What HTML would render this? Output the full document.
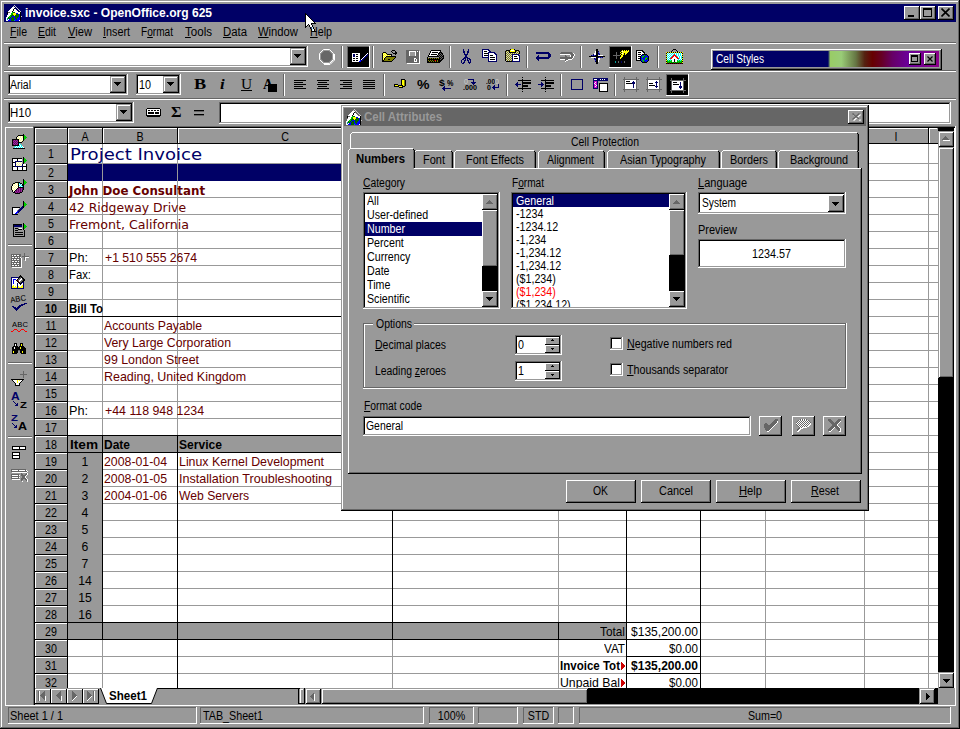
<!DOCTYPE html>
<html><head><meta charset="utf-8"><title>invoice.sxc - OpenOffice.org 625</title>
<style>
html,body{margin:0;padding:0;}
body{width:960px;height:729px;background:#999999;position:relative;overflow:hidden;font-family:"Liberation Sans",sans-serif;font-size:12px;}
div,svg{position:absolute;box-sizing:border-box;}
u{text-decoration:underline;text-underline-offset:1px;}
</style></head><body>
<div style="left:1px;top:1px;width:1px;height:727px;background:#ffffff;"></div>
<div style="left:1px;top:1px;width:957px;height:1px;background:#ffffff;"></div>
<div style="left:958px;top:1px;width:1px;height:727px;background:#666666;"></div>
<div style="left:1px;top:727px;width:958px;height:1px;background:#666666;"></div>
<div style="left:959px;top:0px;width:1px;height:729px;background:#000000;"></div>
<div style="left:0px;top:728px;width:960px;height:1px;background:#000000;"></div>
<div style="left:4px;top:4px;width:952px;height:18px;background:#000066;"></div>
<div style="left:25px;top:5px;line-height:15px;height:15px;font-size:13px;font-family:'Liberation Sans',sans-serif;color:#ffffff;white-space:pre;font-weight:bold;transform:scaleX(0.928);transform-origin:0 0;">invoice.sxc - OpenOffice.org 625</div>
<div style="left:904px;top:6px;width:16px;height:14px;background:#999999;"></div>
<div style="left:904px;top:6px;width:15px;height:1px;background:#ffffff;"></div>
<div style="left:904px;top:6px;width:1px;height:13px;background:#ffffff;"></div>
<div style="left:904px;top:19px;width:16px;height:1px;background:#000000;"></div>
<div style="left:919px;top:6px;width:1px;height:14px;background:#000000;"></div>
<div style="left:905px;top:18px;width:14px;height:1px;background:#666666;"></div>
<div style="left:918px;top:7px;width:1px;height:12px;background:#666666;"></div>
<div style="left:908px;top:15px;width:6px;height:2px;background:#000000;"></div>
<div style="left:920px;top:6px;width:16px;height:14px;background:#999999;"></div>
<div style="left:920px;top:6px;width:15px;height:1px;background:#ffffff;"></div>
<div style="left:920px;top:6px;width:1px;height:13px;background:#ffffff;"></div>
<div style="left:920px;top:19px;width:16px;height:1px;background:#000000;"></div>
<div style="left:935px;top:6px;width:1px;height:14px;background:#000000;"></div>
<div style="left:921px;top:18px;width:14px;height:1px;background:#666666;"></div>
<div style="left:934px;top:7px;width:1px;height:12px;background:#666666;"></div>
<div style="left:923px;top:8px;width:9px;height:9px;border:1px solid #000;border-top:2px solid #000;"></div>
<div style="left:938px;top:6px;width:16px;height:14px;background:#999999;"></div>
<div style="left:938px;top:6px;width:15px;height:1px;background:#ffffff;"></div>
<div style="left:938px;top:6px;width:1px;height:13px;background:#ffffff;"></div>
<div style="left:938px;top:19px;width:16px;height:1px;background:#000000;"></div>
<div style="left:953px;top:6px;width:1px;height:14px;background:#000000;"></div>
<div style="left:939px;top:18px;width:14px;height:1px;background:#666666;"></div>
<div style="left:952px;top:7px;width:1px;height:12px;background:#666666;"></div>
<svg style="left:941px;top:8px" width="9" height="9" viewBox="0 0 9 9" shape-rendering="crispEdges"><path d="M0.5,0.5 L8.5,8.5 M8.5,0.5 L0.5,8.5" stroke="#000" stroke-width="1.6" fill="none" shape-rendering="auto"/></svg>
<div style="left:10px;top:25px;line-height:14px;height:14px;font-size:12px;font-family:'Liberation Sans',sans-serif;color:#000000;white-space:pre;transform:scaleX(0.879);transform-origin:0 0;"><u>F</u>ile</div>
<div style="left:38px;top:25px;line-height:14px;height:14px;font-size:12px;font-family:'Liberation Sans',sans-serif;color:#000000;white-space:pre;transform:scaleX(0.871);transform-origin:0 0;"><u>E</u>dit</div>
<div style="left:68px;top:25px;line-height:14px;height:14px;font-size:12px;font-family:'Liberation Sans',sans-serif;color:#000000;white-space:pre;transform:scaleX(0.931);transform-origin:0 0;"><u>V</u>iew</div>
<div style="left:103px;top:25px;line-height:14px;height:14px;font-size:12px;font-family:'Liberation Sans',sans-serif;color:#000000;white-space:pre;transform:scaleX(0.900);transform-origin:0 0;"><u>I</u>nsert</div>
<div style="left:141px;top:25px;line-height:14px;height:14px;font-size:12px;font-family:'Liberation Sans',sans-serif;color:#000000;white-space:pre;transform:scaleX(0.842);transform-origin:0 0;">F<u>o</u>rmat</div>
<div style="left:185px;top:25px;line-height:14px;height:14px;font-size:12px;font-family:'Liberation Sans',sans-serif;color:#000000;white-space:pre;transform:scaleX(0.964);transform-origin:0 0;"><u>T</u>ools</div>
<div style="left:223px;top:25px;line-height:14px;height:14px;font-size:12px;font-family:'Liberation Sans',sans-serif;color:#000000;white-space:pre;transform:scaleX(0.947);transform-origin:0 0;"><u>D</u>ata</div>
<div style="left:258px;top:25px;line-height:14px;height:14px;font-size:12px;font-family:'Liberation Sans',sans-serif;color:#000000;white-space:pre;transform:scaleX(0.937);transform-origin:0 0;"><u>W</u>indow</div>
<div style="left:310px;top:25px;line-height:14px;height:14px;font-size:12px;font-family:'Liberation Sans',sans-serif;color:#000000;white-space:pre;transform:scaleX(0.891);transform-origin:0 0;z-index:5;"><u>H</u>elp</div>
<div style="left:4px;top:42px;width:952px;height:1px;background:#666666;"></div>
<div style="left:4px;top:43px;width:952px;height:1px;background:#ffffff;"></div>
<div style="left:4px;top:70px;width:952px;height:1px;background:#666666;"></div>
<div style="left:4px;top:71px;width:952px;height:1px;background:#ffffff;"></div>
<div style="left:4px;top:98px;width:952px;height:1px;background:#666666;"></div>
<div style="left:4px;top:99px;width:952px;height:1px;background:#ffffff;"></div>
<div style="left:8px;top:46px;width:300px;height:21px;background:#ffffff;"></div>
<div style="left:8px;top:46px;width:299px;height:1px;background:#666666;"></div>
<div style="left:8px;top:46px;width:1px;height:20px;background:#666666;"></div>
<div style="left:8px;top:66px;width:300px;height:1px;background:#ffffff;"></div>
<div style="left:307px;top:46px;width:1px;height:21px;background:#ffffff;"></div>
<div style="left:9px;top:47px;width:297px;height:1px;background:#000000;"></div>
<div style="left:9px;top:47px;width:1px;height:18px;background:#000000;"></div>
<div style="left:9px;top:65px;width:298px;height:1px;background:#999999;"></div>
<div style="left:306px;top:47px;width:1px;height:19px;background:#999999;"></div>
<div style="left:290px;top:48px;width:16px;height:17px;background:#999999;"></div>
<div style="left:291px;top:49px;width:14px;height:1px;background:#ffffff;"></div>
<div style="left:291px;top:49px;width:1px;height:15px;background:#ffffff;"></div>
<div style="left:290px;top:64px;width:16px;height:1px;background:#000000;"></div>
<div style="left:305px;top:48px;width:1px;height:17px;background:#000000;"></div>
<div style="left:291px;top:63px;width:14px;height:1px;background:#666666;"></div>
<div style="left:304px;top:49px;width:1px;height:15px;background:#666666;"></div>
<div style="left:294px;top:54px;width:7px;height:1px;background:#000000;"></div>
<div style="left:295px;top:55px;width:5px;height:1px;background:#000000;"></div>
<div style="left:296px;top:56px;width:3px;height:1px;background:#000000;"></div>
<div style="left:297px;top:57px;width:1px;height:1px;background:#000000;"></div>
<div style="left:8px;top:74px;width:120px;height:21px;background:#ffffff;"></div>
<div style="left:8px;top:74px;width:119px;height:1px;background:#666666;"></div>
<div style="left:8px;top:74px;width:1px;height:20px;background:#666666;"></div>
<div style="left:8px;top:94px;width:120px;height:1px;background:#ffffff;"></div>
<div style="left:127px;top:74px;width:1px;height:21px;background:#ffffff;"></div>
<div style="left:9px;top:75px;width:117px;height:1px;background:#000000;"></div>
<div style="left:9px;top:75px;width:1px;height:18px;background:#000000;"></div>
<div style="left:9px;top:93px;width:118px;height:1px;background:#999999;"></div>
<div style="left:126px;top:75px;width:1px;height:19px;background:#999999;"></div>
<div style="left:10px;top:78px;line-height:14px;height:14px;font-size:12px;font-family:'Liberation Sans',sans-serif;color:#000000;white-space:pre;transform:scaleX(0.875);transform-origin:0 0;">Arial</div>
<div style="left:110px;top:76px;width:16px;height:17px;background:#999999;"></div>
<div style="left:111px;top:77px;width:14px;height:1px;background:#ffffff;"></div>
<div style="left:111px;top:77px;width:1px;height:15px;background:#ffffff;"></div>
<div style="left:110px;top:92px;width:16px;height:1px;background:#000000;"></div>
<div style="left:125px;top:76px;width:1px;height:17px;background:#000000;"></div>
<div style="left:111px;top:91px;width:14px;height:1px;background:#666666;"></div>
<div style="left:124px;top:77px;width:1px;height:15px;background:#666666;"></div>
<div style="left:114px;top:82px;width:7px;height:1px;background:#000000;"></div>
<div style="left:115px;top:83px;width:5px;height:1px;background:#000000;"></div>
<div style="left:116px;top:84px;width:3px;height:1px;background:#000000;"></div>
<div style="left:117px;top:85px;width:1px;height:1px;background:#000000;"></div>
<div style="left:136px;top:74px;width:45px;height:21px;background:#ffffff;"></div>
<div style="left:136px;top:74px;width:44px;height:1px;background:#666666;"></div>
<div style="left:136px;top:74px;width:1px;height:20px;background:#666666;"></div>
<div style="left:136px;top:94px;width:45px;height:1px;background:#ffffff;"></div>
<div style="left:180px;top:74px;width:1px;height:21px;background:#ffffff;"></div>
<div style="left:137px;top:75px;width:42px;height:1px;background:#000000;"></div>
<div style="left:137px;top:75px;width:1px;height:18px;background:#000000;"></div>
<div style="left:137px;top:93px;width:43px;height:1px;background:#999999;"></div>
<div style="left:179px;top:75px;width:1px;height:19px;background:#999999;"></div>
<div style="left:139px;top:78px;line-height:14px;height:14px;font-size:12px;font-family:'Liberation Sans',sans-serif;color:#000000;white-space:pre;transform:scaleX(0.899);transform-origin:0 0;">10</div>
<div style="left:163px;top:76px;width:16px;height:17px;background:#999999;"></div>
<div style="left:164px;top:77px;width:14px;height:1px;background:#ffffff;"></div>
<div style="left:164px;top:77px;width:1px;height:15px;background:#ffffff;"></div>
<div style="left:163px;top:92px;width:16px;height:1px;background:#000000;"></div>
<div style="left:178px;top:76px;width:1px;height:17px;background:#000000;"></div>
<div style="left:164px;top:91px;width:14px;height:1px;background:#666666;"></div>
<div style="left:177px;top:77px;width:1px;height:15px;background:#666666;"></div>
<div style="left:167px;top:82px;width:7px;height:1px;background:#000000;"></div>
<div style="left:168px;top:83px;width:5px;height:1px;background:#000000;"></div>
<div style="left:169px;top:84px;width:3px;height:1px;background:#000000;"></div>
<div style="left:170px;top:85px;width:1px;height:1px;background:#000000;"></div>
<div style="left:8px;top:102px;width:126px;height:21px;background:#ffffff;"></div>
<div style="left:8px;top:102px;width:125px;height:1px;background:#666666;"></div>
<div style="left:8px;top:102px;width:1px;height:20px;background:#666666;"></div>
<div style="left:8px;top:122px;width:126px;height:1px;background:#ffffff;"></div>
<div style="left:133px;top:102px;width:1px;height:21px;background:#ffffff;"></div>
<div style="left:9px;top:103px;width:123px;height:1px;background:#000000;"></div>
<div style="left:9px;top:103px;width:1px;height:18px;background:#000000;"></div>
<div style="left:9px;top:121px;width:124px;height:1px;background:#999999;"></div>
<div style="left:132px;top:103px;width:1px;height:19px;background:#999999;"></div>
<div style="left:10px;top:106px;line-height:14px;height:14px;font-size:12px;font-family:'Liberation Sans',sans-serif;color:#000000;white-space:pre;transform:scaleX(0.954);transform-origin:0 0;">H10</div>
<div style="left:116px;top:104px;width:16px;height:17px;background:#999999;"></div>
<div style="left:117px;top:105px;width:14px;height:1px;background:#ffffff;"></div>
<div style="left:117px;top:105px;width:1px;height:15px;background:#ffffff;"></div>
<div style="left:116px;top:120px;width:16px;height:1px;background:#000000;"></div>
<div style="left:131px;top:104px;width:1px;height:17px;background:#000000;"></div>
<div style="left:117px;top:119px;width:14px;height:1px;background:#666666;"></div>
<div style="left:130px;top:105px;width:1px;height:15px;background:#666666;"></div>
<div style="left:120px;top:110px;width:7px;height:1px;background:#000000;"></div>
<div style="left:121px;top:111px;width:5px;height:1px;background:#000000;"></div>
<div style="left:122px;top:112px;width:3px;height:1px;background:#000000;"></div>
<div style="left:123px;top:113px;width:1px;height:1px;background:#000000;"></div>
<div style="left:219px;top:102px;width:732px;height:22px;background:#ffffff;"></div>
<div style="left:219px;top:102px;width:731px;height:1px;background:#666666;"></div>
<div style="left:219px;top:102px;width:1px;height:21px;background:#666666;"></div>
<div style="left:219px;top:123px;width:732px;height:1px;background:#ffffff;"></div>
<div style="left:950px;top:102px;width:1px;height:22px;background:#ffffff;"></div>
<div style="left:220px;top:103px;width:729px;height:1px;background:#000000;"></div>
<div style="left:220px;top:103px;width:1px;height:19px;background:#000000;"></div>
<div style="left:220px;top:122px;width:730px;height:1px;background:#999999;"></div>
<div style="left:949px;top:103px;width:1px;height:20px;background:#999999;"></div>
<div style="left:5px;top:127px;width:1px;height:578px;background:#ffffff;"></div>
<div style="left:5px;top:127px;width:28px;height:1px;background:#ffffff;"></div>
<div style="left:5px;top:705px;width:30px;height:1px;background:#ffffff;"></div>
<div style="left:33px;top:126px;width:923px;height:580px;background:#ffffff;"></div>
<div style="left:33px;top:126px;width:922px;height:1px;background:#666666;"></div>
<div style="left:33px;top:126px;width:1px;height:579px;background:#666666;"></div>
<div style="left:34px;top:127px;width:921px;height:1px;background:#000000;"></div>
<div style="left:34px;top:127px;width:1px;height:578px;background:#000000;"></div>
<div style="left:33px;top:705px;width:923px;height:1px;background:#ffffff;"></div>
<div style="left:955px;top:126px;width:1px;height:580px;background:#ffffff;"></div>
<div style="left:68px;top:163px;width:870px;height:1px;background:#999999;"></div>
<div style="left:68px;top:180px;width:870px;height:1px;background:#999999;"></div>
<div style="left:68px;top:197px;width:870px;height:1px;background:#999999;"></div>
<div style="left:68px;top:214px;width:870px;height:1px;background:#999999;"></div>
<div style="left:68px;top:231px;width:870px;height:1px;background:#999999;"></div>
<div style="left:68px;top:248px;width:870px;height:1px;background:#999999;"></div>
<div style="left:68px;top:265px;width:870px;height:1px;background:#999999;"></div>
<div style="left:68px;top:282px;width:870px;height:1px;background:#999999;"></div>
<div style="left:68px;top:299px;width:870px;height:1px;background:#999999;"></div>
<div style="left:68px;top:316px;width:870px;height:1px;background:#999999;"></div>
<div style="left:68px;top:333px;width:870px;height:1px;background:#999999;"></div>
<div style="left:68px;top:350px;width:870px;height:1px;background:#999999;"></div>
<div style="left:68px;top:367px;width:870px;height:1px;background:#999999;"></div>
<div style="left:68px;top:384px;width:870px;height:1px;background:#999999;"></div>
<div style="left:68px;top:401px;width:870px;height:1px;background:#999999;"></div>
<div style="left:68px;top:418px;width:870px;height:1px;background:#999999;"></div>
<div style="left:68px;top:435px;width:870px;height:1px;background:#999999;"></div>
<div style="left:68px;top:452px;width:870px;height:1px;background:#999999;"></div>
<div style="left:68px;top:469px;width:870px;height:1px;background:#999999;"></div>
<div style="left:68px;top:486px;width:870px;height:1px;background:#999999;"></div>
<div style="left:68px;top:503px;width:870px;height:1px;background:#999999;"></div>
<div style="left:68px;top:520px;width:870px;height:1px;background:#999999;"></div>
<div style="left:68px;top:537px;width:870px;height:1px;background:#999999;"></div>
<div style="left:68px;top:554px;width:870px;height:1px;background:#999999;"></div>
<div style="left:68px;top:571px;width:870px;height:1px;background:#999999;"></div>
<div style="left:68px;top:588px;width:870px;height:1px;background:#999999;"></div>
<div style="left:68px;top:605px;width:870px;height:1px;background:#999999;"></div>
<div style="left:68px;top:622px;width:870px;height:1px;background:#999999;"></div>
<div style="left:68px;top:639px;width:870px;height:1px;background:#999999;"></div>
<div style="left:68px;top:656px;width:870px;height:1px;background:#999999;"></div>
<div style="left:68px;top:673px;width:870px;height:1px;background:#999999;"></div>
<div style="left:102px;top:144px;width:1px;height:544px;background:#999999;"></div>
<div style="left:177px;top:144px;width:1px;height:544px;background:#999999;"></div>
<div style="left:392px;top:144px;width:1px;height:544px;background:#999999;"></div>
<div style="left:558px;top:144px;width:1px;height:544px;background:#999999;"></div>
<div style="left:626px;top:144px;width:1px;height:544px;background:#999999;"></div>
<div style="left:700px;top:144px;width:1px;height:544px;background:#999999;"></div>
<div style="left:765px;top:144px;width:1px;height:544px;background:#999999;"></div>
<div style="left:864px;top:144px;width:1px;height:544px;background:#999999;"></div>
<div style="left:928px;top:144px;width:1px;height:544px;background:#999999;"></div>
<div style="left:68px;top:164px;width:559px;height:17px;background:#000066;"></div>
<div style="left:68px;top:436px;width:559px;height:17px;background:#999999;"></div>
<div style="left:68px;top:453px;width:35px;height:170px;background:#999999;"></div>
<div style="left:68px;top:623px;width:558px;height:17px;background:#999999;"></div>
<div style="left:102px;top:164px;width:1px;height:17px;background:#999999;"></div>
<div style="left:177px;top:164px;width:1px;height:17px;background:#999999;"></div>
<div style="left:392px;top:164px;width:1px;height:17px;background:#999999;"></div>
<div style="left:558px;top:164px;width:1px;height:17px;background:#999999;"></div>
<div style="left:626px;top:164px;width:1px;height:17px;background:#999999;"></div>
<div style="left:700px;top:164px;width:1px;height:17px;background:#999999;"></div>
<div style="left:765px;top:164px;width:1px;height:17px;background:#999999;"></div>
<div style="left:864px;top:164px;width:1px;height:17px;background:#999999;"></div>
<div style="left:928px;top:164px;width:1px;height:17px;background:#999999;"></div>
<div style="left:68px;top:435px;width:559px;height:1px;background:#000000;"></div>
<div style="left:68px;top:452px;width:559px;height:1px;background:#000000;"></div>
<div style="left:68px;top:622px;width:559px;height:1px;background:#000000;"></div>
<div style="left:68px;top:639px;width:559px;height:1px;background:#000000;"></div>
<div style="left:102px;top:436px;width:1px;height:204px;background:#000000;"></div>
<div style="left:392px;top:436px;width:1px;height:204px;background:#000000;"></div>
<div style="left:177px;top:436px;width:1px;height:252px;background:#000000;"></div>
<div style="left:626px;top:436px;width:1px;height:252px;background:#000000;"></div>
<div style="left:700px;top:436px;width:1px;height:252px;background:#000000;"></div>
<div style="left:627px;top:622px;width:74px;height:1px;background:#000000;"></div>
<div style="left:627px;top:639px;width:74px;height:1px;background:#000000;"></div>
<div style="left:627px;top:656px;width:74px;height:1px;background:#000000;"></div>
<div style="left:627px;top:673px;width:74px;height:1px;background:#000000;"></div>
<div style="left:558px;top:623px;width:1px;height:17px;background:#000000;"></div>
<div style="left:68px;top:316px;width:559px;height:1px;background:#000000;"></div>
<div style="left:35px;top:128px;width:903px;height:15px;background:#999999;"></div>
<div style="left:35px;top:143px;width:903px;height:1px;background:#000000;"></div>
<div style="left:35px;top:128px;width:1px;height:15px;background:#ffffff;"></div>
<div style="left:35px;top:128px;width:32px;height:1px;background:#ffffff;"></div>
<div style="left:67px;top:128px;width:1px;height:16px;background:#000000;"></div>
<div style="left:68px;top:128px;width:34px;height:1px;background:#ffffff;"></div>
<div style="left:68px;top:128px;width:1px;height:15px;background:#ffffff;"></div>
<div style="left:102px;top:128px;width:1px;height:16px;background:#000000;"></div>
<div style="left:65px;top:130px;line-height:14px;height:14px;font-size:12px;font-family:'Liberation Sans',sans-serif;color:#000000;white-space:pre;width:40px;text-align:center;transform:scaleX(0.89);transform-origin:50% 0;">A</div>
<div style="left:103px;top:128px;width:74px;height:1px;background:#ffffff;"></div>
<div style="left:103px;top:128px;width:1px;height:15px;background:#ffffff;"></div>
<div style="left:177px;top:128px;width:1px;height:16px;background:#000000;"></div>
<div style="left:120px;top:130px;line-height:14px;height:14px;font-size:12px;font-family:'Liberation Sans',sans-serif;color:#000000;white-space:pre;width:40px;text-align:center;transform:scaleX(0.89);transform-origin:50% 0;">B</div>
<div style="left:178px;top:128px;width:214px;height:1px;background:#ffffff;"></div>
<div style="left:178px;top:128px;width:1px;height:15px;background:#ffffff;"></div>
<div style="left:392px;top:128px;width:1px;height:16px;background:#000000;"></div>
<div style="left:265px;top:130px;line-height:14px;height:14px;font-size:12px;font-family:'Liberation Sans',sans-serif;color:#000000;white-space:pre;width:40px;text-align:center;transform:scaleX(0.89);transform-origin:50% 0;">C</div>
<div style="left:393px;top:128px;width:165px;height:1px;background:#ffffff;"></div>
<div style="left:393px;top:128px;width:1px;height:15px;background:#ffffff;"></div>
<div style="left:558px;top:128px;width:1px;height:16px;background:#000000;"></div>
<div style="left:455px;top:130px;line-height:14px;height:14px;font-size:12px;font-family:'Liberation Sans',sans-serif;color:#000000;white-space:pre;width:40px;text-align:center;transform:scaleX(0.89);transform-origin:50% 0;">D</div>
<div style="left:559px;top:128px;width:67px;height:1px;background:#ffffff;"></div>
<div style="left:559px;top:128px;width:1px;height:15px;background:#ffffff;"></div>
<div style="left:626px;top:128px;width:1px;height:16px;background:#000000;"></div>
<div style="left:572px;top:130px;line-height:14px;height:14px;font-size:12px;font-family:'Liberation Sans',sans-serif;color:#000000;white-space:pre;width:40px;text-align:center;transform:scaleX(0.89);transform-origin:50% 0;">E</div>
<div style="left:627px;top:128px;width:73px;height:1px;background:#ffffff;"></div>
<div style="left:627px;top:128px;width:1px;height:15px;background:#ffffff;"></div>
<div style="left:700px;top:128px;width:1px;height:16px;background:#000000;"></div>
<div style="left:643px;top:130px;line-height:14px;height:14px;font-size:12px;font-family:'Liberation Sans',sans-serif;color:#000000;white-space:pre;width:40px;text-align:center;transform:scaleX(0.89);transform-origin:50% 0;">F</div>
<div style="left:701px;top:128px;width:64px;height:1px;background:#ffffff;"></div>
<div style="left:701px;top:128px;width:1px;height:15px;background:#ffffff;"></div>
<div style="left:765px;top:128px;width:1px;height:16px;background:#000000;"></div>
<div style="left:713px;top:130px;line-height:14px;height:14px;font-size:12px;font-family:'Liberation Sans',sans-serif;color:#000000;white-space:pre;width:40px;text-align:center;transform:scaleX(0.89);transform-origin:50% 0;">G</div>
<div style="left:766px;top:128px;width:98px;height:1px;background:#ffffff;"></div>
<div style="left:766px;top:128px;width:1px;height:15px;background:#ffffff;"></div>
<div style="left:864px;top:128px;width:1px;height:16px;background:#000000;"></div>
<div style="left:795px;top:130px;line-height:14px;height:14px;font-size:12px;font-family:'Liberation Sans',sans-serif;color:#000000;white-space:pre;width:40px;text-align:center;transform:scaleX(0.89);transform-origin:50% 0;">H</div>
<div style="left:865px;top:128px;width:63px;height:1px;background:#ffffff;"></div>
<div style="left:865px;top:128px;width:1px;height:15px;background:#ffffff;"></div>
<div style="left:928px;top:128px;width:1px;height:16px;background:#000000;"></div>
<div style="left:876px;top:130px;line-height:14px;height:14px;font-size:12px;font-family:'Liberation Sans',sans-serif;color:#000000;white-space:pre;width:40px;text-align:center;transform:scaleX(0.89);transform-origin:50% 0;">I</div>
<div style="left:929px;top:128px;width:8px;height:1px;background:#ffffff;"></div>
<div style="left:929px;top:128px;width:1px;height:15px;background:#ffffff;"></div>
<div style="left:35px;top:144px;width:32px;height:544px;background:#999999;"></div>
<div style="left:67px;top:144px;width:1px;height:544px;background:#000000;"></div>
<div style="left:35px;top:144px;width:32px;height:1px;background:#ffffff;"></div>
<div style="left:35px;top:144px;width:1px;height:19px;background:#ffffff;"></div>
<div style="left:35px;top:163px;width:33px;height:1px;background:#000000;"></div>
<div style="left:41px;top:147px;line-height:14px;height:14px;font-size:12px;font-family:'Liberation Sans',sans-serif;color:#000000;white-space:pre;width:20px;text-align:center;transform:scaleX(0.89);transform-origin:50% 0;">1</div>
<div style="left:35px;top:164px;width:32px;height:1px;background:#ffffff;"></div>
<div style="left:35px;top:164px;width:1px;height:16px;background:#ffffff;"></div>
<div style="left:35px;top:180px;width:33px;height:1px;background:#000000;"></div>
<div style="left:41px;top:166px;line-height:14px;height:14px;font-size:12px;font-family:'Liberation Sans',sans-serif;color:#000000;white-space:pre;width:20px;text-align:center;transform:scaleX(0.89);transform-origin:50% 0;">2</div>
<div style="left:35px;top:181px;width:32px;height:1px;background:#ffffff;"></div>
<div style="left:35px;top:181px;width:1px;height:16px;background:#ffffff;"></div>
<div style="left:35px;top:197px;width:33px;height:1px;background:#000000;"></div>
<div style="left:41px;top:183px;line-height:14px;height:14px;font-size:12px;font-family:'Liberation Sans',sans-serif;color:#000000;white-space:pre;width:20px;text-align:center;transform:scaleX(0.89);transform-origin:50% 0;">3</div>
<div style="left:35px;top:198px;width:32px;height:1px;background:#ffffff;"></div>
<div style="left:35px;top:198px;width:1px;height:16px;background:#ffffff;"></div>
<div style="left:35px;top:214px;width:33px;height:1px;background:#000000;"></div>
<div style="left:41px;top:200px;line-height:14px;height:14px;font-size:12px;font-family:'Liberation Sans',sans-serif;color:#000000;white-space:pre;width:20px;text-align:center;transform:scaleX(0.89);transform-origin:50% 0;">4</div>
<div style="left:35px;top:215px;width:32px;height:1px;background:#ffffff;"></div>
<div style="left:35px;top:215px;width:1px;height:16px;background:#ffffff;"></div>
<div style="left:35px;top:231px;width:33px;height:1px;background:#000000;"></div>
<div style="left:41px;top:217px;line-height:14px;height:14px;font-size:12px;font-family:'Liberation Sans',sans-serif;color:#000000;white-space:pre;width:20px;text-align:center;transform:scaleX(0.89);transform-origin:50% 0;">5</div>
<div style="left:35px;top:232px;width:32px;height:1px;background:#ffffff;"></div>
<div style="left:35px;top:232px;width:1px;height:16px;background:#ffffff;"></div>
<div style="left:35px;top:248px;width:33px;height:1px;background:#000000;"></div>
<div style="left:41px;top:234px;line-height:14px;height:14px;font-size:12px;font-family:'Liberation Sans',sans-serif;color:#000000;white-space:pre;width:20px;text-align:center;transform:scaleX(0.89);transform-origin:50% 0;">6</div>
<div style="left:35px;top:249px;width:32px;height:1px;background:#ffffff;"></div>
<div style="left:35px;top:249px;width:1px;height:16px;background:#ffffff;"></div>
<div style="left:35px;top:265px;width:33px;height:1px;background:#000000;"></div>
<div style="left:41px;top:251px;line-height:14px;height:14px;font-size:12px;font-family:'Liberation Sans',sans-serif;color:#000000;white-space:pre;width:20px;text-align:center;transform:scaleX(0.89);transform-origin:50% 0;">7</div>
<div style="left:35px;top:266px;width:32px;height:1px;background:#ffffff;"></div>
<div style="left:35px;top:266px;width:1px;height:16px;background:#ffffff;"></div>
<div style="left:35px;top:282px;width:33px;height:1px;background:#000000;"></div>
<div style="left:41px;top:268px;line-height:14px;height:14px;font-size:12px;font-family:'Liberation Sans',sans-serif;color:#000000;white-space:pre;width:20px;text-align:center;transform:scaleX(0.89);transform-origin:50% 0;">8</div>
<div style="left:35px;top:283px;width:32px;height:1px;background:#ffffff;"></div>
<div style="left:35px;top:283px;width:1px;height:16px;background:#ffffff;"></div>
<div style="left:35px;top:299px;width:33px;height:1px;background:#000000;"></div>
<div style="left:41px;top:285px;line-height:14px;height:14px;font-size:12px;font-family:'Liberation Sans',sans-serif;color:#000000;white-space:pre;width:20px;text-align:center;transform:scaleX(0.89);transform-origin:50% 0;">9</div>
<div style="left:35px;top:300px;width:32px;height:1px;background:#ffffff;"></div>
<div style="left:35px;top:300px;width:1px;height:16px;background:#ffffff;"></div>
<div style="left:35px;top:316px;width:33px;height:1px;background:#000000;"></div>
<div style="left:41px;top:302px;line-height:14px;height:14px;font-size:12px;font-family:'Liberation Sans',sans-serif;color:#000000;white-space:pre;font-weight:bold;width:20px;text-align:center;transform:scaleX(0.89);transform-origin:50% 0;">10</div>
<div style="left:35px;top:317px;width:32px;height:1px;background:#ffffff;"></div>
<div style="left:35px;top:317px;width:1px;height:16px;background:#ffffff;"></div>
<div style="left:35px;top:333px;width:33px;height:1px;background:#000000;"></div>
<div style="left:41px;top:319px;line-height:14px;height:14px;font-size:12px;font-family:'Liberation Sans',sans-serif;color:#000000;white-space:pre;width:20px;text-align:center;transform:scaleX(0.89);transform-origin:50% 0;">11</div>
<div style="left:35px;top:334px;width:32px;height:1px;background:#ffffff;"></div>
<div style="left:35px;top:334px;width:1px;height:16px;background:#ffffff;"></div>
<div style="left:35px;top:350px;width:33px;height:1px;background:#000000;"></div>
<div style="left:41px;top:336px;line-height:14px;height:14px;font-size:12px;font-family:'Liberation Sans',sans-serif;color:#000000;white-space:pre;width:20px;text-align:center;transform:scaleX(0.89);transform-origin:50% 0;">12</div>
<div style="left:35px;top:351px;width:32px;height:1px;background:#ffffff;"></div>
<div style="left:35px;top:351px;width:1px;height:16px;background:#ffffff;"></div>
<div style="left:35px;top:367px;width:33px;height:1px;background:#000000;"></div>
<div style="left:41px;top:353px;line-height:14px;height:14px;font-size:12px;font-family:'Liberation Sans',sans-serif;color:#000000;white-space:pre;width:20px;text-align:center;transform:scaleX(0.89);transform-origin:50% 0;">13</div>
<div style="left:35px;top:368px;width:32px;height:1px;background:#ffffff;"></div>
<div style="left:35px;top:368px;width:1px;height:16px;background:#ffffff;"></div>
<div style="left:35px;top:384px;width:33px;height:1px;background:#000000;"></div>
<div style="left:41px;top:370px;line-height:14px;height:14px;font-size:12px;font-family:'Liberation Sans',sans-serif;color:#000000;white-space:pre;width:20px;text-align:center;transform:scaleX(0.89);transform-origin:50% 0;">14</div>
<div style="left:35px;top:385px;width:32px;height:1px;background:#ffffff;"></div>
<div style="left:35px;top:385px;width:1px;height:16px;background:#ffffff;"></div>
<div style="left:35px;top:401px;width:33px;height:1px;background:#000000;"></div>
<div style="left:41px;top:387px;line-height:14px;height:14px;font-size:12px;font-family:'Liberation Sans',sans-serif;color:#000000;white-space:pre;width:20px;text-align:center;transform:scaleX(0.89);transform-origin:50% 0;">15</div>
<div style="left:35px;top:402px;width:32px;height:1px;background:#ffffff;"></div>
<div style="left:35px;top:402px;width:1px;height:16px;background:#ffffff;"></div>
<div style="left:35px;top:418px;width:33px;height:1px;background:#000000;"></div>
<div style="left:41px;top:404px;line-height:14px;height:14px;font-size:12px;font-family:'Liberation Sans',sans-serif;color:#000000;white-space:pre;width:20px;text-align:center;transform:scaleX(0.89);transform-origin:50% 0;">16</div>
<div style="left:35px;top:419px;width:32px;height:1px;background:#ffffff;"></div>
<div style="left:35px;top:419px;width:1px;height:16px;background:#ffffff;"></div>
<div style="left:35px;top:435px;width:33px;height:1px;background:#000000;"></div>
<div style="left:41px;top:421px;line-height:14px;height:14px;font-size:12px;font-family:'Liberation Sans',sans-serif;color:#000000;white-space:pre;width:20px;text-align:center;transform:scaleX(0.89);transform-origin:50% 0;">17</div>
<div style="left:35px;top:436px;width:32px;height:1px;background:#ffffff;"></div>
<div style="left:35px;top:436px;width:1px;height:16px;background:#ffffff;"></div>
<div style="left:35px;top:452px;width:33px;height:1px;background:#000000;"></div>
<div style="left:41px;top:438px;line-height:14px;height:14px;font-size:12px;font-family:'Liberation Sans',sans-serif;color:#000000;white-space:pre;width:20px;text-align:center;transform:scaleX(0.89);transform-origin:50% 0;">18</div>
<div style="left:35px;top:453px;width:32px;height:1px;background:#ffffff;"></div>
<div style="left:35px;top:453px;width:1px;height:16px;background:#ffffff;"></div>
<div style="left:35px;top:469px;width:33px;height:1px;background:#000000;"></div>
<div style="left:41px;top:455px;line-height:14px;height:14px;font-size:12px;font-family:'Liberation Sans',sans-serif;color:#000000;white-space:pre;width:20px;text-align:center;transform:scaleX(0.89);transform-origin:50% 0;">19</div>
<div style="left:35px;top:470px;width:32px;height:1px;background:#ffffff;"></div>
<div style="left:35px;top:470px;width:1px;height:16px;background:#ffffff;"></div>
<div style="left:35px;top:486px;width:33px;height:1px;background:#000000;"></div>
<div style="left:41px;top:472px;line-height:14px;height:14px;font-size:12px;font-family:'Liberation Sans',sans-serif;color:#000000;white-space:pre;width:20px;text-align:center;transform:scaleX(0.89);transform-origin:50% 0;">20</div>
<div style="left:35px;top:487px;width:32px;height:1px;background:#ffffff;"></div>
<div style="left:35px;top:487px;width:1px;height:16px;background:#ffffff;"></div>
<div style="left:35px;top:503px;width:33px;height:1px;background:#000000;"></div>
<div style="left:41px;top:489px;line-height:14px;height:14px;font-size:12px;font-family:'Liberation Sans',sans-serif;color:#000000;white-space:pre;width:20px;text-align:center;transform:scaleX(0.89);transform-origin:50% 0;">21</div>
<div style="left:35px;top:504px;width:32px;height:1px;background:#ffffff;"></div>
<div style="left:35px;top:504px;width:1px;height:16px;background:#ffffff;"></div>
<div style="left:35px;top:520px;width:33px;height:1px;background:#000000;"></div>
<div style="left:41px;top:506px;line-height:14px;height:14px;font-size:12px;font-family:'Liberation Sans',sans-serif;color:#000000;white-space:pre;width:20px;text-align:center;transform:scaleX(0.89);transform-origin:50% 0;">22</div>
<div style="left:35px;top:521px;width:32px;height:1px;background:#ffffff;"></div>
<div style="left:35px;top:521px;width:1px;height:16px;background:#ffffff;"></div>
<div style="left:35px;top:537px;width:33px;height:1px;background:#000000;"></div>
<div style="left:41px;top:523px;line-height:14px;height:14px;font-size:12px;font-family:'Liberation Sans',sans-serif;color:#000000;white-space:pre;width:20px;text-align:center;transform:scaleX(0.89);transform-origin:50% 0;">23</div>
<div style="left:35px;top:538px;width:32px;height:1px;background:#ffffff;"></div>
<div style="left:35px;top:538px;width:1px;height:16px;background:#ffffff;"></div>
<div style="left:35px;top:554px;width:33px;height:1px;background:#000000;"></div>
<div style="left:41px;top:540px;line-height:14px;height:14px;font-size:12px;font-family:'Liberation Sans',sans-serif;color:#000000;white-space:pre;width:20px;text-align:center;transform:scaleX(0.89);transform-origin:50% 0;">24</div>
<div style="left:35px;top:555px;width:32px;height:1px;background:#ffffff;"></div>
<div style="left:35px;top:555px;width:1px;height:16px;background:#ffffff;"></div>
<div style="left:35px;top:571px;width:33px;height:1px;background:#000000;"></div>
<div style="left:41px;top:557px;line-height:14px;height:14px;font-size:12px;font-family:'Liberation Sans',sans-serif;color:#000000;white-space:pre;width:20px;text-align:center;transform:scaleX(0.89);transform-origin:50% 0;">25</div>
<div style="left:35px;top:572px;width:32px;height:1px;background:#ffffff;"></div>
<div style="left:35px;top:572px;width:1px;height:16px;background:#ffffff;"></div>
<div style="left:35px;top:588px;width:33px;height:1px;background:#000000;"></div>
<div style="left:41px;top:574px;line-height:14px;height:14px;font-size:12px;font-family:'Liberation Sans',sans-serif;color:#000000;white-space:pre;width:20px;text-align:center;transform:scaleX(0.89);transform-origin:50% 0;">26</div>
<div style="left:35px;top:589px;width:32px;height:1px;background:#ffffff;"></div>
<div style="left:35px;top:589px;width:1px;height:16px;background:#ffffff;"></div>
<div style="left:35px;top:605px;width:33px;height:1px;background:#000000;"></div>
<div style="left:41px;top:591px;line-height:14px;height:14px;font-size:12px;font-family:'Liberation Sans',sans-serif;color:#000000;white-space:pre;width:20px;text-align:center;transform:scaleX(0.89);transform-origin:50% 0;">27</div>
<div style="left:35px;top:606px;width:32px;height:1px;background:#ffffff;"></div>
<div style="left:35px;top:606px;width:1px;height:16px;background:#ffffff;"></div>
<div style="left:35px;top:622px;width:33px;height:1px;background:#000000;"></div>
<div style="left:41px;top:608px;line-height:14px;height:14px;font-size:12px;font-family:'Liberation Sans',sans-serif;color:#000000;white-space:pre;width:20px;text-align:center;transform:scaleX(0.89);transform-origin:50% 0;">28</div>
<div style="left:35px;top:623px;width:32px;height:1px;background:#ffffff;"></div>
<div style="left:35px;top:623px;width:1px;height:16px;background:#ffffff;"></div>
<div style="left:35px;top:639px;width:33px;height:1px;background:#000000;"></div>
<div style="left:41px;top:625px;line-height:14px;height:14px;font-size:12px;font-family:'Liberation Sans',sans-serif;color:#000000;white-space:pre;width:20px;text-align:center;transform:scaleX(0.89);transform-origin:50% 0;">29</div>
<div style="left:35px;top:640px;width:32px;height:1px;background:#ffffff;"></div>
<div style="left:35px;top:640px;width:1px;height:16px;background:#ffffff;"></div>
<div style="left:35px;top:656px;width:33px;height:1px;background:#000000;"></div>
<div style="left:41px;top:642px;line-height:14px;height:14px;font-size:12px;font-family:'Liberation Sans',sans-serif;color:#000000;white-space:pre;width:20px;text-align:center;transform:scaleX(0.89);transform-origin:50% 0;">30</div>
<div style="left:35px;top:657px;width:32px;height:1px;background:#ffffff;"></div>
<div style="left:35px;top:657px;width:1px;height:16px;background:#ffffff;"></div>
<div style="left:35px;top:673px;width:33px;height:1px;background:#000000;"></div>
<div style="left:41px;top:659px;line-height:14px;height:14px;font-size:12px;font-family:'Liberation Sans',sans-serif;color:#000000;white-space:pre;width:20px;text-align:center;transform:scaleX(0.89);transform-origin:50% 0;">31</div>
<div style="left:35px;top:674px;width:32px;height:1px;background:#ffffff;"></div>
<div style="left:35px;top:674px;width:1px;height:16px;background:#ffffff;"></div>
<div style="left:41px;top:676px;line-height:14px;height:14px;font-size:12px;font-family:'Liberation Sans',sans-serif;color:#000000;white-space:pre;width:20px;text-align:center;transform:scaleX(0.89);transform-origin:50% 0;">32</div>
<div style="left:70px;top:145px;line-height:19px;height:19px;font-size:16px;font-family:'DejaVu Sans','Liberation Sans',sans-serif;color:#000066;white-space:pre;transform:scaleX(1.128);transform-origin:0 0;">Project Invoice</div>
<div style="left:69px;top:183px;line-height:15px;height:15px;font-size:13px;font-family:'DejaVu Sans','Liberation Sans',sans-serif;color:#660000;white-space:pre;font-weight:bold;transform:scaleX(0.910);transform-origin:0 0;">John Doe Consultant</div>
<div style="left:69px;top:200px;line-height:15px;height:15px;font-size:13px;font-family:'DejaVu Sans','Liberation Sans',sans-serif;color:#660000;white-space:pre;transform:scaleX(0.952);transform-origin:0 0;">42 Ridgeway Drive</div>
<div style="left:69px;top:217px;line-height:15px;height:15px;font-size:13px;font-family:'DejaVu Sans','Liberation Sans',sans-serif;color:#660000;white-space:pre;transform:scaleX(0.971);transform-origin:0 0;">Fremont, California</div>
<div style="left:69px;top:250px;line-height:15px;height:15px;font-size:13px;font-family:'Liberation Sans',sans-serif;color:#000000;white-space:pre;transform:scaleX(0.974);transform-origin:0 0;">Ph:</div>
<div style="left:105px;top:250px;line-height:15px;height:15px;font-size:13px;font-family:'Liberation Sans',sans-serif;color:#660000;white-space:pre;transform:scaleX(0.939);transform-origin:0 0;">+1 510 555 2674</div>
<div style="left:69px;top:267px;line-height:15px;height:15px;font-size:13px;font-family:'Liberation Sans',sans-serif;color:#000000;white-space:pre;transform:scaleX(0.870);transform-origin:0 0;">Fax:</div>
<div style="left:69px;top:301px;line-height:15px;height:15px;font-size:13px;font-family:'Liberation Sans',sans-serif;color:#000000;white-space:pre;font-weight:bold;transform:scaleX(0.877);transform-origin:0 0;">Bill To</div>
<div style="left:104px;top:318px;line-height:15px;height:15px;font-size:13px;font-family:'Liberation Sans',sans-serif;color:#660000;white-space:pre;transform:scaleX(0.942);transform-origin:0 0;">Accounts Payable</div>
<div style="left:104px;top:335px;line-height:15px;height:15px;font-size:13px;font-family:'Liberation Sans',sans-serif;color:#660000;white-space:pre;transform:scaleX(0.945);transform-origin:0 0;">Very Large Corporation</div>
<div style="left:104px;top:352px;line-height:15px;height:15px;font-size:13px;font-family:'Liberation Sans',sans-serif;color:#660000;white-space:pre;transform:scaleX(0.952);transform-origin:0 0;">99 London Street</div>
<div style="left:104px;top:369px;line-height:15px;height:15px;font-size:13px;font-family:'Liberation Sans',sans-serif;color:#660000;white-space:pre;transform:scaleX(0.959);transform-origin:0 0;">Reading, United Kingdom</div>
<div style="left:69px;top:403px;line-height:15px;height:15px;font-size:13px;font-family:'Liberation Sans',sans-serif;color:#000000;white-space:pre;transform:scaleX(0.974);transform-origin:0 0;">Ph:</div>
<div style="left:105px;top:403px;line-height:15px;height:15px;font-size:13px;font-family:'Liberation Sans',sans-serif;color:#660000;white-space:pre;transform:scaleX(0.950);transform-origin:0 0;">+44 118 948 1234</div>
<div style="left:70px;top:437px;line-height:15px;height:15px;font-size:13px;font-family:'Liberation Sans',sans-serif;color:#000000;white-space:pre;font-weight:bold;transform:scaleX(1.048);transform-origin:0 0;">Item</div>
<div style="left:104px;top:437px;line-height:15px;height:15px;font-size:13px;font-family:'Liberation Sans',sans-serif;color:#000000;white-space:pre;font-weight:bold;transform:scaleX(0.923);transform-origin:0 0;">Date</div>
<div style="left:179px;top:437px;line-height:15px;height:15px;font-size:13px;font-family:'Liberation Sans',sans-serif;color:#000000;white-space:pre;font-weight:bold;transform:scaleX(0.930);transform-origin:0 0;">Service</div>
<div style="left:68px;top:454px;line-height:15px;height:15px;font-size:13px;font-family:'Liberation Sans',sans-serif;color:#000000;white-space:pre;width:34px;text-align:center;transform:scaleX(0.94);transform-origin:50% 0;">1</div>
<div style="left:68px;top:471px;line-height:15px;height:15px;font-size:13px;font-family:'Liberation Sans',sans-serif;color:#000000;white-space:pre;width:34px;text-align:center;transform:scaleX(0.94);transform-origin:50% 0;">2</div>
<div style="left:68px;top:488px;line-height:15px;height:15px;font-size:13px;font-family:'Liberation Sans',sans-serif;color:#000000;white-space:pre;width:34px;text-align:center;transform:scaleX(0.94);transform-origin:50% 0;">3</div>
<div style="left:68px;top:505px;line-height:15px;height:15px;font-size:13px;font-family:'Liberation Sans',sans-serif;color:#000000;white-space:pre;width:34px;text-align:center;transform:scaleX(0.94);transform-origin:50% 0;">4</div>
<div style="left:68px;top:522px;line-height:15px;height:15px;font-size:13px;font-family:'Liberation Sans',sans-serif;color:#000000;white-space:pre;width:34px;text-align:center;transform:scaleX(0.94);transform-origin:50% 0;">5</div>
<div style="left:68px;top:539px;line-height:15px;height:15px;font-size:13px;font-family:'Liberation Sans',sans-serif;color:#000000;white-space:pre;width:34px;text-align:center;transform:scaleX(0.94);transform-origin:50% 0;">6</div>
<div style="left:68px;top:556px;line-height:15px;height:15px;font-size:13px;font-family:'Liberation Sans',sans-serif;color:#000000;white-space:pre;width:34px;text-align:center;transform:scaleX(0.94);transform-origin:50% 0;">7</div>
<div style="left:68px;top:573px;line-height:15px;height:15px;font-size:13px;font-family:'Liberation Sans',sans-serif;color:#000000;white-space:pre;width:34px;text-align:center;transform:scaleX(0.94);transform-origin:50% 0;">14</div>
<div style="left:68px;top:590px;line-height:15px;height:15px;font-size:13px;font-family:'Liberation Sans',sans-serif;color:#000000;white-space:pre;width:34px;text-align:center;transform:scaleX(0.94);transform-origin:50% 0;">15</div>
<div style="left:68px;top:607px;line-height:15px;height:15px;font-size:13px;font-family:'Liberation Sans',sans-serif;color:#000000;white-space:pre;width:34px;text-align:center;transform:scaleX(0.94);transform-origin:50% 0;">16</div>
<div style="left:104px;top:454px;line-height:15px;height:15px;font-size:13px;font-family:'Liberation Sans',sans-serif;color:#660000;white-space:pre;transform:scaleX(0.947);transform-origin:0 0;">2008-01-04</div>
<div style="left:179px;top:454px;line-height:15px;height:15px;font-size:13px;font-family:'Liberation Sans',sans-serif;color:#660000;white-space:pre;transform:scaleX(0.951);transform-origin:0 0;">Linux Kernel Development</div>
<div style="left:104px;top:471px;line-height:15px;height:15px;font-size:13px;font-family:'Liberation Sans',sans-serif;color:#660000;white-space:pre;transform:scaleX(0.947);transform-origin:0 0;">2008-01-05</div>
<div style="left:179px;top:471px;line-height:15px;height:15px;font-size:13px;font-family:'Liberation Sans',sans-serif;color:#660000;white-space:pre;transform:scaleX(0.967);transform-origin:0 0;">Installation Troubleshooting</div>
<div style="left:104px;top:488px;line-height:15px;height:15px;font-size:13px;font-family:'Liberation Sans',sans-serif;color:#660000;white-space:pre;transform:scaleX(0.947);transform-origin:0 0;">2004-01-06</div>
<div style="left:179px;top:488px;line-height:15px;height:15px;font-size:13px;font-family:'Liberation Sans',sans-serif;color:#660000;white-space:pre;transform:scaleX(0.935);transform-origin:0 0;">Web Servers</div>
<div style="left:600px;top:624px;line-height:15px;height:15px;font-size:13px;font-family:'Liberation Sans',sans-serif;color:#000000;white-space:pre;transform:scaleX(0.910);transform-origin:0 0;">Total</div>
<div style="left:604px;top:641px;line-height:15px;height:15px;font-size:13px;font-family:'Liberation Sans',sans-serif;color:#000000;white-space:pre;transform:scaleX(0.899);transform-origin:0 0;">VAT</div>
<div style="left:560px;top:658px;line-height:15px;height:15px;font-size:13px;font-family:'Liberation Sans',sans-serif;color:#000000;white-space:pre;font-weight:bold;transform:scaleX(0.887);transform-origin:0 0;">Invoice Tot</div>
<div style="left:560px;top:675px;line-height:15px;height:15px;font-size:13px;font-family:'Liberation Sans',sans-serif;color:#000000;white-space:pre;transform:scaleX(0.943);transform-origin:0 0;">Unpaid Bal</div>
<div style="left:631px;top:624px;line-height:15px;height:15px;font-size:13px;font-family:'Liberation Sans',sans-serif;color:#000000;white-space:pre;transform:scaleX(0.927);transform-origin:0 0;">$135,200.00</div>
<div style="left:669px;top:641px;line-height:15px;height:15px;font-size:13px;font-family:'Liberation Sans',sans-serif;color:#000000;white-space:pre;transform:scaleX(0.892);transform-origin:0 0;">$0.00</div>
<div style="left:631px;top:658px;line-height:15px;height:15px;font-size:13px;font-family:'Liberation Sans',sans-serif;color:#000000;white-space:pre;font-weight:bold;transform:scaleX(0.927);transform-origin:0 0;">$135,200.00</div>
<div style="left:669px;top:675px;line-height:15px;height:15px;font-size:13px;font-family:'Liberation Sans',sans-serif;color:#000000;white-space:pre;transform:scaleX(0.892);transform-origin:0 0;">$0.00</div>
<svg style="left:620px;top:662px" width="6" height="8" viewBox="0 0 6 8" shape-rendering="crispEdges"><path d="M1,0 L5,4 L1,8 Z" fill="#cc0000"/></svg>
<svg style="left:620px;top:679px" width="6" height="8" viewBox="0 0 6 8" shape-rendering="crispEdges"><path d="M1,0 L5,4 L1,8 Z" fill="#cc0000"/></svg>
<div style="left:938px;top:128px;width:16px;height:560px;background:#000000;"></div>
<div style="left:938px;top:131px;width:16px;height:16px;background:#999999;"></div>
<div style="left:939px;top:132px;width:15px;height:15px;background:#999999;"></div>
<div style="left:939px;top:132px;width:14px;height:1px;background:#ffffff;"></div>
<div style="left:939px;top:132px;width:1px;height:14px;background:#ffffff;"></div>
<div style="left:939px;top:146px;width:15px;height:1px;background:#000000;"></div>
<div style="left:953px;top:132px;width:1px;height:15px;background:#000000;"></div>
<div style="left:940px;top:145px;width:13px;height:1px;background:#666666;"></div>
<div style="left:952px;top:133px;width:1px;height:13px;background:#666666;"></div>
<div style="left:945px;top:136px;width:1px;height:1px;background:#666666;"></div>
<div style="left:944px;top:137px;width:3px;height:1px;background:#666666;"></div>
<div style="left:943px;top:138px;width:5px;height:1px;background:#666666;"></div>
<div style="left:942px;top:139px;width:7px;height:1px;background:#666666;"></div>
<div style="left:943px;top:140px;width:7px;height:1px;background:#ffffff;"></div>
<div style="left:938px;top:672px;width:16px;height:16px;background:#999999;"></div>
<div style="left:939px;top:673px;width:15px;height:15px;background:#999999;"></div>
<div style="left:939px;top:673px;width:14px;height:1px;background:#ffffff;"></div>
<div style="left:939px;top:673px;width:1px;height:14px;background:#ffffff;"></div>
<div style="left:939px;top:687px;width:15px;height:1px;background:#000000;"></div>
<div style="left:953px;top:673px;width:1px;height:15px;background:#000000;"></div>
<div style="left:940px;top:686px;width:13px;height:1px;background:#666666;"></div>
<div style="left:952px;top:674px;width:1px;height:13px;background:#666666;"></div>
<div style="left:943px;top:679px;width:7px;height:1px;background:#000000;"></div>
<div style="left:944px;top:680px;width:5px;height:1px;background:#000000;"></div>
<div style="left:945px;top:681px;width:3px;height:1px;background:#000000;"></div>
<div style="left:946px;top:682px;width:1px;height:1px;background:#000000;"></div>
<div style="left:938px;top:147px;width:16px;height:231px;background:#999999;"></div>
<div style="left:939px;top:148px;width:15px;height:230px;background:#999999;"></div>
<div style="left:939px;top:148px;width:14px;height:1px;background:#ffffff;"></div>
<div style="left:939px;top:148px;width:1px;height:229px;background:#ffffff;"></div>
<div style="left:939px;top:377px;width:15px;height:1px;background:#000000;"></div>
<div style="left:953px;top:148px;width:1px;height:230px;background:#000000;"></div>
<div style="left:940px;top:376px;width:13px;height:1px;background:#666666;"></div>
<div style="left:952px;top:149px;width:1px;height:228px;background:#666666;"></div>
<div style="left:35px;top:688px;width:903px;height:16px;background:#999999;"></div>
<div style="left:588px;top:688px;width:350px;height:16px;background:#000000;"></div>
<div style="left:298px;top:688px;width:1px;height:16px;background:#000000;"></div>
<div style="left:299px;top:688px;width:5px;height:16px;background:#999999;"></div>
<div style="left:300px;top:689px;width:1px;height:14px;background:#ffffff;"></div>
<div style="left:300px;top:689px;width:3px;height:1px;background:#ffffff;"></div>
<div style="left:304px;top:688px;width:1px;height:16px;background:#000000;"></div>
<div style="left:299px;top:703px;width:6px;height:1px;background:#000000;"></div>
<div style="left:305px;top:688px;width:16px;height:16px;background:#999999;"></div>
<div style="left:306px;top:689px;width:15px;height:15px;background:#999999;"></div>
<div style="left:306px;top:689px;width:14px;height:1px;background:#ffffff;"></div>
<div style="left:306px;top:689px;width:1px;height:14px;background:#ffffff;"></div>
<div style="left:306px;top:703px;width:15px;height:1px;background:#000000;"></div>
<div style="left:320px;top:689px;width:1px;height:15px;background:#000000;"></div>
<div style="left:307px;top:702px;width:13px;height:1px;background:#666666;"></div>
<div style="left:319px;top:690px;width:1px;height:13px;background:#666666;"></div>
<div style="left:313px;top:693px;width:1px;height:7px;background:#666666;"></div>
<div style="left:312px;top:694px;width:1px;height:5px;background:#666666;"></div>
<div style="left:311px;top:695px;width:1px;height:3px;background:#666666;"></div>
<div style="left:310px;top:696px;width:1px;height:1px;background:#666666;"></div>
<div style="left:314px;top:694px;width:1px;height:7px;background:#ffffff;"></div>
<div style="left:919px;top:688px;width:16px;height:16px;background:#999999;"></div>
<div style="left:920px;top:689px;width:15px;height:15px;background:#999999;"></div>
<div style="left:920px;top:689px;width:14px;height:1px;background:#ffffff;"></div>
<div style="left:920px;top:689px;width:1px;height:14px;background:#ffffff;"></div>
<div style="left:920px;top:703px;width:15px;height:1px;background:#000000;"></div>
<div style="left:934px;top:689px;width:1px;height:15px;background:#000000;"></div>
<div style="left:921px;top:702px;width:13px;height:1px;background:#666666;"></div>
<div style="left:933px;top:690px;width:1px;height:13px;background:#666666;"></div>
<div style="left:926px;top:693px;width:1px;height:7px;background:#000000;"></div>
<div style="left:927px;top:694px;width:1px;height:5px;background:#000000;"></div>
<div style="left:928px;top:695px;width:1px;height:3px;background:#000000;"></div>
<div style="left:929px;top:696px;width:1px;height:1px;background:#000000;"></div>
<div style="left:321px;top:688px;width:267px;height:16px;background:#999999;"></div>
<div style="left:322px;top:689px;width:266px;height:15px;background:#999999;"></div>
<div style="left:322px;top:689px;width:265px;height:1px;background:#ffffff;"></div>
<div style="left:322px;top:689px;width:1px;height:14px;background:#ffffff;"></div>
<div style="left:322px;top:703px;width:266px;height:1px;background:#000000;"></div>
<div style="left:587px;top:689px;width:1px;height:15px;background:#000000;"></div>
<div style="left:323px;top:702px;width:264px;height:1px;background:#666666;"></div>
<div style="left:586px;top:690px;width:1px;height:13px;background:#666666;"></div>
<div style="left:938px;top:688px;width:17px;height:17px;background:#999999;"></div>
<div style="left:35px;top:689px;width:16px;height:15px;background:#999999;"></div>
<div style="left:35px;top:689px;width:15px;height:1px;background:#ffffff;"></div>
<div style="left:35px;top:689px;width:1px;height:14px;background:#ffffff;"></div>
<div style="left:35px;top:703px;width:16px;height:1px;background:#000000;"></div>
<div style="left:50px;top:689px;width:1px;height:15px;background:#000000;"></div>
<div style="left:51px;top:689px;width:16px;height:15px;background:#999999;"></div>
<div style="left:51px;top:689px;width:15px;height:1px;background:#ffffff;"></div>
<div style="left:51px;top:689px;width:1px;height:14px;background:#ffffff;"></div>
<div style="left:51px;top:703px;width:16px;height:1px;background:#000000;"></div>
<div style="left:66px;top:689px;width:1px;height:15px;background:#000000;"></div>
<div style="left:67px;top:689px;width:16px;height:15px;background:#999999;"></div>
<div style="left:67px;top:689px;width:15px;height:1px;background:#ffffff;"></div>
<div style="left:67px;top:689px;width:1px;height:14px;background:#ffffff;"></div>
<div style="left:67px;top:703px;width:16px;height:1px;background:#000000;"></div>
<div style="left:82px;top:689px;width:1px;height:15px;background:#000000;"></div>
<div style="left:83px;top:689px;width:16px;height:15px;background:#999999;"></div>
<div style="left:83px;top:689px;width:15px;height:1px;background:#ffffff;"></div>
<div style="left:83px;top:689px;width:1px;height:14px;background:#ffffff;"></div>
<div style="left:83px;top:703px;width:16px;height:1px;background:#000000;"></div>
<div style="left:98px;top:689px;width:1px;height:15px;background:#000000;"></div>
<div style="left:157px;top:688px;width:143px;height:1px;background:#000000;"></div>
<svg style="left:100px;top:688px" width="60" height="16" viewBox="0 0 60 16" shape-rendering="crispEdges"><path d="M0.5,0 L6.5,15.5 L51.5,15.5 L57.5,0" fill="#fff" stroke="#000" stroke-width="1" shape-rendering="auto"/></svg>
<div style="left:109px;top:689px;line-height:14px;height:14px;font-size:12px;font-family:'Liberation Sans',sans-serif;color:#000000;white-space:pre;font-weight:bold;transform:scaleX(0.966);transform-origin:0 0;">Sheet1</div>
<div style="left:35px;top:704px;width:903px;height:1px;background:#999999;"></div>
<div style="left:8px;top:707px;width:188px;height:1px;background:#666666;"></div>
<div style="left:8px;top:707px;width:1px;height:16px;background:#666666;"></div>
<div style="left:8px;top:723px;width:189px;height:1px;background:#ffffff;"></div>
<div style="left:196px;top:707px;width:1px;height:17px;background:#ffffff;"></div>
<div style="left:200px;top:707px;width:223px;height:1px;background:#666666;"></div>
<div style="left:200px;top:707px;width:1px;height:16px;background:#666666;"></div>
<div style="left:200px;top:723px;width:224px;height:1px;background:#ffffff;"></div>
<div style="left:423px;top:707px;width:1px;height:17px;background:#ffffff;"></div>
<div style="left:429px;top:707px;width:44px;height:1px;background:#666666;"></div>
<div style="left:429px;top:707px;width:1px;height:16px;background:#666666;"></div>
<div style="left:429px;top:723px;width:45px;height:1px;background:#ffffff;"></div>
<div style="left:473px;top:707px;width:1px;height:17px;background:#ffffff;"></div>
<div style="left:478px;top:707px;width:39px;height:1px;background:#666666;"></div>
<div style="left:478px;top:707px;width:1px;height:16px;background:#666666;"></div>
<div style="left:478px;top:723px;width:40px;height:1px;background:#ffffff;"></div>
<div style="left:517px;top:707px;width:1px;height:17px;background:#ffffff;"></div>
<div style="left:523px;top:707px;width:30px;height:1px;background:#666666;"></div>
<div style="left:523px;top:707px;width:1px;height:16px;background:#666666;"></div>
<div style="left:523px;top:723px;width:31px;height:1px;background:#ffffff;"></div>
<div style="left:553px;top:707px;width:1px;height:17px;background:#ffffff;"></div>
<div style="left:558px;top:707px;width:15px;height:1px;background:#666666;"></div>
<div style="left:558px;top:707px;width:1px;height:16px;background:#666666;"></div>
<div style="left:558px;top:723px;width:16px;height:1px;background:#ffffff;"></div>
<div style="left:573px;top:707px;width:1px;height:17px;background:#ffffff;"></div>
<div style="left:579px;top:707px;width:371px;height:1px;background:#666666;"></div>
<div style="left:579px;top:707px;width:1px;height:16px;background:#666666;"></div>
<div style="left:579px;top:723px;width:372px;height:1px;background:#ffffff;"></div>
<div style="left:950px;top:707px;width:1px;height:17px;background:#ffffff;"></div>
<div style="left:10px;top:709px;line-height:14px;height:14px;font-size:12px;font-family:'Liberation Sans',sans-serif;color:#000000;white-space:pre;transform:scaleX(0.913);transform-origin:0 0;">Sheet 1 / 1</div>
<div style="left:203px;top:709px;line-height:14px;height:14px;font-size:12px;font-family:'Liberation Sans',sans-serif;color:#000000;white-space:pre;transform:scaleX(0.894);transform-origin:0 0;">TAB_Sheet1</div>
<div style="left:429px;top:709px;line-height:14px;height:14px;font-size:12px;font-family:'Liberation Sans',sans-serif;color:#000000;white-space:pre;width:45px;text-align:center;transform:scaleX(0.89);transform-origin:50% 0;">100%</div>
<div style="left:523px;top:709px;line-height:14px;height:14px;font-size:12px;font-family:'Liberation Sans',sans-serif;color:#000000;white-space:pre;width:31px;text-align:center;transform:scaleX(0.89);transform-origin:50% 0;">STD</div>
<div style="left:579px;top:709px;line-height:14px;height:14px;font-size:12px;font-family:'Liberation Sans',sans-serif;color:#000000;white-space:pre;width:372px;text-align:center;transform:scaleX(0.89);transform-origin:50% 0;">Sum=0</div>
<div style="left:341px;top:105px;width:528px;height:406px;background:#999999;"></div>
<div style="left:342px;top:106px;width:525px;height:1px;background:#ffffff;"></div>
<div style="left:342px;top:106px;width:1px;height:403px;background:#ffffff;"></div>
<div style="left:342px;top:509px;width:526px;height:1px;background:#666666;"></div>
<div style="left:867px;top:106px;width:1px;height:404px;background:#666666;"></div>
<div style="left:341px;top:510px;width:528px;height:1px;background:#000000;"></div>
<div style="left:868px;top:105px;width:1px;height:406px;background:#000000;"></div>
<div style="left:344px;top:108px;width:522px;height:18px;background:#666666;"></div>
<div style="left:364px;top:109px;line-height:15px;height:15px;font-size:13px;font-family:'Liberation Sans',sans-serif;color:#999999;white-space:pre;font-weight:bold;transform:scaleX(0.883);transform-origin:0 0;">Cell Attributes</div>
<div style="left:848px;top:110px;width:16px;height:14px;background:#999999;"></div>
<div style="left:848px;top:110px;width:15px;height:1px;background:#ffffff;"></div>
<div style="left:848px;top:110px;width:1px;height:13px;background:#ffffff;"></div>
<div style="left:848px;top:123px;width:16px;height:1px;background:#000000;"></div>
<div style="left:863px;top:110px;width:1px;height:14px;background:#000000;"></div>
<div style="left:849px;top:122px;width:14px;height:1px;background:#666666;"></div>
<div style="left:862px;top:111px;width:1px;height:12px;background:#666666;"></div>
<svg style="left:852px;top:113px" width="9" height="8" viewBox="0 0 9 8" shape-rendering="crispEdges"><path d="M1.5,1.5 L8.5,7.5 M8.5,1.5 L1.5,7.5" stroke="#fff" stroke-width="1.5" fill="none" shape-rendering="auto"/><path d="M0.5,0.5 L7.5,6.5 M7.5,0.5 L0.5,6.5" stroke="#666" stroke-width="1.5" fill="none" shape-rendering="auto"/></svg>
<div style="left:350px;top:134px;width:1px;height:17px;background:#ffffff;"></div>
<div style="left:351px;top:133px;width:1px;height:1px;background:#ffffff;"></div>
<div style="left:352px;top:132px;width:505px;height:1px;background:#ffffff;"></div>
<div style="left:857px;top:133px;width:1px;height:1px;background:#000000;"></div>
<div style="left:858px;top:134px;width:1px;height:17px;background:#000000;"></div>
<div style="left:857px;top:134px;width:1px;height:17px;background:#666666;"></div>
<div style="left:571px;top:135px;line-height:14px;height:14px;font-size:12px;font-family:'Liberation Sans',sans-serif;color:#000000;white-space:pre;transform:scaleX(0.871);transform-origin:0 0;">Cell Protection</div>
<div style="left:348px;top:168px;width:513px;height:1px;background:#ffffff;"></div>
<div style="left:348px;top:168px;width:1px;height:305px;background:#ffffff;"></div>
<div style="left:349px;top:472px;width:512px;height:1px;background:#666666;"></div>
<div style="left:860px;top:169px;width:1px;height:304px;background:#666666;"></div>
<div style="left:348px;top:473px;width:514px;height:1px;background:#000000;"></div>
<div style="left:861px;top:168px;width:1px;height:306px;background:#000000;"></div>
<div style="left:415px;top:151px;width:1px;height:1px;background:#ffffff;"></div>
<div style="left:416px;top:150px;width:35px;height:1px;background:#ffffff;"></div>
<div style="left:451px;top:151px;width:1px;height:1px;background:#000000;"></div>
<div style="left:452px;top:152px;width:1px;height:16px;background:#000000;"></div>
<div style="left:451px;top:152px;width:1px;height:16px;background:#666666;"></div>
<div style="left:423px;top:153px;line-height:14px;height:14px;font-size:12px;font-family:'Liberation Sans',sans-serif;color:#000000;white-space:pre;transform:scaleX(0.916);transform-origin:0 0;">Font</div>
<div style="left:454px;top:152px;width:1px;height:16px;background:#ffffff;"></div>
<div style="left:455px;top:151px;width:1px;height:1px;background:#ffffff;"></div>
<div style="left:456px;top:150px;width:78px;height:1px;background:#ffffff;"></div>
<div style="left:534px;top:151px;width:1px;height:1px;background:#000000;"></div>
<div style="left:535px;top:152px;width:1px;height:16px;background:#000000;"></div>
<div style="left:534px;top:152px;width:1px;height:16px;background:#666666;"></div>
<div style="left:466px;top:153px;line-height:14px;height:14px;font-size:12px;font-family:'Liberation Sans',sans-serif;color:#000000;white-space:pre;transform:scaleX(0.909);transform-origin:0 0;">Font Effects</div>
<div style="left:538px;top:152px;width:1px;height:16px;background:#ffffff;"></div>
<div style="left:539px;top:151px;width:1px;height:1px;background:#ffffff;"></div>
<div style="left:540px;top:150px;width:63px;height:1px;background:#ffffff;"></div>
<div style="left:603px;top:151px;width:1px;height:1px;background:#000000;"></div>
<div style="left:604px;top:152px;width:1px;height:16px;background:#000000;"></div>
<div style="left:603px;top:152px;width:1px;height:16px;background:#666666;"></div>
<div style="left:547px;top:153px;line-height:14px;height:14px;font-size:12px;font-family:'Liberation Sans',sans-serif;color:#000000;white-space:pre;transform:scaleX(0.881);transform-origin:0 0;">Alignment</div>
<div style="left:607px;top:152px;width:1px;height:16px;background:#ffffff;"></div>
<div style="left:608px;top:151px;width:1px;height:1px;background:#ffffff;"></div>
<div style="left:609px;top:150px;width:109px;height:1px;background:#ffffff;"></div>
<div style="left:718px;top:151px;width:1px;height:1px;background:#000000;"></div>
<div style="left:719px;top:152px;width:1px;height:16px;background:#000000;"></div>
<div style="left:718px;top:152px;width:1px;height:16px;background:#666666;"></div>
<div style="left:620px;top:153px;line-height:14px;height:14px;font-size:12px;font-family:'Liberation Sans',sans-serif;color:#000000;white-space:pre;transform:scaleX(0.897);transform-origin:0 0;">Asian Typography</div>
<div style="left:721px;top:152px;width:1px;height:16px;background:#ffffff;"></div>
<div style="left:722px;top:151px;width:1px;height:1px;background:#ffffff;"></div>
<div style="left:723px;top:150px;width:52px;height:1px;background:#ffffff;"></div>
<div style="left:775px;top:151px;width:1px;height:1px;background:#000000;"></div>
<div style="left:776px;top:152px;width:1px;height:16px;background:#000000;"></div>
<div style="left:775px;top:152px;width:1px;height:16px;background:#666666;"></div>
<div style="left:730px;top:153px;line-height:14px;height:14px;font-size:12px;font-family:'Liberation Sans',sans-serif;color:#000000;white-space:pre;transform:scaleX(0.904);transform-origin:0 0;">Borders</div>
<div style="left:778px;top:152px;width:1px;height:16px;background:#ffffff;"></div>
<div style="left:779px;top:151px;width:1px;height:1px;background:#ffffff;"></div>
<div style="left:780px;top:150px;width:77px;height:1px;background:#ffffff;"></div>
<div style="left:857px;top:151px;width:1px;height:1px;background:#000000;"></div>
<div style="left:858px;top:152px;width:1px;height:16px;background:#000000;"></div>
<div style="left:857px;top:152px;width:1px;height:16px;background:#666666;"></div>
<div style="left:790px;top:153px;line-height:14px;height:14px;font-size:12px;font-family:'Liberation Sans',sans-serif;color:#000000;white-space:pre;transform:scaleX(0.906);transform-origin:0 0;">Background</div>
<div style="left:349px;top:149px;width:65px;height:20px;background:#999999;"></div>
<div style="left:348px;top:150px;width:1px;height:18px;background:#ffffff;"></div>
<div style="left:349px;top:149px;width:1px;height:1px;background:#ffffff;"></div>
<div style="left:350px;top:148px;width:63px;height:1px;background:#ffffff;"></div>
<div style="left:413px;top:149px;width:1px;height:1px;background:#000000;"></div>
<div style="left:414px;top:150px;width:1px;height:18px;background:#000000;"></div>
<div style="left:413px;top:150px;width:1px;height:18px;background:#666666;"></div>
<div style="left:356px;top:152px;line-height:14px;height:14px;font-size:12px;font-family:'Liberation Sans',sans-serif;color:#000000;white-space:pre;font-weight:bold;transform:scaleX(0.942);transform-origin:0 0;">Numbers</div>
<div style="left:363px;top:176px;line-height:14px;height:14px;font-size:12px;font-family:'Liberation Sans',sans-serif;color:#000000;white-space:pre;transform:scaleX(0.863);transform-origin:0 0;"><u>C</u>ategory</div>
<div style="left:512px;top:176px;line-height:14px;height:14px;font-size:12px;font-family:'Liberation Sans',sans-serif;color:#000000;white-space:pre;transform:scaleX(0.842);transform-origin:0 0;">F<u>o</u>rmat</div>
<div style="left:698px;top:176px;line-height:14px;height:14px;font-size:12px;font-family:'Liberation Sans',sans-serif;color:#000000;white-space:pre;transform:scaleX(0.918);transform-origin:0 0;"><u>L</u>anguage</div>
<div style="left:698px;top:223px;line-height:14px;height:14px;font-size:12px;font-family:'Liberation Sans',sans-serif;color:#000000;white-space:pre;transform:scaleX(0.914);transform-origin:0 0;">Preview</div>
<div style="left:363px;top:192px;width:137px;height:117px;background:#ffffff;"></div>
<div style="left:363px;top:192px;width:136px;height:1px;background:#666666;"></div>
<div style="left:363px;top:192px;width:1px;height:116px;background:#666666;"></div>
<div style="left:363px;top:308px;width:137px;height:1px;background:#ffffff;"></div>
<div style="left:499px;top:192px;width:1px;height:117px;background:#ffffff;"></div>
<div style="left:364px;top:193px;width:134px;height:1px;background:#000000;"></div>
<div style="left:364px;top:193px;width:1px;height:114px;background:#000000;"></div>
<div style="left:364px;top:307px;width:135px;height:1px;background:#999999;"></div>
<div style="left:498px;top:193px;width:1px;height:115px;background:#999999;"></div>
<div style="left:365px;top:194px;width:117px;height:113px;overflow:hidden">
<div style="left:2px;top:0px;line-height:14px;height:14px;font-size:12px;font-family:'Liberation Sans',sans-serif;color:#000000;white-space:pre;transform:scaleX(0.89);transform-origin:0 0;">All</div>
<div style="left:2px;top:14px;line-height:14px;height:14px;font-size:12px;font-family:'Liberation Sans',sans-serif;color:#000000;white-space:pre;transform:scaleX(0.89);transform-origin:0 0;">User-defined</div>
<div style="left:0px;top:28px;width:117px;height:14px;background:#000066;"></div>
<div style="left:2px;top:28px;line-height:14px;height:14px;font-size:12px;font-family:'Liberation Sans',sans-serif;color:#ffffff;white-space:pre;transform:scaleX(0.89);transform-origin:0 0;">Number</div>
<div style="left:2px;top:42px;line-height:14px;height:14px;font-size:12px;font-family:'Liberation Sans',sans-serif;color:#000000;white-space:pre;transform:scaleX(0.89);transform-origin:0 0;">Percent</div>
<div style="left:2px;top:56px;line-height:14px;height:14px;font-size:12px;font-family:'Liberation Sans',sans-serif;color:#000000;white-space:pre;transform:scaleX(0.89);transform-origin:0 0;">Currency</div>
<div style="left:2px;top:70px;line-height:14px;height:14px;font-size:12px;font-family:'Liberation Sans',sans-serif;color:#000000;white-space:pre;transform:scaleX(0.89);transform-origin:0 0;">Date</div>
<div style="left:2px;top:84px;line-height:14px;height:14px;font-size:12px;font-family:'Liberation Sans',sans-serif;color:#000000;white-space:pre;transform:scaleX(0.89);transform-origin:0 0;">Time</div>
<div style="left:2px;top:98px;line-height:14px;height:14px;font-size:12px;font-family:'Liberation Sans',sans-serif;color:#000000;white-space:pre;transform:scaleX(0.89);transform-origin:0 0;">Scientific</div>
</div>
<div style="left:482px;top:194px;width:16px;height:113px;background:#000000;"></div>
<div style="left:482px;top:194px;width:16px;height:16px;background:#999999;"></div>
<div style="left:482px;top:194px;width:15px;height:1px;background:#ffffff;"></div>
<div style="left:482px;top:194px;width:1px;height:15px;background:#ffffff;"></div>
<div style="left:482px;top:209px;width:16px;height:1px;background:#000000;"></div>
<div style="left:497px;top:194px;width:1px;height:16px;background:#000000;"></div>
<div style="left:483px;top:208px;width:14px;height:1px;background:#666666;"></div>
<div style="left:496px;top:195px;width:1px;height:14px;background:#666666;"></div>
<div style="left:489px;top:200px;width:1px;height:1px;background:#666666;"></div>
<div style="left:488px;top:201px;width:3px;height:1px;background:#666666;"></div>
<div style="left:487px;top:202px;width:5px;height:1px;background:#666666;"></div>
<div style="left:486px;top:203px;width:7px;height:1px;background:#666666;"></div>
<div style="left:482px;top:291px;width:16px;height:16px;background:#999999;"></div>
<div style="left:482px;top:291px;width:15px;height:1px;background:#ffffff;"></div>
<div style="left:482px;top:291px;width:1px;height:15px;background:#ffffff;"></div>
<div style="left:482px;top:306px;width:16px;height:1px;background:#000000;"></div>
<div style="left:497px;top:291px;width:1px;height:16px;background:#000000;"></div>
<div style="left:483px;top:305px;width:14px;height:1px;background:#666666;"></div>
<div style="left:496px;top:292px;width:1px;height:14px;background:#666666;"></div>
<div style="left:486px;top:297px;width:7px;height:1px;background:#000000;"></div>
<div style="left:487px;top:298px;width:5px;height:1px;background:#000000;"></div>
<div style="left:488px;top:299px;width:3px;height:1px;background:#000000;"></div>
<div style="left:489px;top:300px;width:1px;height:1px;background:#000000;"></div>
<div style="left:482px;top:210px;width:16px;height:57px;background:#999999;"></div>
<div style="left:482px;top:210px;width:15px;height:1px;background:#ffffff;"></div>
<div style="left:482px;top:210px;width:1px;height:56px;background:#ffffff;"></div>
<div style="left:482px;top:266px;width:16px;height:1px;background:#000000;"></div>
<div style="left:497px;top:210px;width:1px;height:57px;background:#000000;"></div>
<div style="left:483px;top:265px;width:14px;height:1px;background:#666666;"></div>
<div style="left:496px;top:211px;width:1px;height:55px;background:#666666;"></div>
<div style="left:511px;top:192px;width:176px;height:117px;background:#ffffff;"></div>
<div style="left:511px;top:192px;width:175px;height:1px;background:#666666;"></div>
<div style="left:511px;top:192px;width:1px;height:116px;background:#666666;"></div>
<div style="left:511px;top:308px;width:176px;height:1px;background:#ffffff;"></div>
<div style="left:686px;top:192px;width:1px;height:117px;background:#ffffff;"></div>
<div style="left:512px;top:193px;width:173px;height:1px;background:#000000;"></div>
<div style="left:512px;top:193px;width:1px;height:114px;background:#000000;"></div>
<div style="left:512px;top:307px;width:174px;height:1px;background:#999999;"></div>
<div style="left:685px;top:193px;width:1px;height:115px;background:#999999;"></div>
<div style="left:513px;top:194px;width:156px;height:113px;overflow:hidden">
<div style="left:0px;top:0px;width:156px;height:13px;background:#000066;"></div>
<div style="left:3px;top:0px;line-height:14px;height:14px;font-size:12px;font-family:'Liberation Sans',sans-serif;color:#ffffff;white-space:pre;transform:scaleX(0.89);transform-origin:0 0;">General</div>
<div style="left:3px;top:13px;line-height:14px;height:14px;font-size:12px;font-family:'Liberation Sans',sans-serif;color:#000000;white-space:pre;transform:scaleX(0.89);transform-origin:0 0;">-1234</div>
<div style="left:3px;top:26px;line-height:14px;height:14px;font-size:12px;font-family:'Liberation Sans',sans-serif;color:#000000;white-space:pre;transform:scaleX(0.89);transform-origin:0 0;">-1234.12</div>
<div style="left:3px;top:39px;line-height:14px;height:14px;font-size:12px;font-family:'Liberation Sans',sans-serif;color:#000000;white-space:pre;transform:scaleX(0.89);transform-origin:0 0;">-1,234</div>
<div style="left:3px;top:52px;line-height:14px;height:14px;font-size:12px;font-family:'Liberation Sans',sans-serif;color:#000000;white-space:pre;transform:scaleX(0.89);transform-origin:0 0;">-1,234.12</div>
<div style="left:3px;top:65px;line-height:14px;height:14px;font-size:12px;font-family:'Liberation Sans',sans-serif;color:#000000;white-space:pre;transform:scaleX(0.89);transform-origin:0 0;">-1,234.12</div>
<div style="left:3px;top:78px;line-height:14px;height:14px;font-size:12px;font-family:'Liberation Sans',sans-serif;color:#000000;white-space:pre;transform:scaleX(0.89);transform-origin:0 0;">($1,234)</div>
<div style="left:3px;top:91px;line-height:14px;height:14px;font-size:12px;font-family:'Liberation Sans',sans-serif;color:#ff0000;white-space:pre;transform:scaleX(0.89);transform-origin:0 0;">($1,234)</div>
<div style="left:3px;top:104px;line-height:14px;height:14px;font-size:12px;font-family:'Liberation Sans',sans-serif;color:#000000;white-space:pre;transform:scaleX(0.89);transform-origin:0 0;">($1,234.12)</div>
</div>
<div style="left:669px;top:194px;width:16px;height:113px;background:#000000;"></div>
<div style="left:669px;top:194px;width:16px;height:16px;background:#999999;"></div>
<div style="left:669px;top:194px;width:15px;height:1px;background:#ffffff;"></div>
<div style="left:669px;top:194px;width:1px;height:15px;background:#ffffff;"></div>
<div style="left:669px;top:209px;width:16px;height:1px;background:#000000;"></div>
<div style="left:684px;top:194px;width:1px;height:16px;background:#000000;"></div>
<div style="left:670px;top:208px;width:14px;height:1px;background:#666666;"></div>
<div style="left:683px;top:195px;width:1px;height:14px;background:#666666;"></div>
<div style="left:676px;top:200px;width:1px;height:1px;background:#666666;"></div>
<div style="left:675px;top:201px;width:3px;height:1px;background:#666666;"></div>
<div style="left:674px;top:202px;width:5px;height:1px;background:#666666;"></div>
<div style="left:673px;top:203px;width:7px;height:1px;background:#666666;"></div>
<div style="left:669px;top:291px;width:16px;height:16px;background:#999999;"></div>
<div style="left:669px;top:291px;width:15px;height:1px;background:#ffffff;"></div>
<div style="left:669px;top:291px;width:1px;height:15px;background:#ffffff;"></div>
<div style="left:669px;top:306px;width:16px;height:1px;background:#000000;"></div>
<div style="left:684px;top:291px;width:1px;height:16px;background:#000000;"></div>
<div style="left:670px;top:305px;width:14px;height:1px;background:#666666;"></div>
<div style="left:683px;top:292px;width:1px;height:14px;background:#666666;"></div>
<div style="left:673px;top:297px;width:7px;height:1px;background:#000000;"></div>
<div style="left:674px;top:298px;width:5px;height:1px;background:#000000;"></div>
<div style="left:675px;top:299px;width:3px;height:1px;background:#000000;"></div>
<div style="left:676px;top:300px;width:1px;height:1px;background:#000000;"></div>
<div style="left:669px;top:210px;width:16px;height:46px;background:#999999;"></div>
<div style="left:669px;top:210px;width:15px;height:1px;background:#ffffff;"></div>
<div style="left:669px;top:210px;width:1px;height:45px;background:#ffffff;"></div>
<div style="left:669px;top:255px;width:16px;height:1px;background:#000000;"></div>
<div style="left:684px;top:210px;width:1px;height:46px;background:#000000;"></div>
<div style="left:670px;top:254px;width:14px;height:1px;background:#666666;"></div>
<div style="left:683px;top:211px;width:1px;height:44px;background:#666666;"></div>
<div style="left:698px;top:192px;width:148px;height:22px;background:#ffffff;"></div>
<div style="left:698px;top:192px;width:147px;height:1px;background:#666666;"></div>
<div style="left:698px;top:192px;width:1px;height:21px;background:#666666;"></div>
<div style="left:698px;top:213px;width:148px;height:1px;background:#ffffff;"></div>
<div style="left:845px;top:192px;width:1px;height:22px;background:#ffffff;"></div>
<div style="left:699px;top:193px;width:145px;height:1px;background:#000000;"></div>
<div style="left:699px;top:193px;width:1px;height:19px;background:#000000;"></div>
<div style="left:699px;top:212px;width:146px;height:1px;background:#999999;"></div>
<div style="left:844px;top:193px;width:1px;height:20px;background:#999999;"></div>
<div style="left:702px;top:196px;line-height:14px;height:14px;font-size:12px;font-family:'Liberation Sans',sans-serif;color:#000000;white-space:pre;transform:scaleX(0.850);transform-origin:0 0;">System</div>
<div style="left:828px;top:195px;width:16px;height:17px;background:#999999;"></div>
<div style="left:828px;top:195px;width:15px;height:1px;background:#ffffff;"></div>
<div style="left:828px;top:195px;width:1px;height:16px;background:#ffffff;"></div>
<div style="left:828px;top:211px;width:16px;height:1px;background:#000000;"></div>
<div style="left:843px;top:195px;width:1px;height:17px;background:#000000;"></div>
<div style="left:829px;top:210px;width:14px;height:1px;background:#666666;"></div>
<div style="left:842px;top:196px;width:1px;height:15px;background:#666666;"></div>
<div style="left:832px;top:202px;width:7px;height:1px;background:#000000;"></div>
<div style="left:833px;top:203px;width:5px;height:1px;background:#000000;"></div>
<div style="left:834px;top:204px;width:3px;height:1px;background:#000000;"></div>
<div style="left:835px;top:205px;width:1px;height:1px;background:#000000;"></div>
<div style="left:698px;top:239px;width:148px;height:29px;background:#ffffff;"></div>
<div style="left:698px;top:239px;width:147px;height:1px;background:#666666;"></div>
<div style="left:698px;top:239px;width:1px;height:28px;background:#666666;"></div>
<div style="left:698px;top:267px;width:148px;height:1px;background:#ffffff;"></div>
<div style="left:845px;top:239px;width:1px;height:29px;background:#ffffff;"></div>
<div style="left:699px;top:240px;width:145px;height:1px;background:#000000;"></div>
<div style="left:699px;top:240px;width:1px;height:26px;background:#000000;"></div>
<div style="left:699px;top:266px;width:146px;height:1px;background:#999999;"></div>
<div style="left:844px;top:240px;width:1px;height:27px;background:#999999;"></div>
<div style="left:752px;top:247px;line-height:14px;height:14px;font-size:12px;font-family:'Liberation Sans',sans-serif;color:#000000;white-space:pre;transform:scaleX(0.899);transform-origin:0 0;">1234.57</div>
<div style="left:363px;top:323px;width:483px;height:1px;background:#666666;"></div>
<div style="left:363px;top:323px;width:1px;height:65px;background:#666666;"></div>
<div style="left:363px;top:387px;width:483px;height:1px;background:#666666;"></div>
<div style="left:845px;top:323px;width:1px;height:65px;background:#666666;"></div>
<div style="left:364px;top:324px;width:481px;height:1px;background:#ffffff;"></div>
<div style="left:364px;top:324px;width:1px;height:63px;background:#ffffff;"></div>
<div style="left:363px;top:388px;width:484px;height:1px;background:#ffffff;"></div>
<div style="left:846px;top:323px;width:1px;height:66px;background:#ffffff;"></div>
<div style="left:373px;top:320px;width:41px;height:8px;background:#999999;"></div>
<div style="left:376px;top:317px;line-height:14px;height:14px;font-size:12px;font-family:'Liberation Sans',sans-serif;color:#000000;white-space:pre;transform:scaleX(0.871);transform-origin:0 0;">Options</div>
<div style="left:375px;top:338px;line-height:14px;height:14px;font-size:12px;font-family:'Liberation Sans',sans-serif;color:#000000;white-space:pre;transform:scaleX(0.873);transform-origin:0 0;"><u>D</u>ecimal places</div>
<div style="left:375px;top:364px;line-height:14px;height:14px;font-size:12px;font-family:'Liberation Sans',sans-serif;color:#000000;white-space:pre;transform:scaleX(0.865);transform-origin:0 0;">Leading <u>z</u>eroes</div>
<div style="left:515px;top:335px;width:47px;height:20px;background:#ffffff;"></div>
<div style="left:515px;top:335px;width:46px;height:1px;background:#666666;"></div>
<div style="left:515px;top:335px;width:1px;height:19px;background:#666666;"></div>
<div style="left:515px;top:354px;width:47px;height:1px;background:#ffffff;"></div>
<div style="left:561px;top:335px;width:1px;height:20px;background:#ffffff;"></div>
<div style="left:516px;top:336px;width:44px;height:1px;background:#000000;"></div>
<div style="left:516px;top:336px;width:1px;height:17px;background:#000000;"></div>
<div style="left:516px;top:353px;width:45px;height:1px;background:#999999;"></div>
<div style="left:560px;top:336px;width:1px;height:18px;background:#999999;"></div>
<div style="left:518px;top:338px;line-height:14px;height:14px;font-size:12px;font-family:'Liberation Sans',sans-serif;color:#000000;white-space:pre;transform:scaleX(0.89);transform-origin:0 0;">0</div>
<div style="left:545px;top:337px;width:15px;height:8px;background:#999999;"></div>
<div style="left:545px;top:337px;width:14px;height:1px;background:#ffffff;"></div>
<div style="left:545px;top:337px;width:1px;height:7px;background:#ffffff;"></div>
<div style="left:545px;top:344px;width:15px;height:1px;background:#000000;"></div>
<div style="left:559px;top:337px;width:1px;height:8px;background:#000000;"></div>
<div style="left:545px;top:345px;width:15px;height:8px;background:#999999;"></div>
<div style="left:545px;top:345px;width:14px;height:1px;background:#ffffff;"></div>
<div style="left:545px;top:345px;width:1px;height:7px;background:#ffffff;"></div>
<div style="left:545px;top:352px;width:15px;height:1px;background:#000000;"></div>
<div style="left:559px;top:345px;width:1px;height:8px;background:#000000;"></div>
<div style="left:551px;top:340px;width:3px;height:1px;background:#000000;"></div>
<div style="left:552px;top:339px;width:1px;height:1px;background:#000000;"></div>
<div style="left:551px;top:348px;width:3px;height:1px;background:#000000;"></div>
<div style="left:552px;top:349px;width:1px;height:1px;background:#000000;"></div>
<div style="left:515px;top:361px;width:47px;height:20px;background:#ffffff;"></div>
<div style="left:515px;top:361px;width:46px;height:1px;background:#666666;"></div>
<div style="left:515px;top:361px;width:1px;height:19px;background:#666666;"></div>
<div style="left:515px;top:380px;width:47px;height:1px;background:#ffffff;"></div>
<div style="left:561px;top:361px;width:1px;height:20px;background:#ffffff;"></div>
<div style="left:516px;top:362px;width:44px;height:1px;background:#000000;"></div>
<div style="left:516px;top:362px;width:1px;height:17px;background:#000000;"></div>
<div style="left:516px;top:379px;width:45px;height:1px;background:#999999;"></div>
<div style="left:560px;top:362px;width:1px;height:18px;background:#999999;"></div>
<div style="left:518px;top:364px;line-height:14px;height:14px;font-size:12px;font-family:'Liberation Sans',sans-serif;color:#000000;white-space:pre;transform:scaleX(0.89);transform-origin:0 0;">1</div>
<div style="left:545px;top:363px;width:15px;height:8px;background:#999999;"></div>
<div style="left:545px;top:363px;width:14px;height:1px;background:#ffffff;"></div>
<div style="left:545px;top:363px;width:1px;height:7px;background:#ffffff;"></div>
<div style="left:545px;top:370px;width:15px;height:1px;background:#000000;"></div>
<div style="left:559px;top:363px;width:1px;height:8px;background:#000000;"></div>
<div style="left:545px;top:371px;width:15px;height:8px;background:#999999;"></div>
<div style="left:545px;top:371px;width:14px;height:1px;background:#ffffff;"></div>
<div style="left:545px;top:371px;width:1px;height:7px;background:#ffffff;"></div>
<div style="left:545px;top:378px;width:15px;height:1px;background:#000000;"></div>
<div style="left:559px;top:371px;width:1px;height:8px;background:#000000;"></div>
<div style="left:551px;top:366px;width:3px;height:1px;background:#000000;"></div>
<div style="left:552px;top:365px;width:1px;height:1px;background:#000000;"></div>
<div style="left:551px;top:374px;width:3px;height:1px;background:#000000;"></div>
<div style="left:552px;top:375px;width:1px;height:1px;background:#000000;"></div>
<div style="left:610px;top:337px;width:13px;height:13px;background:#ffffff;"></div>
<div style="left:610px;top:337px;width:12px;height:1px;background:#666666;"></div>
<div style="left:610px;top:337px;width:1px;height:12px;background:#666666;"></div>
<div style="left:610px;top:349px;width:13px;height:1px;background:#ffffff;"></div>
<div style="left:622px;top:337px;width:1px;height:13px;background:#ffffff;"></div>
<div style="left:611px;top:338px;width:10px;height:1px;background:#000000;"></div>
<div style="left:611px;top:338px;width:1px;height:10px;background:#000000;"></div>
<div style="left:611px;top:348px;width:11px;height:1px;background:#999999;"></div>
<div style="left:621px;top:338px;width:1px;height:11px;background:#999999;"></div>
<div style="left:610px;top:363px;width:13px;height:13px;background:#ffffff;"></div>
<div style="left:610px;top:363px;width:12px;height:1px;background:#666666;"></div>
<div style="left:610px;top:363px;width:1px;height:12px;background:#666666;"></div>
<div style="left:610px;top:375px;width:13px;height:1px;background:#ffffff;"></div>
<div style="left:622px;top:363px;width:1px;height:13px;background:#ffffff;"></div>
<div style="left:611px;top:364px;width:10px;height:1px;background:#000000;"></div>
<div style="left:611px;top:364px;width:1px;height:10px;background:#000000;"></div>
<div style="left:611px;top:374px;width:11px;height:1px;background:#999999;"></div>
<div style="left:621px;top:364px;width:1px;height:11px;background:#999999;"></div>
<div style="left:627px;top:337px;line-height:14px;height:14px;font-size:12px;font-family:'Liberation Sans',sans-serif;color:#000000;white-space:pre;transform:scaleX(0.889);transform-origin:0 0;"><u>N</u>egative numbers red</div>
<div style="left:627px;top:363px;line-height:14px;height:14px;font-size:12px;font-family:'Liberation Sans',sans-serif;color:#000000;white-space:pre;transform:scaleX(0.891);transform-origin:0 0;"><u>T</u>housands separator</div>
<div style="left:364px;top:399px;line-height:14px;height:14px;font-size:12px;font-family:'Liberation Sans',sans-serif;color:#000000;white-space:pre;transform:scaleX(0.861);transform-origin:0 0;"><u>F</u>ormat code</div>
<div style="left:363px;top:416px;width:388px;height:20px;background:#ffffff;"></div>
<div style="left:363px;top:416px;width:387px;height:1px;background:#666666;"></div>
<div style="left:363px;top:416px;width:1px;height:19px;background:#666666;"></div>
<div style="left:363px;top:435px;width:388px;height:1px;background:#ffffff;"></div>
<div style="left:750px;top:416px;width:1px;height:20px;background:#ffffff;"></div>
<div style="left:364px;top:417px;width:385px;height:1px;background:#000000;"></div>
<div style="left:364px;top:417px;width:1px;height:17px;background:#000000;"></div>
<div style="left:364px;top:434px;width:386px;height:1px;background:#999999;"></div>
<div style="left:749px;top:417px;width:1px;height:18px;background:#999999;"></div>
<div style="left:366px;top:419px;line-height:14px;height:14px;font-size:12px;font-family:'Liberation Sans',sans-serif;color:#000000;white-space:pre;transform:scaleX(0.867);transform-origin:0 0;">General</div>
<div style="left:759px;top:416px;width:23px;height:20px;background:#999999;"></div>
<div style="left:759px;top:416px;width:22px;height:1px;background:#ffffff;"></div>
<div style="left:759px;top:416px;width:1px;height:19px;background:#ffffff;"></div>
<div style="left:759px;top:435px;width:23px;height:1px;background:#000000;"></div>
<div style="left:781px;top:416px;width:1px;height:20px;background:#000000;"></div>
<div style="left:760px;top:434px;width:21px;height:1px;background:#666666;"></div>
<div style="left:780px;top:417px;width:1px;height:18px;background:#666666;"></div>
<div style="left:792px;top:416px;width:23px;height:20px;background:#999999;"></div>
<div style="left:792px;top:416px;width:22px;height:1px;background:#ffffff;"></div>
<div style="left:792px;top:416px;width:1px;height:19px;background:#ffffff;"></div>
<div style="left:792px;top:435px;width:23px;height:1px;background:#000000;"></div>
<div style="left:814px;top:416px;width:1px;height:20px;background:#000000;"></div>
<div style="left:793px;top:434px;width:21px;height:1px;background:#666666;"></div>
<div style="left:813px;top:417px;width:1px;height:18px;background:#666666;"></div>
<div style="left:823px;top:416px;width:23px;height:20px;background:#999999;"></div>
<div style="left:823px;top:416px;width:22px;height:1px;background:#ffffff;"></div>
<div style="left:823px;top:416px;width:1px;height:19px;background:#ffffff;"></div>
<div style="left:823px;top:435px;width:23px;height:1px;background:#000000;"></div>
<div style="left:845px;top:416px;width:1px;height:20px;background:#000000;"></div>
<div style="left:824px;top:434px;width:21px;height:1px;background:#666666;"></div>
<div style="left:844px;top:417px;width:1px;height:18px;background:#666666;"></div>
<div style="left:566px;top:480px;width:70px;height:23px;background:#999999;"></div>
<div style="left:566px;top:480px;width:69px;height:1px;background:#ffffff;"></div>
<div style="left:566px;top:480px;width:1px;height:22px;background:#ffffff;"></div>
<div style="left:566px;top:502px;width:70px;height:1px;background:#000000;"></div>
<div style="left:635px;top:480px;width:1px;height:23px;background:#000000;"></div>
<div style="left:567px;top:501px;width:68px;height:1px;background:#666666;"></div>
<div style="left:634px;top:481px;width:1px;height:21px;background:#666666;"></div>
<div style="left:641px;top:480px;width:70px;height:23px;background:#999999;"></div>
<div style="left:641px;top:480px;width:69px;height:1px;background:#ffffff;"></div>
<div style="left:641px;top:480px;width:1px;height:22px;background:#ffffff;"></div>
<div style="left:641px;top:502px;width:70px;height:1px;background:#000000;"></div>
<div style="left:710px;top:480px;width:1px;height:23px;background:#000000;"></div>
<div style="left:642px;top:501px;width:68px;height:1px;background:#666666;"></div>
<div style="left:709px;top:481px;width:1px;height:21px;background:#666666;"></div>
<div style="left:716px;top:480px;width:70px;height:23px;background:#999999;"></div>
<div style="left:716px;top:480px;width:69px;height:1px;background:#ffffff;"></div>
<div style="left:716px;top:480px;width:1px;height:22px;background:#ffffff;"></div>
<div style="left:716px;top:502px;width:70px;height:1px;background:#000000;"></div>
<div style="left:785px;top:480px;width:1px;height:23px;background:#000000;"></div>
<div style="left:717px;top:501px;width:68px;height:1px;background:#666666;"></div>
<div style="left:784px;top:481px;width:1px;height:21px;background:#666666;"></div>
<div style="left:791px;top:480px;width:70px;height:23px;background:#999999;"></div>
<div style="left:791px;top:480px;width:69px;height:1px;background:#ffffff;"></div>
<div style="left:791px;top:480px;width:1px;height:22px;background:#ffffff;"></div>
<div style="left:791px;top:502px;width:70px;height:1px;background:#000000;"></div>
<div style="left:860px;top:480px;width:1px;height:23px;background:#000000;"></div>
<div style="left:792px;top:501px;width:68px;height:1px;background:#666666;"></div>
<div style="left:859px;top:481px;width:1px;height:21px;background:#666666;"></div>
<div style="left:593px;top:484px;line-height:14px;height:14px;font-size:12px;font-family:'Liberation Sans',sans-serif;color:#000000;white-space:pre;transform:scaleX(0.865);transform-origin:0 0;">OK</div>
<div style="left:659px;top:484px;line-height:14px;height:14px;font-size:12px;font-family:'Liberation Sans',sans-serif;color:#000000;white-space:pre;transform:scaleX(0.910);transform-origin:0 0;">Cancel</div>
<div style="left:739px;top:484px;line-height:14px;height:14px;font-size:12px;font-family:'Liberation Sans',sans-serif;color:#000000;white-space:pre;transform:scaleX(0.932);transform-origin:0 0;"><u>H</u>elp</div>
<div style="left:811px;top:484px;line-height:14px;height:14px;font-size:12px;font-family:'Liberation Sans',sans-serif;color:#000000;white-space:pre;transform:scaleX(0.893);transform-origin:0 0;"><u>R</u>eset</div>
<div style="left:341px;top:46px;width:1px;height:22px;background:#666666;"></div>
<div style="left:342px;top:46px;width:1px;height:22px;background:#ffffff;"></div>
<div style="left:372px;top:46px;width:1px;height:22px;background:#666666;"></div>
<div style="left:373px;top:46px;width:1px;height:22px;background:#ffffff;"></div>
<div style="left:449px;top:46px;width:1px;height:22px;background:#666666;"></div>
<div style="left:450px;top:46px;width:1px;height:22px;background:#ffffff;"></div>
<div style="left:526px;top:46px;width:1px;height:22px;background:#666666;"></div>
<div style="left:527px;top:46px;width:1px;height:22px;background:#ffffff;"></div>
<div style="left:580px;top:46px;width:1px;height:22px;background:#666666;"></div>
<div style="left:581px;top:46px;width:1px;height:22px;background:#ffffff;"></div>
<div style="left:657px;top:46px;width:1px;height:22px;background:#666666;"></div>
<div style="left:658px;top:46px;width:1px;height:22px;background:#ffffff;"></div>
<div style="left:283px;top:74px;width:1px;height:22px;background:#666666;"></div>
<div style="left:284px;top:74px;width:1px;height:22px;background:#ffffff;"></div>
<div style="left:383px;top:74px;width:1px;height:22px;background:#666666;"></div>
<div style="left:384px;top:74px;width:1px;height:22px;background:#ffffff;"></div>
<div style="left:506px;top:74px;width:1px;height:22px;background:#666666;"></div>
<div style="left:507px;top:74px;width:1px;height:22px;background:#ffffff;"></div>
<div style="left:560px;top:74px;width:1px;height:22px;background:#666666;"></div>
<div style="left:561px;top:74px;width:1px;height:22px;background:#ffffff;"></div>
<div style="left:614px;top:74px;width:1px;height:22px;background:#666666;"></div>
<div style="left:615px;top:74px;width:1px;height:22px;background:#ffffff;"></div>
<div style="left:347px;top:46px;width:23px;height:22px;background:#000000;"></div>
<div style="left:347px;top:46px;width:23px;height:1px;background:#666666;"></div>
<div style="left:347px;top:46px;width:1px;height:22px;background:#666666;"></div>
<div style="left:347px;top:67px;width:23px;height:1px;background:#ffffff;"></div>
<div style="left:369px;top:46px;width:1px;height:22px;background:#ffffff;"></div>
<div style="left:609px;top:46px;width:23px;height:22px;background:#000000;"></div>
<div style="left:609px;top:46px;width:23px;height:1px;background:#666666;"></div>
<div style="left:609px;top:46px;width:1px;height:22px;background:#666666;"></div>
<div style="left:609px;top:67px;width:23px;height:1px;background:#ffffff;"></div>
<div style="left:631px;top:46px;width:1px;height:22px;background:#ffffff;"></div>
<div style="left:666px;top:74px;width:23px;height:22px;background:#000000;"></div>
<div style="left:666px;top:74px;width:23px;height:1px;background:#666666;"></div>
<div style="left:666px;top:74px;width:1px;height:22px;background:#666666;"></div>
<div style="left:666px;top:95px;width:23px;height:1px;background:#ffffff;"></div>
<div style="left:688px;top:74px;width:1px;height:22px;background:#ffffff;"></div>
<div style="left:711px;top:49px;width:231px;height:21px;background:#999999;"></div>
<div style="left:711px;top:49px;width:230px;height:1px;background:#ffffff;"></div>
<div style="left:711px;top:49px;width:1px;height:20px;background:#ffffff;"></div>
<div style="left:711px;top:69px;width:231px;height:1px;background:#000000;"></div>
<div style="left:941px;top:49px;width:1px;height:21px;background:#000000;"></div>
<div style="left:712px;top:68px;width:229px;height:1px;background:#666666;"></div>
<div style="left:940px;top:50px;width:1px;height:19px;background:#666666;"></div>
<div style="left:713px;top:51px;width:226px;height:16px;background:#000066;"></div>
<div style="left:828px;top:51px;width:111px;height:16px;background:linear-gradient(90deg,#000066 0%,#99cc66 2%,#99cc77 12%,#667744 25%,#552211 33%,#660000 40%,#660022 48%,#660066 58%,#6a0099 72%,#8a0088 100%);"></div>
<div style="left:716px;top:52px;line-height:14px;height:14px;font-size:12px;font-family:'Liberation Sans',sans-serif;color:#ffffff;white-space:pre;transform:scaleX(0.847);transform-origin:0 0;">Cell Styles</div>
<div style="left:909px;top:53px;width:12px;height:12px;background:#999999;"></div>
<div style="left:909px;top:53px;width:11px;height:1px;background:#ffffff;"></div>
<div style="left:909px;top:53px;width:1px;height:11px;background:#ffffff;"></div>
<div style="left:909px;top:64px;width:12px;height:1px;background:#000000;"></div>
<div style="left:920px;top:53px;width:1px;height:12px;background:#000000;"></div>
<div style="left:910px;top:63px;width:10px;height:1px;background:#666666;"></div>
<div style="left:919px;top:54px;width:1px;height:10px;background:#666666;"></div>
<div style="left:911px;top:55px;width:7px;height:7px;border:1px solid #000;border-top:2px solid #000;"></div>
<div style="left:924px;top:53px;width:12px;height:12px;background:#999999;"></div>
<div style="left:924px;top:53px;width:11px;height:1px;background:#ffffff;"></div>
<div style="left:924px;top:53px;width:1px;height:11px;background:#ffffff;"></div>
<div style="left:924px;top:64px;width:12px;height:1px;background:#000000;"></div>
<div style="left:935px;top:53px;width:1px;height:12px;background:#000000;"></div>
<div style="left:925px;top:63px;width:10px;height:1px;background:#666666;"></div>
<div style="left:934px;top:54px;width:1px;height:10px;background:#666666;"></div>
<svg style="left:927px;top:56px" width="6" height="6" viewBox="0 0 6 6" shape-rendering="crispEdges"><path d="M0.5,0.5 L5.5,5.5 M5.5,0.5 L0.5,5.5" stroke="#000" stroke-width="1.2" fill="none" shape-rendering="auto"/></svg>
<div style="left:8px;top:244px;width:24px;height:1px;background:#666666;"></div>
<div style="left:8px;top:245px;width:24px;height:1px;background:#ffffff;"></div>
<div style="left:8px;top:362px;width:24px;height:1px;background:#666666;"></div>
<div style="left:8px;top:363px;width:24px;height:1px;background:#ffffff;"></div>
<div style="left:8px;top:436px;width:24px;height:1px;background:#666666;"></div>
<div style="left:8px;top:437px;width:24px;height:1px;background:#ffffff;"></div>
<svg style="left:318px;top:48px" width="17" height="17" viewBox="0 0 17 17" shape-rendering="crispEdges"><polygon points="5.5,1.5 11.5,1.5 15.5,5.5 15.5,11.5 11.5,15.5 5.5,15.5 1.5,11.5 1.5,5.5" fill="#999" stroke="#fff" stroke-width="1" shape-rendering="auto"/><polygon points="6,3 11,3 14,6 14,11 11,14 6,14 3,11 3,6" fill="#666" shape-rendering="auto"/><path d="M6,16.5 L12,16.5 L16.5,12 L16.5,6" stroke="#fff" fill="none" shape-rendering="auto"/></svg>
<svg style="left:352px;top:53px" width="16" height="9" viewBox="0 0 16 9" shape-rendering="crispEdges"><rect x="0" y="0" width="8" height="1" fill="#ffffff"/><rect x="15" y="0" width="1" height="1" fill="#ffffff"/><rect x="0" y="1" width="1" height="1" fill="#ffffff"/><rect x="1" y="1" width="2" height="1" fill="#000066"/><rect x="3" y="1" width="1" height="1" fill="#ffffff"/><rect x="4" y="1" width="2" height="1" fill="#000000"/><rect x="6" y="1" width="2" height="1" fill="#ffffff"/><rect x="14" y="1" width="1" height="1" fill="#ffffff"/><rect x="15" y="1" width="1" height="1" fill="#000066"/><rect x="0" y="2" width="1" height="1" fill="#ffffff"/><rect x="1" y="2" width="2" height="1" fill="#000066"/><rect x="3" y="2" width="5" height="1" fill="#ffffff"/><rect x="13" y="2" width="1" height="1" fill="#ffffff"/><rect x="14" y="2" width="2" height="1" fill="#000066"/><rect x="0" y="3" width="1" height="1" fill="#ffffff"/><rect x="1" y="3" width="2" height="1" fill="#000066"/><rect x="3" y="3" width="1" height="1" fill="#ffffff"/><rect x="4" y="3" width="2" height="1" fill="#000000"/><rect x="6" y="3" width="2" height="1" fill="#ffffff"/><rect x="12" y="3" width="1" height="1" fill="#ffffff"/><rect x="13" y="3" width="2" height="1" fill="#000066"/><rect x="0" y="4" width="8" height="1" fill="#ffffff"/><rect x="11" y="4" width="1" height="1" fill="#ffffff"/><rect x="12" y="4" width="2" height="1" fill="#000066"/><rect x="0" y="5" width="1" height="1" fill="#ffffff"/><rect x="1" y="5" width="2" height="1" fill="#000000"/><rect x="3" y="5" width="1" height="1" fill="#ffffff"/><rect x="4" y="5" width="2" height="1" fill="#000000"/><rect x="6" y="5" width="2" height="1" fill="#ffffff"/><rect x="10" y="5" width="1" height="1" fill="#ffffff"/><rect x="11" y="5" width="2" height="1" fill="#000066"/><rect x="0" y="6" width="8" height="1" fill="#ffffff"/><rect x="9" y="6" width="1" height="1" fill="#ffffff"/><rect x="10" y="6" width="2" height="1" fill="#000066"/><rect x="0" y="7" width="1" height="1" fill="#ffffff"/><rect x="1" y="7" width="2" height="1" fill="#000000"/><rect x="3" y="7" width="1" height="1" fill="#ffffff"/><rect x="4" y="7" width="2" height="1" fill="#000000"/><rect x="6" y="7" width="2" height="1" fill="#ffffff"/><rect x="8" y="7" width="1" height="1" fill="#0000ff"/><rect x="9" y="7" width="2" height="1" fill="#000066"/><rect x="0" y="8" width="7" height="1" fill="#ffffff"/><rect x="7" y="8" width="2" height="1" fill="#0000ff"/></svg>
<svg style="left:382px;top:50px" width="15" height="12" viewBox="0 0 15 12" shape-rendering="crispEdges"><rect x="10" y="0" width="3" height="1" fill="#000000"/><rect x="9" y="1" width="1" height="1" fill="#000000"/><rect x="13" y="1" width="1" height="1" fill="#000000"/><rect x="1" y="2" width="3" height="1" fill="#000000"/><rect x="10" y="2" width="1" height="1" fill="#000000"/><rect x="13" y="2" width="2" height="1" fill="#000000"/><rect x="0" y="3" width="1" height="1" fill="#000000"/><rect x="1" y="3" width="1" height="1" fill="#ffff00"/><rect x="2" y="3" width="1" height="1" fill="#ffff99"/><rect x="3" y="3" width="1" height="1" fill="#ffff00"/><rect x="4" y="3" width="1" height="1" fill="#000000"/><rect x="11" y="3" width="4" height="1" fill="#000000"/><rect x="0" y="4" width="1" height="1" fill="#000000"/><rect x="1" y="4" width="1" height="1" fill="#ffff99"/><rect x="2" y="4" width="1" height="1" fill="#ffff00"/><rect x="3" y="4" width="1" height="1" fill="#ffff99"/><rect x="4" y="4" width="1" height="1" fill="#ffff00"/><rect x="5" y="4" width="5" height="1" fill="#000000"/><rect x="13" y="4" width="1" height="1" fill="#000000"/><rect x="0" y="5" width="1" height="1" fill="#000000"/><rect x="1" y="5" width="1" height="1" fill="#ffff00"/><rect x="2" y="5" width="1" height="1" fill="#ffff99"/><rect x="3" y="5" width="1" height="1" fill="#ffff00"/><rect x="4" y="5" width="1" height="1" fill="#ffff99"/><rect x="5" y="5" width="1" height="1" fill="#ffff00"/><rect x="6" y="5" width="1" height="1" fill="#ffff99"/><rect x="7" y="5" width="1" height="1" fill="#ffff00"/><rect x="8" y="5" width="1" height="1" fill="#ffff99"/><rect x="9" y="5" width="1" height="1" fill="#000000"/><rect x="0" y="6" width="1" height="1" fill="#000000"/><rect x="1" y="6" width="1" height="1" fill="#ffff99"/><rect x="2" y="6" width="1" height="1" fill="#ffff00"/><rect x="3" y="6" width="1" height="1" fill="#ffff99"/><rect x="4" y="6" width="10" height="1" fill="#000000"/><rect x="0" y="7" width="1" height="1" fill="#000000"/><rect x="1" y="7" width="1" height="1" fill="#ffff00"/><rect x="2" y="7" width="1" height="1" fill="#ffff99"/><rect x="3" y="7" width="1" height="1" fill="#000000"/><rect x="4" y="7" width="9" height="1" fill="#808000"/><rect x="13" y="7" width="1" height="1" fill="#000000"/><rect x="0" y="8" width="1" height="1" fill="#000000"/><rect x="1" y="8" width="1" height="1" fill="#ffff99"/><rect x="2" y="8" width="1" height="1" fill="#000000"/><rect x="3" y="8" width="9" height="1" fill="#808000"/><rect x="12" y="8" width="1" height="1" fill="#000000"/><rect x="0" y="9" width="1" height="1" fill="#000000"/><rect x="1" y="9" width="1" height="1" fill="#ffff00"/><rect x="2" y="9" width="1" height="1" fill="#000000"/><rect x="3" y="9" width="3" height="1" fill="#808000"/><rect x="6" y="9" width="2" height="1" fill="#000000"/><rect x="8" y="9" width="3" height="1" fill="#808000"/><rect x="11" y="9" width="1" height="1" fill="#000000"/><rect x="0" y="10" width="2" height="1" fill="#000000"/><rect x="2" y="10" width="8" height="1" fill="#808000"/><rect x="10" y="10" width="1" height="1" fill="#000000"/><rect x="0" y="11" width="10" height="1" fill="#000000"/></svg>
<svg style="left:406px;top:50px" width="15" height="14" viewBox="0 0 15 14" shape-rendering="crispEdges"><rect x="0" y="0" width="13" height="1" fill="#666666"/><rect x="0" y="1" width="3" height="1" fill="#666666"/><rect x="3" y="1" width="7" height="1" fill="#ffffff"/><rect x="10" y="1" width="1" height="1" fill="#666666"/><rect x="11" y="1" width="1" height="1" fill="#ffffff"/><rect x="12" y="1" width="1" height="1" fill="#666666"/><rect x="13" y="1" width="1" height="1" fill="#ffffff"/><rect x="0" y="2" width="3" height="1" fill="#666666"/><rect x="3" y="2" width="1" height="1" fill="#ffffff"/><rect x="4" y="2" width="5" height="1" fill="#999999"/><rect x="9" y="2" width="1" height="1" fill="#ffffff"/><rect x="10" y="2" width="3" height="1" fill="#666666"/><rect x="13" y="2" width="1" height="1" fill="#ffffff"/><rect x="0" y="3" width="3" height="1" fill="#666666"/><rect x="3" y="3" width="1" height="1" fill="#ffffff"/><rect x="4" y="3" width="5" height="1" fill="#999999"/><rect x="9" y="3" width="1" height="1" fill="#ffffff"/><rect x="10" y="3" width="3" height="1" fill="#666666"/><rect x="13" y="3" width="1" height="1" fill="#ffffff"/><rect x="0" y="4" width="3" height="1" fill="#666666"/><rect x="3" y="4" width="1" height="1" fill="#ffffff"/><rect x="4" y="4" width="5" height="1" fill="#999999"/><rect x="9" y="4" width="1" height="1" fill="#ffffff"/><rect x="10" y="4" width="3" height="1" fill="#666666"/><rect x="13" y="4" width="1" height="1" fill="#ffffff"/><rect x="0" y="5" width="3" height="1" fill="#666666"/><rect x="3" y="5" width="1" height="1" fill="#ffffff"/><rect x="4" y="5" width="5" height="1" fill="#999999"/><rect x="9" y="5" width="1" height="1" fill="#ffffff"/><rect x="10" y="5" width="3" height="1" fill="#666666"/><rect x="13" y="5" width="1" height="1" fill="#ffffff"/><rect x="0" y="6" width="13" height="1" fill="#666666"/><rect x="13" y="6" width="1" height="1" fill="#ffffff"/><rect x="0" y="7" width="13" height="1" fill="#666666"/><rect x="13" y="7" width="1" height="1" fill="#ffffff"/><rect x="0" y="8" width="8" height="1" fill="#666666"/><rect x="8" y="8" width="2" height="1" fill="#ffffff"/><rect x="10" y="8" width="3" height="1" fill="#666666"/><rect x="13" y="8" width="1" height="1" fill="#ffffff"/><rect x="0" y="9" width="8" height="1" fill="#666666"/><rect x="8" y="9" width="1" height="1" fill="#ffffff"/><rect x="9" y="9" width="1" height="1" fill="#666666"/><rect x="10" y="9" width="1" height="1" fill="#ffffff"/><rect x="11" y="9" width="2" height="1" fill="#666666"/><rect x="13" y="9" width="1" height="1" fill="#ffffff"/><rect x="0" y="10" width="8" height="1" fill="#666666"/><rect x="8" y="10" width="1" height="1" fill="#ffffff"/><rect x="9" y="10" width="1" height="1" fill="#666666"/><rect x="10" y="10" width="1" height="1" fill="#ffffff"/><rect x="11" y="10" width="2" height="1" fill="#666666"/><rect x="13" y="10" width="1" height="1" fill="#ffffff"/><rect x="0" y="11" width="8" height="1" fill="#666666"/><rect x="8" y="11" width="3" height="1" fill="#ffffff"/><rect x="11" y="11" width="2" height="1" fill="#666666"/><rect x="13" y="11" width="1" height="1" fill="#ffffff"/><rect x="0" y="12" width="13" height="1" fill="#666666"/><rect x="13" y="12" width="1" height="1" fill="#ffffff"/><rect x="1" y="13" width="13" height="1" fill="#ffffff"/></svg>
<svg style="left:427px;top:50px" width="17" height="13" viewBox="0 0 17 13" shape-rendering="crispEdges"><rect x="4" y="0" width="10" height="1" fill="#000000"/><rect x="3" y="1" width="1" height="1" fill="#000000"/><rect x="4" y="1" width="9" height="1" fill="#ffffff"/><rect x="13" y="1" width="1" height="1" fill="#000000"/><rect x="3" y="2" width="1" height="1" fill="#000000"/><rect x="4" y="2" width="1" height="1" fill="#ffffff"/><rect x="5" y="2" width="6" height="1" fill="#000000"/><rect x="11" y="2" width="1" height="1" fill="#ffffff"/><rect x="12" y="2" width="3" height="1" fill="#000000"/><rect x="2" y="3" width="1" height="1" fill="#000000"/><rect x="3" y="3" width="8" height="1" fill="#ffffff"/><rect x="11" y="3" width="2" height="1" fill="#000000"/><rect x="13" y="3" width="1" height="1" fill="#666666"/><rect x="14" y="3" width="2" height="1" fill="#000000"/><rect x="2" y="4" width="1" height="1" fill="#000000"/><rect x="3" y="4" width="1" height="1" fill="#ffffff"/><rect x="4" y="4" width="6" height="1" fill="#000000"/><rect x="10" y="4" width="1" height="1" fill="#ffffff"/><rect x="11" y="4" width="1" height="1" fill="#000000"/><rect x="12" y="4" width="1" height="1" fill="#666666"/><rect x="13" y="4" width="1" height="1" fill="#000000"/><rect x="14" y="4" width="1" height="1" fill="#666666"/><rect x="15" y="4" width="1" height="1" fill="#000000"/><rect x="1" y="5" width="1" height="1" fill="#000000"/><rect x="2" y="5" width="8" height="1" fill="#ffffff"/><rect x="10" y="5" width="1" height="1" fill="#000000"/><rect x="11" y="5" width="1" height="1" fill="#666666"/><rect x="12" y="5" width="1" height="1" fill="#000000"/><rect x="13" y="5" width="1" height="1" fill="#666666"/><rect x="14" y="5" width="1" height="1" fill="#000000"/><rect x="15" y="5" width="1" height="1" fill="#666666"/><rect x="16" y="5" width="1" height="1" fill="#000000"/><rect x="1" y="6" width="11" height="1" fill="#000000"/><rect x="12" y="6" width="1" height="1" fill="#666666"/><rect x="13" y="6" width="1" height="1" fill="#000000"/><rect x="14" y="6" width="1" height="1" fill="#666666"/><rect x="15" y="6" width="2" height="1" fill="#000000"/><rect x="0" y="7" width="1" height="1" fill="#000000"/><rect x="1" y="7" width="11" height="1" fill="#999999"/><rect x="12" y="7" width="1" height="1" fill="#000000"/><rect x="13" y="7" width="1" height="1" fill="#666666"/><rect x="14" y="7" width="1" height="1" fill="#000000"/><rect x="15" y="7" width="1" height="1" fill="#666666"/><rect x="16" y="7" width="1" height="1" fill="#000000"/><rect x="0" y="8" width="1" height="1" fill="#000000"/><rect x="1" y="8" width="1" height="1" fill="#808000"/><rect x="2" y="8" width="1" height="1" fill="#000000"/><rect x="3" y="8" width="1" height="1" fill="#808000"/><rect x="4" y="8" width="1" height="1" fill="#000000"/><rect x="5" y="8" width="1" height="1" fill="#808000"/><rect x="6" y="8" width="1" height="1" fill="#000000"/><rect x="7" y="8" width="1" height="1" fill="#808000"/><rect x="8" y="8" width="1" height="1" fill="#000000"/><rect x="9" y="8" width="1" height="1" fill="#808000"/><rect x="10" y="8" width="1" height="1" fill="#000000"/><rect x="11" y="8" width="1" height="1" fill="#808000"/><rect x="12" y="8" width="2" height="1" fill="#000000"/><rect x="14" y="8" width="1" height="1" fill="#666666"/><rect x="15" y="8" width="2" height="1" fill="#000000"/><rect x="0" y="9" width="13" height="1" fill="#000000"/><rect x="13" y="9" width="1" height="1" fill="#666666"/><rect x="14" y="9" width="2" height="1" fill="#000000"/><rect x="0" y="10" width="1" height="1" fill="#000000"/><rect x="1" y="10" width="1" height="1" fill="#808000"/><rect x="2" y="10" width="1" height="1" fill="#000000"/><rect x="3" y="10" width="1" height="1" fill="#808000"/><rect x="4" y="10" width="1" height="1" fill="#000000"/><rect x="5" y="10" width="1" height="1" fill="#808000"/><rect x="6" y="10" width="1" height="1" fill="#000000"/><rect x="7" y="10" width="1" height="1" fill="#660000"/><rect x="8" y="10" width="1" height="1" fill="#ff0000"/><rect x="9" y="10" width="1" height="1" fill="#000000"/><rect x="10" y="10" width="1" height="1" fill="#808000"/><rect x="11" y="10" width="4" height="1" fill="#000000"/><rect x="0" y="11" width="2" height="1" fill="#000000"/><rect x="2" y="11" width="1" height="1" fill="#808000"/><rect x="3" y="11" width="1" height="1" fill="#000000"/><rect x="4" y="11" width="1" height="1" fill="#808000"/><rect x="5" y="11" width="1" height="1" fill="#000000"/><rect x="6" y="11" width="1" height="1" fill="#808000"/><rect x="7" y="11" width="1" height="1" fill="#000000"/><rect x="8" y="11" width="1" height="1" fill="#808000"/><rect x="9" y="11" width="1" height="1" fill="#000000"/><rect x="10" y="11" width="1" height="1" fill="#808000"/><rect x="11" y="11" width="3" height="1" fill="#000000"/><rect x="0" y="12" width="13" height="1" fill="#000000"/></svg>
<svg style="left:461px;top:49px" width="10" height="15" viewBox="0 0 10 15" shape-rendering="crispEdges"><rect x="2" y="0" width="1" height="1" fill="#000066"/><rect x="7" y="0" width="1" height="1" fill="#000066"/><rect x="2" y="1" width="1" height="1" fill="#000066"/><rect x="7" y="1" width="1" height="1" fill="#000066"/><rect x="2" y="2" width="2" height="1" fill="#000066"/><rect x="6" y="2" width="2" height="1" fill="#000066"/><rect x="2" y="3" width="2" height="1" fill="#000066"/><rect x="6" y="3" width="2" height="1" fill="#000066"/><rect x="3" y="4" width="1" height="1" fill="#000066"/><rect x="6" y="4" width="1" height="1" fill="#000066"/><rect x="3" y="5" width="4" height="1" fill="#000066"/><rect x="4" y="6" width="2" height="1" fill="#000066"/><rect x="4" y="7" width="2" height="1" fill="#000066"/><rect x="3" y="8" width="4" height="1" fill="#000066"/><rect x="2" y="9" width="3" height="1" fill="#000066"/><rect x="6" y="9" width="3" height="1" fill="#000066"/><rect x="1" y="10" width="2" height="1" fill="#000066"/><rect x="4" y="10" width="1" height="1" fill="#000066"/><rect x="6" y="10" width="1" height="1" fill="#000066"/><rect x="8" y="10" width="2" height="1" fill="#000066"/><rect x="0" y="11" width="1" height="1" fill="#000066"/><rect x="3" y="11" width="2" height="1" fill="#000066"/><rect x="6" y="11" width="2" height="1" fill="#000066"/><rect x="9" y="11" width="1" height="1" fill="#000066"/><rect x="0" y="12" width="1" height="1" fill="#000066"/><rect x="3" y="12" width="1" height="1" fill="#000066"/><rect x="7" y="12" width="1" height="1" fill="#000066"/><rect x="9" y="12" width="1" height="1" fill="#000066"/><rect x="0" y="13" width="1" height="1" fill="#000066"/><rect x="2" y="13" width="2" height="1" fill="#000066"/><rect x="7" y="13" width="3" height="1" fill="#000066"/><rect x="1" y="14" width="2" height="1" fill="#000066"/><rect x="8" y="14" width="1" height="1" fill="#000066"/></svg>
<svg style="left:482px;top:49px" width="16" height="13" viewBox="0 0 16 13" shape-rendering="crispEdges"><rect x="0" y="0" width="7" height="1" fill="#000066"/><rect x="0" y="1" width="1" height="1" fill="#000066"/><rect x="1" y="1" width="5" height="1" fill="#ffffff"/><rect x="6" y="1" width="2" height="1" fill="#000066"/><rect x="0" y="2" width="1" height="1" fill="#000066"/><rect x="1" y="2" width="1" height="1" fill="#ffffff"/><rect x="2" y="2" width="3" height="1" fill="#000000"/><rect x="5" y="2" width="2" height="1" fill="#ffffff"/><rect x="7" y="2" width="2" height="1" fill="#000066"/><rect x="0" y="3" width="1" height="1" fill="#000066"/><rect x="1" y="3" width="5" height="1" fill="#ffffff"/><rect x="6" y="3" width="7" height="1" fill="#000066"/><rect x="0" y="4" width="1" height="1" fill="#000066"/><rect x="1" y="4" width="1" height="1" fill="#ffffff"/><rect x="2" y="4" width="4" height="1" fill="#000000"/><rect x="6" y="4" width="1" height="1" fill="#000066"/><rect x="7" y="4" width="5" height="1" fill="#ffffff"/><rect x="12" y="4" width="2" height="1" fill="#000066"/><rect x="0" y="5" width="1" height="1" fill="#000066"/><rect x="1" y="5" width="5" height="1" fill="#ffffff"/><rect x="6" y="5" width="1" height="1" fill="#000066"/><rect x="7" y="5" width="6" height="1" fill="#ffffff"/><rect x="13" y="5" width="2" height="1" fill="#000066"/><rect x="0" y="6" width="1" height="1" fill="#000066"/><rect x="1" y="6" width="1" height="1" fill="#ffffff"/><rect x="2" y="6" width="4" height="1" fill="#000000"/><rect x="6" y="6" width="1" height="1" fill="#000066"/><rect x="7" y="6" width="1" height="1" fill="#ffffff"/><rect x="8" y="6" width="3" height="1" fill="#000000"/><rect x="11" y="6" width="3" height="1" fill="#ffffff"/><rect x="14" y="6" width="1" height="1" fill="#000066"/><rect x="0" y="7" width="1" height="1" fill="#000066"/><rect x="1" y="7" width="5" height="1" fill="#ffffff"/><rect x="6" y="7" width="1" height="1" fill="#000066"/><rect x="7" y="7" width="7" height="1" fill="#ffffff"/><rect x="14" y="7" width="1" height="1" fill="#000066"/><rect x="0" y="8" width="7" height="1" fill="#000066"/><rect x="7" y="8" width="1" height="1" fill="#ffffff"/><rect x="8" y="8" width="5" height="1" fill="#000000"/><rect x="13" y="8" width="1" height="1" fill="#ffffff"/><rect x="14" y="8" width="1" height="1" fill="#000066"/><rect x="6" y="9" width="1" height="1" fill="#000066"/><rect x="7" y="9" width="7" height="1" fill="#ffffff"/><rect x="14" y="9" width="1" height="1" fill="#000066"/><rect x="6" y="10" width="1" height="1" fill="#000066"/><rect x="7" y="10" width="1" height="1" fill="#ffffff"/><rect x="8" y="10" width="5" height="1" fill="#000000"/><rect x="13" y="10" width="1" height="1" fill="#ffffff"/><rect x="14" y="10" width="1" height="1" fill="#000066"/><rect x="6" y="11" width="1" height="1" fill="#000066"/><rect x="7" y="11" width="7" height="1" fill="#ffffff"/><rect x="14" y="11" width="1" height="1" fill="#000066"/><rect x="6" y="12" width="9" height="1" fill="#000066"/></svg>
<svg style="left:505px;top:49px" width="16" height="13" viewBox="0 0 16 13" shape-rendering="crispEdges"><rect x="5" y="0" width="1" height="1" fill="#000000"/><rect x="6" y="0" width="3" height="1" fill="#ffff00"/><rect x="9" y="0" width="1" height="1" fill="#000000"/><rect x="1" y="1" width="4" height="1" fill="#000000"/><rect x="5" y="1" width="1" height="1" fill="#ffff00"/><rect x="6" y="1" width="3" height="1" fill="#ffffff"/><rect x="9" y="1" width="1" height="1" fill="#ffff00"/><rect x="10" y="1" width="4" height="1" fill="#000000"/><rect x="0" y="2" width="1" height="1" fill="#000000"/><rect x="1" y="2" width="1" height="1" fill="#808000"/><rect x="2" y="2" width="1" height="1" fill="#cccccc"/><rect x="3" y="2" width="1" height="1" fill="#808000"/><rect x="4" y="2" width="1" height="1" fill="#000000"/><rect x="5" y="2" width="5" height="1" fill="#ffff00"/><rect x="10" y="2" width="1" height="1" fill="#000000"/><rect x="11" y="2" width="1" height="1" fill="#808000"/><rect x="12" y="2" width="1" height="1" fill="#cccccc"/><rect x="13" y="2" width="1" height="1" fill="#808000"/><rect x="14" y="2" width="1" height="1" fill="#000000"/><rect x="0" y="3" width="1" height="1" fill="#000000"/><rect x="1" y="3" width="1" height="1" fill="#cccccc"/><rect x="2" y="3" width="1" height="1" fill="#808000"/><rect x="3" y="3" width="1" height="1" fill="#cccccc"/><rect x="4" y="3" width="7" height="1" fill="#000000"/><rect x="11" y="3" width="1" height="1" fill="#cccccc"/><rect x="12" y="3" width="1" height="1" fill="#808000"/><rect x="13" y="3" width="1" height="1" fill="#cccccc"/><rect x="14" y="3" width="1" height="1" fill="#000000"/><rect x="0" y="4" width="1" height="1" fill="#000000"/><rect x="1" y="4" width="1" height="1" fill="#808000"/><rect x="2" y="4" width="1" height="1" fill="#cccccc"/><rect x="3" y="4" width="1" height="1" fill="#808000"/><rect x="4" y="4" width="1" height="1" fill="#cccccc"/><rect x="5" y="4" width="1" height="1" fill="#808000"/><rect x="6" y="4" width="1" height="1" fill="#cccccc"/><rect x="7" y="4" width="1" height="1" fill="#808000"/><rect x="8" y="4" width="1" height="1" fill="#cccccc"/><rect x="9" y="4" width="1" height="1" fill="#808000"/><rect x="10" y="4" width="1" height="1" fill="#cccccc"/><rect x="11" y="4" width="1" height="1" fill="#808000"/><rect x="12" y="4" width="1" height="1" fill="#cccccc"/><rect x="13" y="4" width="1" height="1" fill="#808000"/><rect x="14" y="4" width="1" height="1" fill="#000000"/><rect x="0" y="5" width="1" height="1" fill="#000000"/><rect x="1" y="5" width="1" height="1" fill="#cccccc"/><rect x="2" y="5" width="1" height="1" fill="#808000"/><rect x="3" y="5" width="1" height="1" fill="#cccccc"/><rect x="4" y="5" width="1" height="1" fill="#808000"/><rect x="5" y="5" width="1" height="1" fill="#cccccc"/><rect x="6" y="5" width="1" height="1" fill="#808000"/><rect x="7" y="5" width="7" height="1" fill="#000066"/><rect x="0" y="6" width="1" height="1" fill="#000000"/><rect x="1" y="6" width="1" height="1" fill="#808000"/><rect x="2" y="6" width="1" height="1" fill="#cccccc"/><rect x="3" y="6" width="1" height="1" fill="#808000"/><rect x="4" y="6" width="1" height="1" fill="#cccccc"/><rect x="5" y="6" width="1" height="1" fill="#808000"/><rect x="6" y="6" width="1" height="1" fill="#cccccc"/><rect x="7" y="6" width="1" height="1" fill="#000066"/><rect x="8" y="6" width="5" height="1" fill="#ffffff"/><rect x="13" y="6" width="2" height="1" fill="#000066"/><rect x="0" y="7" width="1" height="1" fill="#000000"/><rect x="1" y="7" width="1" height="1" fill="#cccccc"/><rect x="2" y="7" width="1" height="1" fill="#808000"/><rect x="3" y="7" width="1" height="1" fill="#cccccc"/><rect x="4" y="7" width="1" height="1" fill="#808000"/><rect x="5" y="7" width="1" height="1" fill="#cccccc"/><rect x="6" y="7" width="1" height="1" fill="#808000"/><rect x="7" y="7" width="1" height="1" fill="#000066"/><rect x="8" y="7" width="1" height="1" fill="#ffffff"/><rect x="9" y="7" width="3" height="1" fill="#000000"/><rect x="12" y="7" width="2" height="1" fill="#ffffff"/><rect x="14" y="7" width="1" height="1" fill="#000066"/><rect x="0" y="8" width="1" height="1" fill="#000000"/><rect x="1" y="8" width="1" height="1" fill="#808000"/><rect x="2" y="8" width="1" height="1" fill="#cccccc"/><rect x="3" y="8" width="1" height="1" fill="#808000"/><rect x="4" y="8" width="1" height="1" fill="#cccccc"/><rect x="5" y="8" width="1" height="1" fill="#808000"/><rect x="6" y="8" width="1" height="1" fill="#cccccc"/><rect x="7" y="8" width="1" height="1" fill="#000066"/><rect x="8" y="8" width="6" height="1" fill="#ffffff"/><rect x="14" y="8" width="1" height="1" fill="#000066"/><rect x="0" y="9" width="1" height="1" fill="#000000"/><rect x="1" y="9" width="1" height="1" fill="#cccccc"/><rect x="2" y="9" width="1" height="1" fill="#808000"/><rect x="3" y="9" width="1" height="1" fill="#cccccc"/><rect x="4" y="9" width="1" height="1" fill="#808000"/><rect x="5" y="9" width="1" height="1" fill="#cccccc"/><rect x="6" y="9" width="1" height="1" fill="#808000"/><rect x="7" y="9" width="1" height="1" fill="#000066"/><rect x="8" y="9" width="1" height="1" fill="#ffffff"/><rect x="9" y="9" width="4" height="1" fill="#000000"/><rect x="13" y="9" width="1" height="1" fill="#ffffff"/><rect x="14" y="9" width="1" height="1" fill="#000066"/><rect x="0" y="10" width="1" height="1" fill="#000000"/><rect x="1" y="10" width="1" height="1" fill="#808000"/><rect x="2" y="10" width="1" height="1" fill="#cccccc"/><rect x="3" y="10" width="1" height="1" fill="#808000"/><rect x="4" y="10" width="1" height="1" fill="#cccccc"/><rect x="5" y="10" width="1" height="1" fill="#808000"/><rect x="6" y="10" width="1" height="1" fill="#cccccc"/><rect x="7" y="10" width="1" height="1" fill="#000066"/><rect x="8" y="10" width="6" height="1" fill="#ffffff"/><rect x="14" y="10" width="1" height="1" fill="#000066"/><rect x="0" y="11" width="1" height="1" fill="#000000"/><rect x="1" y="11" width="1" height="1" fill="#cccccc"/><rect x="2" y="11" width="1" height="1" fill="#808000"/><rect x="3" y="11" width="1" height="1" fill="#cccccc"/><rect x="4" y="11" width="1" height="1" fill="#808000"/><rect x="5" y="11" width="1" height="1" fill="#cccccc"/><rect x="6" y="11" width="1" height="1" fill="#808000"/><rect x="7" y="11" width="1" height="1" fill="#000066"/><rect x="8" y="11" width="6" height="1" fill="#ffffff"/><rect x="14" y="11" width="1" height="1" fill="#000066"/><rect x="1" y="12" width="6" height="1" fill="#000000"/><rect x="7" y="12" width="8" height="1" fill="#000066"/></svg>
<svg style="left:536px;top:52px" width="15" height="9" viewBox="0 0 15 9" shape-rendering="crispEdges"><rect x="0" y="0" width="13" height="1" fill="#000066"/><rect x="0" y="1" width="14" height="1" fill="#000066"/><rect x="12" y="2" width="3" height="1" fill="#000066"/><rect x="2" y="3" width="1" height="1" fill="#000066"/><rect x="12" y="3" width="3" height="1" fill="#000066"/><rect x="1" y="4" width="2" height="1" fill="#000066"/><rect x="12" y="4" width="3" height="1" fill="#000066"/><rect x="0" y="5" width="14" height="1" fill="#000066"/><rect x="0" y="6" width="13" height="1" fill="#000066"/><rect x="1" y="7" width="2" height="1" fill="#000066"/><rect x="2" y="8" width="1" height="1" fill="#000066"/></svg>
<svg style="left:559px;top:52px" width="16" height="10" viewBox="0 0 16 10" shape-rendering="crispEdges"><rect x="2" y="0" width="11" height="1" fill="#666666"/><rect x="1" y="1" width="13" height="1" fill="#666666"/><rect x="14" y="1" width="1" height="1" fill="#ffffff"/><rect x="1" y="2" width="10" height="1" fill="#ffffff"/><rect x="12" y="2" width="3" height="1" fill="#666666"/><rect x="15" y="2" width="1" height="1" fill="#ffffff"/><rect x="6" y="3" width="1" height="1" fill="#666666"/><rect x="11" y="3" width="1" height="1" fill="#ffffff"/><rect x="12" y="3" width="3" height="1" fill="#666666"/><rect x="15" y="3" width="1" height="1" fill="#ffffff"/><rect x="6" y="4" width="2" height="1" fill="#666666"/><rect x="11" y="4" width="1" height="1" fill="#ffffff"/><rect x="12" y="4" width="2" height="1" fill="#666666"/><rect x="14" y="4" width="1" height="1" fill="#ffffff"/><rect x="1" y="5" width="13" height="1" fill="#666666"/><rect x="14" y="5" width="1" height="1" fill="#ffffff"/><rect x="1" y="6" width="12" height="1" fill="#666666"/><rect x="13" y="6" width="1" height="1" fill="#ffffff"/><rect x="1" y="7" width="5" height="1" fill="#ffffff"/><rect x="6" y="7" width="3" height="1" fill="#666666"/><rect x="9" y="7" width="4" height="1" fill="#ffffff"/><rect x="6" y="8" width="1" height="1" fill="#666666"/><rect x="7" y="8" width="2" height="1" fill="#ffffff"/><rect x="6" y="9" width="1" height="1" fill="#ffffff"/></svg>
<svg style="left:589px;top:49px" width="16" height="15" viewBox="0 0 16 15" shape-rendering="crispEdges"><rect x="7" y="0" width="2" height="1" fill="#000000"/><rect x="7" y="1" width="2" height="1" fill="#000000"/><rect x="6" y="2" width="1" height="1" fill="#ffffff"/><rect x="7" y="2" width="2" height="1" fill="#000000"/><rect x="9" y="2" width="1" height="1" fill="#000066"/><rect x="6" y="3" width="1" height="1" fill="#ffffff"/><rect x="7" y="3" width="2" height="1" fill="#000000"/><rect x="9" y="3" width="1" height="1" fill="#3333cc"/><rect x="5" y="4" width="2" height="1" fill="#ffffff"/><rect x="7" y="4" width="2" height="1" fill="#000000"/><rect x="9" y="4" width="1" height="1" fill="#000066"/><rect x="10" y="4" width="1" height="1" fill="#3333cc"/><rect x="4" y="5" width="1" height="1" fill="#000066"/><rect x="5" y="5" width="2" height="1" fill="#ffffff"/><rect x="7" y="5" width="2" height="1" fill="#000000"/><rect x="9" y="5" width="1" height="1" fill="#3333cc"/><rect x="10" y="5" width="1" height="1" fill="#000066"/><rect x="2" y="6" width="1" height="1" fill="#000066"/><rect x="3" y="6" width="1" height="1" fill="#3333cc"/><rect x="4" y="6" width="1" height="1" fill="#000066"/><rect x="5" y="6" width="1" height="1" fill="#3333cc"/><rect x="6" y="6" width="1" height="1" fill="#000066"/><rect x="7" y="6" width="2" height="1" fill="#000000"/><rect x="9" y="6" width="5" height="1" fill="#ffffff"/><rect x="0" y="7" width="16" height="1" fill="#000000"/><rect x="2" y="8" width="5" height="1" fill="#ffffff"/><rect x="7" y="8" width="2" height="1" fill="#000000"/><rect x="9" y="8" width="1" height="1" fill="#000066"/><rect x="10" y="8" width="1" height="1" fill="#3333cc"/><rect x="11" y="8" width="1" height="1" fill="#000066"/><rect x="12" y="8" width="1" height="1" fill="#3333cc"/><rect x="13" y="8" width="1" height="1" fill="#000066"/><rect x="5" y="9" width="1" height="1" fill="#000066"/><rect x="6" y="9" width="1" height="1" fill="#3333cc"/><rect x="7" y="9" width="2" height="1" fill="#000000"/><rect x="9" y="9" width="2" height="1" fill="#ffffff"/><rect x="5" y="10" width="1" height="1" fill="#3333cc"/><rect x="6" y="10" width="1" height="1" fill="#000066"/><rect x="7" y="10" width="2" height="1" fill="#000000"/><rect x="9" y="10" width="2" height="1" fill="#ffffff"/><rect x="6" y="11" width="1" height="1" fill="#3333cc"/><rect x="7" y="11" width="2" height="1" fill="#000000"/><rect x="9" y="11" width="1" height="1" fill="#ffffff"/><rect x="6" y="12" width="1" height="1" fill="#000066"/><rect x="7" y="12" width="2" height="1" fill="#000000"/><rect x="9" y="12" width="1" height="1" fill="#ffffff"/><rect x="7" y="13" width="2" height="1" fill="#000000"/><rect x="7" y="14" width="2" height="1" fill="#000000"/></svg>
<svg style="left:612px;top:50px" width="18" height="13" viewBox="0 0 18 13" shape-rendering="crispEdges"><rect x="10" y="0" width="1" height="1" fill="#ffff00"/><rect x="12" y="0" width="1" height="1" fill="#ffff00"/><rect x="14" y="0" width="1" height="1" fill="#ffff00"/><rect x="16" y="0" width="1" height="1" fill="#ffff00"/><rect x="9" y="1" width="1" height="1" fill="#ffff00"/><rect x="10" y="1" width="1" height="1" fill="#ffffff"/><rect x="11" y="1" width="6" height="1" fill="#ffff00"/><rect x="4" y="2" width="1" height="1" fill="#666666"/><rect x="8" y="2" width="1" height="1" fill="#ffff00"/><rect x="10" y="2" width="6" height="1" fill="#ffff00"/><rect x="4" y="3" width="1" height="1" fill="#666666"/><rect x="9" y="3" width="1" height="1" fill="#ffff00"/><rect x="10" y="3" width="1" height="1" fill="#ffffff"/><rect x="11" y="3" width="1" height="1" fill="#ffff00"/><rect x="13" y="3" width="2" height="1" fill="#ffff00"/><rect x="4" y="4" width="1" height="1" fill="#666666"/><rect x="8" y="4" width="1" height="1" fill="#ffff00"/><rect x="10" y="4" width="2" height="1" fill="#ffff00"/><rect x="13" y="4" width="1" height="1" fill="#ffff00"/><rect x="1" y="5" width="7" height="1" fill="#666666"/><rect x="9" y="5" width="2" height="1" fill="#ffff00"/><rect x="4" y="6" width="1" height="1" fill="#666666"/><rect x="9" y="6" width="2" height="1" fill="#ffff00"/><rect x="4" y="7" width="1" height="1" fill="#666666"/><rect x="8" y="7" width="2" height="1" fill="#ffff00"/><rect x="4" y="8" width="1" height="1" fill="#666666"/><rect x="8" y="8" width="1" height="1" fill="#ffff00"/><rect x="3" y="11" width="1" height="1" fill="#009999"/><rect x="6" y="11" width="1" height="1" fill="#666666"/><rect x="9" y="11" width="1" height="1" fill="#000066"/><rect x="12" y="11" width="1" height="1" fill="#666666"/><rect x="3" y="12" width="1" height="1" fill="#009999"/><rect x="6" y="12" width="1" height="1" fill="#666666"/><rect x="9" y="12" width="1" height="1" fill="#000066"/><rect x="12" y="12" width="1" height="1" fill="#666666"/></svg>
<svg style="left:636px;top:50px" width="15" height="13" viewBox="0 0 15 13" shape-rendering="crispEdges"><rect x="0" y="0" width="7" height="1" fill="#000000"/><rect x="0" y="1" width="1" height="1" fill="#000000"/><rect x="1" y="1" width="5" height="1" fill="#ffffff"/><rect x="6" y="1" width="2" height="1" fill="#000000"/><rect x="0" y="2" width="1" height="1" fill="#000000"/><rect x="1" y="2" width="1" height="1" fill="#ffffff"/><rect x="2" y="2" width="3" height="1" fill="#000000"/><rect x="5" y="2" width="2" height="1" fill="#ffffff"/><rect x="7" y="2" width="2" height="1" fill="#000000"/><rect x="0" y="3" width="1" height="1" fill="#000000"/><rect x="1" y="3" width="7" height="1" fill="#ffffff"/><rect x="8" y="3" width="1" height="1" fill="#000000"/><rect x="0" y="4" width="1" height="1" fill="#000000"/><rect x="1" y="4" width="1" height="1" fill="#ffffff"/><rect x="2" y="4" width="3" height="1" fill="#000000"/><rect x="5" y="4" width="1" height="1" fill="#ffffff"/><rect x="6" y="4" width="5" height="1" fill="#000000"/><rect x="0" y="5" width="1" height="1" fill="#000000"/><rect x="1" y="5" width="4" height="1" fill="#ffffff"/><rect x="5" y="5" width="1" height="1" fill="#000000"/><rect x="6" y="5" width="2" height="1" fill="#0000ff"/><rect x="8" y="5" width="1" height="1" fill="#00cc00"/><rect x="9" y="5" width="1" height="1" fill="#006600"/><rect x="10" y="5" width="1" height="1" fill="#0000ff"/><rect x="11" y="5" width="1" height="1" fill="#000000"/><rect x="0" y="6" width="1" height="1" fill="#000000"/><rect x="1" y="6" width="1" height="1" fill="#ffffff"/><rect x="2" y="6" width="3" height="1" fill="#000000"/><rect x="5" y="6" width="1" height="1" fill="#0000ff"/><rect x="6" y="6" width="2" height="1" fill="#00cc00"/><rect x="8" y="6" width="1" height="1" fill="#006600"/><rect x="9" y="6" width="3" height="1" fill="#0000ff"/><rect x="12" y="6" width="1" height="1" fill="#000000"/><rect x="0" y="7" width="1" height="1" fill="#000000"/><rect x="1" y="7" width="3" height="1" fill="#ffffff"/><rect x="4" y="7" width="1" height="1" fill="#000000"/><rect x="5" y="7" width="1" height="1" fill="#0000ff"/><rect x="6" y="7" width="1" height="1" fill="#00cc00"/><rect x="7" y="7" width="1" height="1" fill="#006600"/><rect x="8" y="7" width="2" height="1" fill="#0000ff"/><rect x="10" y="7" width="1" height="1" fill="#00cc00"/><rect x="11" y="7" width="1" height="1" fill="#0000ff"/><rect x="12" y="7" width="1" height="1" fill="#000000"/><rect x="0" y="8" width="1" height="1" fill="#000000"/><rect x="1" y="8" width="1" height="1" fill="#ffffff"/><rect x="2" y="8" width="3" height="1" fill="#000000"/><rect x="5" y="8" width="4" height="1" fill="#0000ff"/><rect x="9" y="8" width="2" height="1" fill="#00cc00"/><rect x="11" y="8" width="1" height="1" fill="#006600"/><rect x="12" y="8" width="1" height="1" fill="#000000"/><rect x="0" y="9" width="1" height="1" fill="#000000"/><rect x="1" y="9" width="3" height="1" fill="#ffffff"/><rect x="4" y="9" width="1" height="1" fill="#000000"/><rect x="5" y="9" width="1" height="1" fill="#0000ff"/><rect x="6" y="9" width="1" height="1" fill="#00cc00"/><rect x="7" y="9" width="2" height="1" fill="#0000ff"/><rect x="9" y="9" width="1" height="1" fill="#00cc00"/><rect x="10" y="9" width="1" height="1" fill="#006600"/><rect x="11" y="9" width="1" height="1" fill="#0000ff"/><rect x="12" y="9" width="1" height="1" fill="#000000"/><rect x="0" y="10" width="5" height="1" fill="#000000"/><rect x="5" y="10" width="1" height="1" fill="#0000ff"/><rect x="6" y="10" width="2" height="1" fill="#00cc00"/><rect x="8" y="10" width="4" height="1" fill="#0000ff"/><rect x="12" y="10" width="1" height="1" fill="#000000"/><rect x="5" y="11" width="1" height="1" fill="#000000"/><rect x="6" y="11" width="1" height="1" fill="#0000ff"/><rect x="7" y="11" width="1" height="1" fill="#00cc00"/><rect x="8" y="11" width="1" height="1" fill="#006600"/><rect x="9" y="11" width="2" height="1" fill="#0000ff"/><rect x="11" y="11" width="1" height="1" fill="#000000"/><rect x="6" y="12" width="5" height="1" fill="#000000"/></svg>
<svg style="left:666px;top:49px" width="17" height="15" viewBox="0 0 17 15" shape-rendering="crispEdges"><rect x="7" y="0" width="3" height="1" fill="#000000"/><rect x="6" y="1" width="1" height="1" fill="#000000"/><rect x="10" y="1" width="1" height="1" fill="#000000"/><rect x="5" y="2" width="1" height="1" fill="#000000"/><rect x="11" y="2" width="1" height="1" fill="#000000"/><rect x="0" y="3" width="1" height="1" fill="#ffff00"/><rect x="1" y="3" width="1" height="1" fill="#000000"/><rect x="2" y="3" width="1" height="1" fill="#ffff00"/><rect x="3" y="3" width="1" height="1" fill="#000000"/><rect x="4" y="3" width="1" height="1" fill="#ffff00"/><rect x="5" y="3" width="1" height="1" fill="#000000"/><rect x="6" y="3" width="1" height="1" fill="#ffff00"/><rect x="7" y="3" width="1" height="1" fill="#000000"/><rect x="8" y="3" width="1" height="1" fill="#ffff00"/><rect x="9" y="3" width="1" height="1" fill="#000000"/><rect x="10" y="3" width="1" height="1" fill="#ffff00"/><rect x="11" y="3" width="1" height="1" fill="#000000"/><rect x="12" y="3" width="1" height="1" fill="#ffff00"/><rect x="13" y="3" width="1" height="1" fill="#000000"/><rect x="14" y="3" width="1" height="1" fill="#ffff00"/><rect x="15" y="3" width="1" height="1" fill="#000000"/><rect x="16" y="3" width="1" height="1" fill="#ffff00"/><rect x="0" y="4" width="1" height="1" fill="#000000"/><rect x="1" y="4" width="1" height="1" fill="#ffffff"/><rect x="2" y="4" width="1" height="1" fill="#00ffff"/><rect x="3" y="4" width="1" height="1" fill="#ffffff"/><rect x="4" y="4" width="1" height="1" fill="#00ffff"/><rect x="5" y="4" width="1" height="1" fill="#ffffff"/><rect x="6" y="4" width="1" height="1" fill="#00ffff"/><rect x="7" y="4" width="1" height="1" fill="#ffffff"/><rect x="8" y="4" width="1" height="1" fill="#00ffff"/><rect x="9" y="4" width="1" height="1" fill="#ffffff"/><rect x="10" y="4" width="1" height="1" fill="#00ffff"/><rect x="11" y="4" width="1" height="1" fill="#ffffff"/><rect x="12" y="4" width="1" height="1" fill="#00ffff"/><rect x="13" y="4" width="1" height="1" fill="#ffffff"/><rect x="14" y="4" width="1" height="1" fill="#00ffff"/><rect x="15" y="4" width="1" height="1" fill="#ffffff"/><rect x="16" y="4" width="1" height="1" fill="#000000"/><rect x="0" y="5" width="1" height="1" fill="#ffff00"/><rect x="1" y="5" width="1" height="1" fill="#00ffff"/><rect x="2" y="5" width="1" height="1" fill="#ffffff"/><rect x="3" y="5" width="1" height="1" fill="#00ffff"/><rect x="4" y="5" width="1" height="1" fill="#ffffff"/><rect x="5" y="5" width="1" height="1" fill="#00ffff"/><rect x="6" y="5" width="1" height="1" fill="#ffffff"/><rect x="7" y="5" width="1" height="1" fill="#00ffff"/><rect x="8" y="5" width="1" height="1" fill="#ff0000"/><rect x="9" y="5" width="1" height="1" fill="#ffffff"/><rect x="10" y="5" width="1" height="1" fill="#00ffff"/><rect x="11" y="5" width="1" height="1" fill="#ffffff"/><rect x="12" y="5" width="1" height="1" fill="#00ffff"/><rect x="13" y="5" width="1" height="1" fill="#ffffff"/><rect x="14" y="5" width="1" height="1" fill="#00ffff"/><rect x="15" y="5" width="1" height="1" fill="#ffffff"/><rect x="16" y="5" width="1" height="1" fill="#ffff00"/><rect x="0" y="6" width="1" height="1" fill="#000000"/><rect x="1" y="6" width="1" height="1" fill="#ffffff"/><rect x="2" y="6" width="1" height="1" fill="#00ffff"/><rect x="3" y="6" width="1" height="1" fill="#ffffff"/><rect x="4" y="6" width="1" height="1" fill="#00ffff"/><rect x="5" y="6" width="1" height="1" fill="#ffffff"/><rect x="6" y="6" width="1" height="1" fill="#00ffff"/><rect x="7" y="6" width="3" height="1" fill="#ff0000"/><rect x="10" y="6" width="1" height="1" fill="#00ffff"/><rect x="11" y="6" width="1" height="1" fill="#ffffff"/><rect x="12" y="6" width="1" height="1" fill="#00ffff"/><rect x="13" y="6" width="1" height="1" fill="#ffffff"/><rect x="14" y="6" width="1" height="1" fill="#00ffff"/><rect x="15" y="6" width="1" height="1" fill="#ffffff"/><rect x="16" y="6" width="1" height="1" fill="#000000"/><rect x="0" y="7" width="1" height="1" fill="#ffff00"/><rect x="1" y="7" width="1" height="1" fill="#00ffff"/><rect x="2" y="7" width="1" height="1" fill="#ffffff"/><rect x="3" y="7" width="1" height="1" fill="#00ffff"/><rect x="4" y="7" width="1" height="1" fill="#ffffff"/><rect x="5" y="7" width="1" height="1" fill="#00ffff"/><rect x="6" y="7" width="2" height="1" fill="#ff0000"/><rect x="8" y="7" width="1" height="1" fill="#ffffff"/><rect x="9" y="7" width="2" height="1" fill="#ff0000"/><rect x="11" y="7" width="1" height="1" fill="#00ffff"/><rect x="12" y="7" width="1" height="1" fill="#ffffff"/><rect x="13" y="7" width="1" height="1" fill="#00ffff"/><rect x="14" y="7" width="1" height="1" fill="#ffffff"/><rect x="15" y="7" width="1" height="1" fill="#00ffff"/><rect x="16" y="7" width="1" height="1" fill="#ffff00"/><rect x="0" y="8" width="1" height="1" fill="#000000"/><rect x="1" y="8" width="1" height="1" fill="#ffffff"/><rect x="2" y="8" width="1" height="1" fill="#00ffff"/><rect x="3" y="8" width="1" height="1" fill="#ffffff"/><rect x="4" y="8" width="1" height="1" fill="#00ffff"/><rect x="5" y="8" width="2" height="1" fill="#ff0000"/><rect x="7" y="8" width="3" height="1" fill="#ffffff"/><rect x="10" y="8" width="2" height="1" fill="#ff0000"/><rect x="12" y="8" width="1" height="1" fill="#ffffff"/><rect x="13" y="8" width="1" height="1" fill="#00ffff"/><rect x="14" y="8" width="1" height="1" fill="#ffffff"/><rect x="15" y="8" width="1" height="1" fill="#00ffff"/><rect x="16" y="8" width="1" height="1" fill="#000000"/><rect x="0" y="9" width="1" height="1" fill="#ffff00"/><rect x="1" y="9" width="1" height="1" fill="#00ffff"/><rect x="2" y="9" width="1" height="1" fill="#ffffff"/><rect x="3" y="9" width="1" height="1" fill="#00ffff"/><rect x="4" y="9" width="2" height="1" fill="#ff0000"/><rect x="6" y="9" width="5" height="1" fill="#ffffff"/><rect x="11" y="9" width="2" height="1" fill="#ff0000"/><rect x="13" y="9" width="1" height="1" fill="#00ffff"/><rect x="14" y="9" width="1" height="1" fill="#ffffff"/><rect x="15" y="9" width="1" height="1" fill="#00ffff"/><rect x="16" y="9" width="1" height="1" fill="#ffff00"/><rect x="0" y="10" width="1" height="1" fill="#000000"/><rect x="1" y="10" width="1" height="1" fill="#ffffff"/><rect x="2" y="10" width="1" height="1" fill="#00ffff"/><rect x="3" y="10" width="1" height="1" fill="#ffffff"/><rect x="4" y="10" width="1" height="1" fill="#00ffff"/><rect x="5" y="10" width="3" height="1" fill="#ffffff"/><rect x="8" y="10" width="1" height="1" fill="#000000"/><rect x="9" y="10" width="3" height="1" fill="#ffffff"/><rect x="12" y="10" width="1" height="1" fill="#00ffff"/><rect x="13" y="10" width="1" height="1" fill="#ffffff"/><rect x="14" y="10" width="1" height="1" fill="#00ffff"/><rect x="15" y="10" width="1" height="1" fill="#ffffff"/><rect x="16" y="10" width="1" height="1" fill="#000000"/><rect x="0" y="11" width="1" height="1" fill="#ffff00"/><rect x="1" y="11" width="1" height="1" fill="#00cc00"/><rect x="2" y="11" width="1" height="1" fill="#00ffff"/><rect x="3" y="11" width="1" height="1" fill="#00cc00"/><rect x="4" y="11" width="1" height="1" fill="#00ffff"/><rect x="5" y="11" width="1" height="1" fill="#00cc00"/><rect x="6" y="11" width="2" height="1" fill="#ffffff"/><rect x="8" y="11" width="1" height="1" fill="#000000"/><rect x="9" y="11" width="2" height="1" fill="#ffffff"/><rect x="11" y="11" width="1" height="1" fill="#00cc00"/><rect x="12" y="11" width="1" height="1" fill="#00ffff"/><rect x="13" y="11" width="1" height="1" fill="#00cc00"/><rect x="14" y="11" width="1" height="1" fill="#00ffff"/><rect x="15" y="11" width="1" height="1" fill="#00cc00"/><rect x="16" y="11" width="1" height="1" fill="#ffff00"/><rect x="0" y="12" width="1" height="1" fill="#000000"/><rect x="1" y="12" width="5" height="1" fill="#00cc00"/><rect x="6" y="12" width="2" height="1" fill="#ffffff"/><rect x="8" y="12" width="1" height="1" fill="#000000"/><rect x="9" y="12" width="2" height="1" fill="#ffffff"/><rect x="11" y="12" width="5" height="1" fill="#00cc00"/><rect x="16" y="12" width="1" height="1" fill="#000000"/><rect x="0" y="13" width="1" height="1" fill="#ffff00"/><rect x="1" y="13" width="1" height="1" fill="#006600"/><rect x="2" y="13" width="1" height="1" fill="#00cc00"/><rect x="3" y="13" width="1" height="1" fill="#006600"/><rect x="4" y="13" width="1" height="1" fill="#00cc00"/><rect x="5" y="13" width="1" height="1" fill="#006600"/><rect x="6" y="13" width="1" height="1" fill="#00cc00"/><rect x="7" y="13" width="1" height="1" fill="#006600"/><rect x="8" y="13" width="1" height="1" fill="#00cc00"/><rect x="9" y="13" width="1" height="1" fill="#006600"/><rect x="10" y="13" width="1" height="1" fill="#00cc00"/><rect x="11" y="13" width="1" height="1" fill="#006600"/><rect x="12" y="13" width="1" height="1" fill="#00cc00"/><rect x="13" y="13" width="1" height="1" fill="#006600"/><rect x="14" y="13" width="1" height="1" fill="#00cc00"/><rect x="15" y="13" width="1" height="1" fill="#006600"/><rect x="16" y="13" width="1" height="1" fill="#ffff00"/><rect x="0" y="14" width="1" height="1" fill="#000000"/><rect x="1" y="14" width="1" height="1" fill="#660000"/><rect x="2" y="14" width="1" height="1" fill="#000000"/><rect x="3" y="14" width="1" height="1" fill="#660000"/><rect x="4" y="14" width="1" height="1" fill="#000000"/><rect x="5" y="14" width="1" height="1" fill="#660000"/><rect x="6" y="14" width="1" height="1" fill="#000000"/><rect x="7" y="14" width="1" height="1" fill="#660000"/><rect x="8" y="14" width="1" height="1" fill="#000000"/><rect x="9" y="14" width="1" height="1" fill="#660000"/><rect x="10" y="14" width="1" height="1" fill="#000000"/><rect x="11" y="14" width="1" height="1" fill="#660000"/><rect x="12" y="14" width="1" height="1" fill="#000000"/><rect x="13" y="14" width="1" height="1" fill="#660000"/><rect x="14" y="14" width="1" height="1" fill="#000000"/><rect x="15" y="14" width="1" height="1" fill="#660000"/><rect x="16" y="14" width="1" height="1" fill="#000000"/></svg>
<div style="left:194px;top:77px;font:bold 14px/16px 'Liberation Serif',serif;color:#000;transform:scaleX(1.3);transform-origin:0 0">B</div>
<div style="left:220px;top:77px;font:italic bold 14px/16px 'Liberation Serif',serif;color:#000;transform:scaleX(1.2);transform-origin:0 0">i</div>
<div style="left:241px;top:77px;font:14px/16px 'Liberation Serif',serif;color:#000;transform:scaleX(1.1);transform-origin:0 0">U</div>
<div style="left:241px;top:90px;width:11px;height:1px;background:#000000;"></div>
<div style="left:263px;top:77px;font:bold 14px/16px 'Liberation Serif',serif;color:#000">A</div>
<div style="left:268px;top:84px;width:9px;height:8px;background:#000000;"></div>
<div style="left:294px;top:80px;width:12px;height:1px;background:#000000;"></div>
<div style="left:294px;top:82px;width:9px;height:1px;background:#000000;"></div>
<div style="left:294px;top:84px;width:12px;height:1px;background:#000000;"></div>
<div style="left:294px;top:86px;width:9px;height:1px;background:#000000;"></div>
<div style="left:294px;top:88px;width:12px;height:1px;background:#000000;"></div>
<div style="left:317px;top:80px;width:12px;height:1px;background:#000000;"></div>
<div style="left:318px;top:82px;width:9px;height:1px;background:#000000;"></div>
<div style="left:317px;top:84px;width:12px;height:1px;background:#000000;"></div>
<div style="left:318px;top:86px;width:9px;height:1px;background:#000000;"></div>
<div style="left:317px;top:88px;width:12px;height:1px;background:#000000;"></div>
<div style="left:340px;top:80px;width:12px;height:1px;background:#000000;"></div>
<div style="left:343px;top:82px;width:9px;height:1px;background:#000000;"></div>
<div style="left:340px;top:84px;width:12px;height:1px;background:#000000;"></div>
<div style="left:343px;top:86px;width:9px;height:1px;background:#000000;"></div>
<div style="left:340px;top:88px;width:12px;height:1px;background:#000000;"></div>
<div style="left:363px;top:80px;width:12px;height:1px;background:#000000;"></div>
<div style="left:363px;top:82px;width:12px;height:1px;background:#000000;"></div>
<div style="left:363px;top:84px;width:12px;height:1px;background:#000000;"></div>
<div style="left:363px;top:86px;width:12px;height:1px;background:#000000;"></div>
<div style="left:363px;top:88px;width:12px;height:1px;background:#000000;"></div>
<svg style="left:394px;top:79px" width="13" height="9" viewBox="0 0 13 9" shape-rendering="crispEdges"><rect x="7" y="0" width="4" height="1" fill="#000000"/><rect x="7" y="1" width="1" height="1" fill="#000000"/><rect x="8" y="1" width="2" height="1" fill="#ffff00"/><rect x="10" y="1" width="1" height="1" fill="#808000"/><rect x="11" y="1" width="1" height="1" fill="#000000"/><rect x="7" y="2" width="1" height="1" fill="#000000"/><rect x="8" y="2" width="2" height="1" fill="#ffff00"/><rect x="10" y="2" width="1" height="1" fill="#808000"/><rect x="11" y="2" width="1" height="1" fill="#000000"/><rect x="7" y="3" width="1" height="1" fill="#000000"/><rect x="8" y="3" width="2" height="1" fill="#ffff00"/><rect x="10" y="3" width="1" height="1" fill="#808000"/><rect x="11" y="3" width="1" height="1" fill="#000000"/><rect x="7" y="4" width="1" height="1" fill="#000000"/><rect x="8" y="4" width="2" height="1" fill="#ffff00"/><rect x="10" y="4" width="1" height="1" fill="#808000"/><rect x="11" y="4" width="1" height="1" fill="#000000"/><rect x="0" y="5" width="4" height="1" fill="#000000"/><rect x="7" y="5" width="1" height="1" fill="#000000"/><rect x="8" y="5" width="2" height="1" fill="#ffff00"/><rect x="10" y="5" width="1" height="1" fill="#808000"/><rect x="11" y="5" width="1" height="1" fill="#000000"/><rect x="0" y="6" width="1" height="1" fill="#000000"/><rect x="1" y="6" width="3" height="1" fill="#ffff00"/><rect x="4" y="6" width="5" height="1" fill="#000000"/><rect x="9" y="6" width="1" height="1" fill="#ffff00"/><rect x="10" y="6" width="1" height="1" fill="#808000"/><rect x="11" y="6" width="1" height="1" fill="#000000"/><rect x="0" y="7" width="5" height="1" fill="#000000"/><rect x="5" y="7" width="3" height="1" fill="#ffff00"/><rect x="8" y="7" width="3" height="1" fill="#000000"/><rect x="5" y="8" width="4" height="1" fill="#000000"/></svg>
<div style="left:417px;top:77px;line-height:15px;height:15px;font-size:13px;font-family:'Liberation Sans',sans-serif;color:#000000;white-space:pre;font-weight:bold;transform:scaleX(1.08);transform-origin:0 0;">%</div>
<div style="left:439px;top:78px;line-height:10px;height:10px;font-size:9px;font-family:'Liberation Sans',sans-serif;color:#000000;white-space:pre;font-weight:bold;transform:scaleX(1.15);transform-origin:0 0;">$</div>
<div style="left:447px;top:78px;line-height:10px;height:10px;font-size:9px;font-family:'Liberation Sans',sans-serif;color:#000000;white-space:pre;font-weight:bold;transform:scaleX(0.8);transform-origin:0 0;">%</div>
<svg style="left:442px;top:86px" width="10" height="5" viewBox="0 0 10 5" shape-rendering="crispEdges"><rect x="2" y="0" width="1" height="1" fill="#000066"/><rect x="1" y="1" width="2" height="1" fill="#000066"/><rect x="0" y="2" width="9" height="1" fill="#000066"/><rect x="1" y="3" width="2" height="1" fill="#000066"/><rect x="2" y="4" width="1" height="1" fill="#000066"/></svg>
<div style="left:464px;top:78px;line-height:7px;height:7px;font-size:7px;font-family:'Liberation Sans',sans-serif;color:#cccccc;white-space:pre;">0</div>
<svg style="left:468px;top:79px" width="8" height="6" viewBox="0 0 8 6" shape-rendering="crispEdges"><rect x="0" y="0" width="6" height="1" fill="#000066"/><rect x="5" y="1" width="1" height="1" fill="#000066"/><rect x="5" y="2" width="1" height="1" fill="#000066"/><rect x="3" y="3" width="5" height="1" fill="#000066"/><rect x="4" y="4" width="3" height="1" fill="#000066"/><rect x="5" y="5" width="1" height="1" fill="#000066"/></svg>
<div style="left:463px;top:84px;line-height:7px;height:7px;font-size:7px;font-family:'Liberation Sans',sans-serif;color:#000000;white-space:pre;font-weight:bold;transform:scaleX(1.028);transform-origin:0 0;">.000</div>
<div style="left:486px;top:78px;line-height:7px;height:7px;font-size:7px;font-family:'Liberation Sans',sans-serif;color:#000000;white-space:pre;font-weight:bold;transform:scaleX(0.925);transform-origin:0 0;">.00</div>
<div style="left:495px;top:78px;line-height:7px;height:7px;font-size:7px;font-family:'Liberation Sans',sans-serif;color:#cccccc;white-space:pre;">0</div>
<div style="left:487px;top:84px;line-height:7px;height:7px;font-size:7px;font-family:'Liberation Sans',sans-serif;color:#000000;white-space:pre;font-weight:bold;">0</div>
<svg style="left:492px;top:84px" width="7" height="6" viewBox="0 0 7 6" shape-rendering="crispEdges"><rect x="6" y="0" width="1" height="1" fill="#000066"/><rect x="2" y="1" width="1" height="1" fill="#000066"/><rect x="6" y="1" width="1" height="1" fill="#000066"/><rect x="1" y="2" width="2" height="1" fill="#000066"/><rect x="6" y="2" width="1" height="1" fill="#000066"/><rect x="0" y="3" width="7" height="1" fill="#000066"/><rect x="1" y="4" width="2" height="1" fill="#000066"/><rect x="2" y="5" width="1" height="1" fill="#000066"/></svg>
<svg style="left:515px;top:77px" width="16" height="15" viewBox="0 0 16 15" shape-rendering="crispEdges"><rect x="7" y="0" width="1" height="1" fill="#000000"/><rect x="7" y="2" width="1" height="1" fill="#000000"/><rect x="3" y="3" width="13" height="1" fill="#000000"/><rect x="7" y="4" width="1" height="1" fill="#000000"/><rect x="7" y="5" width="9" height="1" fill="#000000"/><rect x="7" y="6" width="9" height="1" fill="#000000"/><rect x="7" y="7" width="1" height="1" fill="#000000"/><rect x="7" y="8" width="6" height="1" fill="#000000"/><rect x="7" y="9" width="6" height="1" fill="#000000"/><rect x="7" y="10" width="1" height="1" fill="#000000"/><rect x="3" y="11" width="13" height="1" fill="#000000"/><rect x="7" y="12" width="1" height="1" fill="#000000"/><rect x="7" y="14" width="1" height="1" fill="#000000"/></svg>
<svg style="left:515px;top:82px" width="7" height="5" viewBox="0 0 7 5" shape-rendering="crispEdges"><rect x="2" y="0" width="1" height="1" fill="#000066"/><rect x="1" y="1" width="2" height="1" fill="#000066"/><rect x="0" y="2" width="6" height="1" fill="#000066"/><rect x="1" y="3" width="2" height="1" fill="#000066"/><rect x="2" y="4" width="1" height="1" fill="#000066"/></svg>
<svg style="left:538px;top:77px" width="16" height="15" viewBox="0 0 16 15" shape-rendering="crispEdges"><rect x="7" y="0" width="1" height="1" fill="#000000"/><rect x="7" y="2" width="1" height="1" fill="#000000"/><rect x="3" y="3" width="13" height="1" fill="#000000"/><rect x="7" y="4" width="1" height="1" fill="#000000"/><rect x="7" y="5" width="9" height="1" fill="#000000"/><rect x="7" y="6" width="9" height="1" fill="#000000"/><rect x="7" y="7" width="1" height="1" fill="#000000"/><rect x="7" y="8" width="6" height="1" fill="#000000"/><rect x="7" y="9" width="6" height="1" fill="#000000"/><rect x="7" y="10" width="1" height="1" fill="#000000"/><rect x="3" y="11" width="13" height="1" fill="#000000"/><rect x="7" y="12" width="1" height="1" fill="#000000"/><rect x="7" y="14" width="1" height="1" fill="#000000"/></svg>
<svg style="left:538px;top:82px" width="7" height="5" viewBox="0 0 7 5" shape-rendering="crispEdges"><rect x="3" y="0" width="1" height="1" fill="#000066"/><rect x="3" y="1" width="2" height="1" fill="#000066"/><rect x="0" y="2" width="6" height="1" fill="#000066"/><rect x="3" y="3" width="2" height="1" fill="#000066"/><rect x="3" y="4" width="1" height="1" fill="#000066"/></svg>
<div style="left:571px;top:79px;width:12px;height:11px;border:1px solid #000066;"></div>
<svg style="left:593px;top:78px" width="15" height="14" viewBox="0 0 15 14" shape-rendering="crispEdges"><rect x="0" y="0" width="15" height="1" fill="#000066"/><rect x="0" y="1" width="1" height="1" fill="#000066"/><rect x="1" y="1" width="3" height="1" fill="#ffffff"/><rect x="4" y="1" width="3" height="1" fill="#000066"/><rect x="7" y="1" width="1" height="1" fill="#ffffff"/><rect x="8" y="1" width="1" height="1" fill="#000066"/><rect x="9" y="1" width="1" height="1" fill="#ffffff"/><rect x="10" y="1" width="1" height="1" fill="#000066"/><rect x="11" y="1" width="1" height="1" fill="#ffffff"/><rect x="12" y="1" width="3" height="1" fill="#000066"/><rect x="0" y="2" width="15" height="1" fill="#000066"/><rect x="0" y="3" width="1" height="1" fill="#000066"/><rect x="1" y="3" width="3" height="1" fill="#cc00cc"/><rect x="4" y="3" width="1" height="1" fill="#000066"/><rect x="0" y="4" width="1" height="1" fill="#000066"/><rect x="1" y="4" width="1" height="1" fill="#cc00cc"/><rect x="2" y="4" width="1" height="1" fill="#ffffff"/><rect x="3" y="4" width="1" height="1" fill="#cc00cc"/><rect x="4" y="4" width="1" height="1" fill="#000066"/><rect x="0" y="5" width="1" height="1" fill="#000066"/><rect x="1" y="5" width="1" height="1" fill="#ffffff"/><rect x="2" y="5" width="2" height="1" fill="#cc00cc"/><rect x="4" y="5" width="1" height="1" fill="#000066"/><rect x="6" y="5" width="9" height="1" fill="#000000"/><rect x="0" y="6" width="1" height="1" fill="#000066"/><rect x="1" y="6" width="1" height="1" fill="#cc00cc"/><rect x="2" y="6" width="1" height="1" fill="#ffffff"/><rect x="3" y="6" width="1" height="1" fill="#cc00cc"/><rect x="4" y="6" width="1" height="1" fill="#000066"/><rect x="6" y="6" width="1" height="1" fill="#000000"/><rect x="7" y="6" width="7" height="1" fill="#ffffff"/><rect x="14" y="6" width="1" height="1" fill="#000000"/><rect x="0" y="7" width="1" height="1" fill="#000066"/><rect x="1" y="7" width="2" height="1" fill="#cc00cc"/><rect x="3" y="7" width="1" height="1" fill="#ffffff"/><rect x="4" y="7" width="1" height="1" fill="#000066"/><rect x="6" y="7" width="1" height="1" fill="#000000"/><rect x="7" y="7" width="7" height="1" fill="#ffffff"/><rect x="14" y="7" width="1" height="1" fill="#000000"/><rect x="0" y="8" width="1" height="1" fill="#000066"/><rect x="1" y="8" width="1" height="1" fill="#cc00cc"/><rect x="2" y="8" width="1" height="1" fill="#ffffff"/><rect x="3" y="8" width="1" height="1" fill="#cc00cc"/><rect x="4" y="8" width="1" height="1" fill="#000066"/><rect x="6" y="8" width="1" height="1" fill="#000000"/><rect x="7" y="8" width="7" height="1" fill="#ffffff"/><rect x="14" y="8" width="1" height="1" fill="#000000"/><rect x="0" y="9" width="1" height="1" fill="#000066"/><rect x="1" y="9" width="3" height="1" fill="#cc00cc"/><rect x="4" y="9" width="1" height="1" fill="#000066"/><rect x="6" y="9" width="1" height="1" fill="#000000"/><rect x="7" y="9" width="7" height="1" fill="#ffffff"/><rect x="14" y="9" width="1" height="1" fill="#000000"/><rect x="0" y="10" width="5" height="1" fill="#000066"/><rect x="6" y="10" width="1" height="1" fill="#000000"/><rect x="7" y="10" width="7" height="1" fill="#ffffff"/><rect x="14" y="10" width="1" height="1" fill="#000000"/><rect x="6" y="11" width="1" height="1" fill="#000000"/><rect x="7" y="11" width="7" height="1" fill="#ffffff"/><rect x="14" y="11" width="1" height="1" fill="#000000"/><rect x="6" y="12" width="1" height="1" fill="#000000"/><rect x="7" y="12" width="7" height="1" fill="#ffffff"/><rect x="14" y="12" width="1" height="1" fill="#000000"/><rect x="6" y="13" width="9" height="1" fill="#000000"/></svg>
<svg style="left:623px;top:77px" width="16" height="15" viewBox="0 0 16 15" shape-rendering="crispEdges"><rect x="1" y="0" width="1" height="1" fill="#666666"/><rect x="13" y="0" width="1" height="1" fill="#666666"/><rect x="1" y="1" width="1" height="1" fill="#666666"/><rect x="13" y="1" width="1" height="1" fill="#666666"/><rect x="0" y="2" width="16" height="1" fill="#666666"/><rect x="1" y="3" width="1" height="1" fill="#666666"/><rect x="2" y="3" width="11" height="1" fill="#ffffff"/><rect x="13" y="3" width="1" height="1" fill="#666666"/><rect x="1" y="4" width="1" height="1" fill="#666666"/><rect x="2" y="4" width="11" height="1" fill="#ffffff"/><rect x="13" y="4" width="1" height="1" fill="#666666"/><rect x="1" y="5" width="1" height="1" fill="#666666"/><rect x="2" y="5" width="11" height="1" fill="#ffffff"/><rect x="13" y="5" width="1" height="1" fill="#666666"/><rect x="1" y="6" width="1" height="1" fill="#666666"/><rect x="2" y="6" width="11" height="1" fill="#ffffff"/><rect x="13" y="6" width="1" height="1" fill="#666666"/><rect x="1" y="7" width="1" height="1" fill="#666666"/><rect x="2" y="7" width="11" height="1" fill="#ffffff"/><rect x="13" y="7" width="1" height="1" fill="#666666"/><rect x="1" y="8" width="1" height="1" fill="#666666"/><rect x="2" y="8" width="11" height="1" fill="#ffffff"/><rect x="13" y="8" width="1" height="1" fill="#666666"/><rect x="1" y="9" width="1" height="1" fill="#666666"/><rect x="2" y="9" width="11" height="1" fill="#ffffff"/><rect x="13" y="9" width="1" height="1" fill="#666666"/><rect x="1" y="10" width="1" height="1" fill="#666666"/><rect x="2" y="10" width="11" height="1" fill="#ffffff"/><rect x="13" y="10" width="1" height="1" fill="#666666"/><rect x="1" y="11" width="1" height="1" fill="#666666"/><rect x="2" y="11" width="11" height="1" fill="#ffffff"/><rect x="13" y="11" width="1" height="1" fill="#666666"/><rect x="0" y="12" width="16" height="1" fill="#666666"/><rect x="1" y="13" width="1" height="1" fill="#666666"/><rect x="13" y="13" width="1" height="1" fill="#666666"/><rect x="1" y="14" width="1" height="1" fill="#666666"/><rect x="13" y="14" width="1" height="1" fill="#666666"/></svg>
<div style="left:626px;top:81px;width:4px;height:1px;background:#000000;"></div>
<div style="left:626px;top:83px;width:6px;height:1px;background:#000000;"></div>
<div style="left:633px;top:81px;width:1px;height:7px;background:#000066;"></div>
<div style="left:632px;top:82px;width:3px;height:1px;background:#000066;"></div>
<div style="left:632px;top:83px;width:3px;height:1px;background:#000066;"></div>
<svg style="left:646px;top:77px" width="16" height="15" viewBox="0 0 16 15" shape-rendering="crispEdges"><rect x="1" y="0" width="1" height="1" fill="#666666"/><rect x="13" y="0" width="1" height="1" fill="#666666"/><rect x="1" y="1" width="1" height="1" fill="#666666"/><rect x="13" y="1" width="1" height="1" fill="#666666"/><rect x="0" y="2" width="16" height="1" fill="#666666"/><rect x="1" y="3" width="1" height="1" fill="#666666"/><rect x="2" y="3" width="11" height="1" fill="#ffffff"/><rect x="13" y="3" width="1" height="1" fill="#666666"/><rect x="1" y="4" width="1" height="1" fill="#666666"/><rect x="2" y="4" width="11" height="1" fill="#ffffff"/><rect x="13" y="4" width="1" height="1" fill="#666666"/><rect x="1" y="5" width="1" height="1" fill="#666666"/><rect x="2" y="5" width="11" height="1" fill="#ffffff"/><rect x="13" y="5" width="1" height="1" fill="#666666"/><rect x="1" y="6" width="1" height="1" fill="#666666"/><rect x="2" y="6" width="11" height="1" fill="#ffffff"/><rect x="13" y="6" width="1" height="1" fill="#666666"/><rect x="1" y="7" width="1" height="1" fill="#666666"/><rect x="2" y="7" width="11" height="1" fill="#ffffff"/><rect x="13" y="7" width="1" height="1" fill="#666666"/><rect x="1" y="8" width="1" height="1" fill="#666666"/><rect x="2" y="8" width="11" height="1" fill="#ffffff"/><rect x="13" y="8" width="1" height="1" fill="#666666"/><rect x="1" y="9" width="1" height="1" fill="#666666"/><rect x="2" y="9" width="11" height="1" fill="#ffffff"/><rect x="13" y="9" width="1" height="1" fill="#666666"/><rect x="1" y="10" width="1" height="1" fill="#666666"/><rect x="2" y="10" width="11" height="1" fill="#ffffff"/><rect x="13" y="10" width="1" height="1" fill="#666666"/><rect x="1" y="11" width="1" height="1" fill="#666666"/><rect x="2" y="11" width="11" height="1" fill="#ffffff"/><rect x="13" y="11" width="1" height="1" fill="#666666"/><rect x="0" y="12" width="16" height="1" fill="#666666"/><rect x="1" y="13" width="1" height="1" fill="#666666"/><rect x="13" y="13" width="1" height="1" fill="#666666"/><rect x="1" y="14" width="1" height="1" fill="#666666"/><rect x="13" y="14" width="1" height="1" fill="#666666"/></svg>
<div style="left:649px;top:83px;width:4px;height:1px;background:#000000;"></div>
<div style="left:649px;top:85px;width:6px;height:1px;background:#000000;"></div>
<div style="left:656px;top:81px;width:1px;height:7px;background:#000066;"></div>
<div style="left:655px;top:82px;width:3px;height:1px;background:#000066;"></div>
<div style="left:655px;top:86px;width:3px;height:1px;background:#000066;"></div>
<svg style="left:670px;top:78px" width="16" height="15" viewBox="0 0 16 15" shape-rendering="crispEdges"><rect x="1" y="0" width="1" height="1" fill="#666666"/><rect x="13" y="0" width="1" height="1" fill="#666666"/><rect x="1" y="1" width="1" height="1" fill="#666666"/><rect x="13" y="1" width="1" height="1" fill="#666666"/><rect x="0" y="2" width="16" height="1" fill="#666666"/><rect x="1" y="3" width="1" height="1" fill="#666666"/><rect x="2" y="3" width="11" height="1" fill="#ffffff"/><rect x="13" y="3" width="1" height="1" fill="#666666"/><rect x="1" y="4" width="1" height="1" fill="#666666"/><rect x="2" y="4" width="11" height="1" fill="#ffffff"/><rect x="13" y="4" width="1" height="1" fill="#666666"/><rect x="1" y="5" width="1" height="1" fill="#666666"/><rect x="2" y="5" width="11" height="1" fill="#ffffff"/><rect x="13" y="5" width="1" height="1" fill="#666666"/><rect x="1" y="6" width="1" height="1" fill="#666666"/><rect x="2" y="6" width="11" height="1" fill="#ffffff"/><rect x="13" y="6" width="1" height="1" fill="#666666"/><rect x="1" y="7" width="1" height="1" fill="#666666"/><rect x="2" y="7" width="11" height="1" fill="#ffffff"/><rect x="13" y="7" width="1" height="1" fill="#666666"/><rect x="1" y="8" width="1" height="1" fill="#666666"/><rect x="2" y="8" width="11" height="1" fill="#ffffff"/><rect x="13" y="8" width="1" height="1" fill="#666666"/><rect x="1" y="9" width="1" height="1" fill="#666666"/><rect x="2" y="9" width="11" height="1" fill="#ffffff"/><rect x="13" y="9" width="1" height="1" fill="#666666"/><rect x="1" y="10" width="1" height="1" fill="#666666"/><rect x="2" y="10" width="11" height="1" fill="#ffffff"/><rect x="13" y="10" width="1" height="1" fill="#666666"/><rect x="1" y="11" width="1" height="1" fill="#666666"/><rect x="2" y="11" width="11" height="1" fill="#ffffff"/><rect x="13" y="11" width="1" height="1" fill="#666666"/><rect x="0" y="12" width="16" height="1" fill="#666666"/><rect x="1" y="13" width="1" height="1" fill="#666666"/><rect x="13" y="13" width="1" height="1" fill="#666666"/><rect x="1" y="14" width="1" height="1" fill="#666666"/><rect x="13" y="14" width="1" height="1" fill="#666666"/></svg>
<div style="left:673px;top:82px;width:4px;height:1px;background:#000000;"></div>
<div style="left:673px;top:84px;width:6px;height:1px;background:#000000;"></div>
<div style="left:680px;top:82px;width:1px;height:7px;background:#000066;"></div>
<div style="left:679px;top:87px;width:3px;height:1px;background:#000066;"></div>
<div style="left:679px;top:86px;width:3px;height:1px;background:#000066;"></div>
<svg style="left:146px;top:108px" width="15" height="9" viewBox="0 0 15 9" shape-rendering="crispEdges"><rect x="1" y="0" width="13" height="1" fill="#000000"/><rect x="0" y="1" width="1" height="1" fill="#000000"/><rect x="1" y="1" width="13" height="1" fill="#ffffff"/><rect x="14" y="1" width="1" height="1" fill="#000000"/><rect x="0" y="2" width="1" height="1" fill="#000000"/><rect x="1" y="2" width="1" height="1" fill="#ffffff"/><rect x="2" y="2" width="2" height="1" fill="#000000"/><rect x="4" y="2" width="1" height="1" fill="#ffffff"/><rect x="5" y="2" width="2" height="1" fill="#000000"/><rect x="7" y="2" width="1" height="1" fill="#ffffff"/><rect x="8" y="2" width="2" height="1" fill="#000000"/><rect x="10" y="2" width="1" height="1" fill="#ffffff"/><rect x="11" y="2" width="2" height="1" fill="#000000"/><rect x="13" y="2" width="1" height="1" fill="#ffffff"/><rect x="14" y="2" width="1" height="1" fill="#000000"/><rect x="0" y="3" width="1" height="1" fill="#000000"/><rect x="1" y="3" width="13" height="1" fill="#ffffff"/><rect x="14" y="3" width="1" height="1" fill="#000000"/><rect x="0" y="4" width="1" height="1" fill="#000000"/><rect x="1" y="4" width="1" height="1" fill="#ffffff"/><rect x="2" y="4" width="6" height="1" fill="#000000"/><rect x="8" y="4" width="1" height="1" fill="#ffffff"/><rect x="9" y="4" width="4" height="1" fill="#000000"/><rect x="13" y="4" width="1" height="1" fill="#ffffff"/><rect x="14" y="4" width="1" height="1" fill="#000000"/><rect x="0" y="5" width="1" height="1" fill="#000000"/><rect x="1" y="5" width="1" height="1" fill="#ffffff"/><rect x="2" y="5" width="6" height="1" fill="#000000"/><rect x="8" y="5" width="1" height="1" fill="#ffffff"/><rect x="9" y="5" width="4" height="1" fill="#000000"/><rect x="13" y="5" width="1" height="1" fill="#ffffff"/><rect x="14" y="5" width="1" height="1" fill="#000000"/><rect x="0" y="6" width="1" height="1" fill="#000000"/><rect x="1" y="6" width="13" height="1" fill="#ffffff"/><rect x="14" y="6" width="1" height="1" fill="#000000"/><rect x="0" y="7" width="15" height="1" fill="#000000"/><rect x="1" y="8" width="13" height="1" fill="#000000"/></svg>
<div style="left:171px;top:105px;font:bold 14px/16px 'Liberation Serif',serif;color:#000;transform:scaleX(1.15);transform-origin:0 0">Σ</div>
<div style="left:194px;top:110px;width:10px;height:1px;background:#000000;"></div>
<div style="left:194px;top:111px;width:10px;height:1px;background:#666666;"></div>
<div style="left:194px;top:114px;width:10px;height:1px;background:#000000;"></div>
<div style="left:194px;top:115px;width:10px;height:1px;background:#666666;"></div>
<svg style="left:12px;top:135px" width="15" height="14" viewBox="0 0 15 14" shape-rendering="crispEdges"><rect x="6" y="0" width="5" height="1" fill="#000000"/><rect x="5" y="1" width="1" height="1" fill="#000000"/><rect x="6" y="1" width="1" height="1" fill="#ffff99"/><rect x="7" y="1" width="1" height="1" fill="#ffffff"/><rect x="8" y="1" width="1" height="1" fill="#ffff99"/><rect x="9" y="1" width="1" height="1" fill="#ffffff"/><rect x="10" y="1" width="1" height="1" fill="#ffff99"/><rect x="11" y="1" width="1" height="1" fill="#000000"/><rect x="4" y="2" width="1" height="1" fill="#000000"/><rect x="5" y="2" width="1" height="1" fill="#ffffff"/><rect x="6" y="2" width="1" height="1" fill="#ffff99"/><rect x="7" y="2" width="1" height="1" fill="#ffffff"/><rect x="8" y="2" width="1" height="1" fill="#ffff99"/><rect x="9" y="2" width="1" height="1" fill="#ffffff"/><rect x="10" y="2" width="1" height="1" fill="#ffff99"/><rect x="11" y="2" width="1" height="1" fill="#000000"/><rect x="4" y="3" width="1" height="1" fill="#000000"/><rect x="5" y="3" width="1" height="1" fill="#ffff99"/><rect x="6" y="3" width="1" height="1" fill="#ffffff"/><rect x="7" y="3" width="1" height="1" fill="#ffff99"/><rect x="8" y="3" width="1" height="1" fill="#ffffff"/><rect x="9" y="3" width="1" height="1" fill="#ffff99"/><rect x="10" y="3" width="1" height="1" fill="#ffffff"/><rect x="11" y="3" width="1" height="1" fill="#000000"/><rect x="0" y="4" width="7" height="1" fill="#000000"/><rect x="7" y="4" width="1" height="1" fill="#ffff99"/><rect x="8" y="4" width="1" height="1" fill="#ffffff"/><rect x="9" y="4" width="1" height="1" fill="#ffff99"/><rect x="10" y="4" width="1" height="1" fill="#ffffff"/><rect x="11" y="4" width="1" height="1" fill="#000000"/><rect x="0" y="5" width="1" height="1" fill="#000000"/><rect x="1" y="5" width="1" height="1" fill="#660066"/><rect x="2" y="5" width="1" height="1" fill="#993399"/><rect x="3" y="5" width="1" height="1" fill="#660066"/><rect x="4" y="5" width="1" height="1" fill="#993399"/><rect x="5" y="5" width="1" height="1" fill="#660066"/><rect x="6" y="5" width="1" height="1" fill="#000000"/><rect x="7" y="5" width="1" height="1" fill="#ffffff"/><rect x="8" y="5" width="1" height="1" fill="#ffff99"/><rect x="9" y="5" width="1" height="1" fill="#ffffff"/><rect x="10" y="5" width="1" height="1" fill="#ffff99"/><rect x="11" y="5" width="1" height="1" fill="#000000"/><rect x="0" y="6" width="1" height="1" fill="#000000"/><rect x="1" y="6" width="1" height="1" fill="#993399"/><rect x="2" y="6" width="1" height="1" fill="#660066"/><rect x="3" y="6" width="1" height="1" fill="#993399"/><rect x="4" y="6" width="1" height="1" fill="#660066"/><rect x="5" y="6" width="1" height="1" fill="#993399"/><rect x="6" y="6" width="1" height="1" fill="#000000"/><rect x="7" y="6" width="1" height="1" fill="#ffff99"/><rect x="8" y="6" width="1" height="1" fill="#ffffff"/><rect x="9" y="6" width="1" height="1" fill="#ffff99"/><rect x="10" y="6" width="1" height="1" fill="#000000"/><rect x="0" y="7" width="1" height="1" fill="#000000"/><rect x="1" y="7" width="1" height="1" fill="#660066"/><rect x="2" y="7" width="1" height="1" fill="#993399"/><rect x="3" y="7" width="1" height="1" fill="#660066"/><rect x="4" y="7" width="1" height="1" fill="#993399"/><rect x="5" y="7" width="1" height="1" fill="#660066"/><rect x="6" y="7" width="4" height="1" fill="#000000"/><rect x="0" y="8" width="1" height="1" fill="#000000"/><rect x="1" y="8" width="1" height="1" fill="#993399"/><rect x="2" y="8" width="1" height="1" fill="#660066"/><rect x="3" y="8" width="1" height="1" fill="#993399"/><rect x="4" y="8" width="1" height="1" fill="#660066"/><rect x="5" y="8" width="1" height="1" fill="#993399"/><rect x="6" y="8" width="1" height="1" fill="#000000"/><rect x="7" y="8" width="1" height="1" fill="#00ffff"/><rect x="0" y="9" width="1" height="1" fill="#000000"/><rect x="1" y="9" width="1" height="1" fill="#660066"/><rect x="2" y="9" width="1" height="1" fill="#993399"/><rect x="3" y="9" width="1" height="1" fill="#660066"/><rect x="4" y="9" width="1" height="1" fill="#993399"/><rect x="5" y="9" width="1" height="1" fill="#660066"/><rect x="6" y="9" width="1" height="1" fill="#000000"/><rect x="7" y="9" width="1" height="1" fill="#ffffff"/><rect x="8" y="9" width="1" height="1" fill="#00ffff"/><rect x="0" y="10" width="7" height="1" fill="#000000"/><rect x="7" y="10" width="1" height="1" fill="#00ffff"/><rect x="8" y="10" width="1" height="1" fill="#ffffff"/><rect x="9" y="10" width="1" height="1" fill="#00ffff"/><rect x="3" y="11" width="1" height="1" fill="#00ffff"/><rect x="4" y="11" width="1" height="1" fill="#ffffff"/><rect x="5" y="11" width="1" height="1" fill="#00ffff"/><rect x="6" y="11" width="1" height="1" fill="#ffffff"/><rect x="7" y="11" width="1" height="1" fill="#00ffff"/><rect x="8" y="11" width="1" height="1" fill="#ffffff"/><rect x="9" y="11" width="1" height="1" fill="#00ffff"/><rect x="10" y="11" width="1" height="1" fill="#ffffff"/><rect x="2" y="12" width="1" height="1" fill="#00ffff"/><rect x="3" y="12" width="1" height="1" fill="#ffffff"/><rect x="4" y="12" width="1" height="1" fill="#00ffff"/><rect x="5" y="12" width="1" height="1" fill="#ffffff"/><rect x="6" y="12" width="1" height="1" fill="#00ffff"/><rect x="7" y="12" width="1" height="1" fill="#ffffff"/><rect x="8" y="12" width="1" height="1" fill="#00ffff"/><rect x="9" y="12" width="1" height="1" fill="#ffffff"/><rect x="10" y="12" width="1" height="1" fill="#00ffff"/><rect x="11" y="12" width="1" height="1" fill="#ffffff"/><rect x="1" y="13" width="12" height="1" fill="#000000"/></svg>
<svg style="left:23px;top:134px" width="4" height="7" viewBox="0 0 4 7" shape-rendering="crispEdges"><rect x="0" y="0" width="1" height="1" fill="#000000"/><rect x="0" y="1" width="1" height="1" fill="#000000"/><rect x="1" y="1" width="1" height="1" fill="#00cc00"/><rect x="0" y="2" width="1" height="1" fill="#000000"/><rect x="1" y="2" width="2" height="1" fill="#00cc00"/><rect x="0" y="3" width="1" height="1" fill="#000000"/><rect x="1" y="3" width="3" height="1" fill="#00cc00"/><rect x="0" y="4" width="1" height="1" fill="#000000"/><rect x="1" y="4" width="2" height="1" fill="#00cc00"/><rect x="0" y="5" width="1" height="1" fill="#000000"/><rect x="1" y="5" width="1" height="1" fill="#00cc00"/><rect x="0" y="6" width="1" height="1" fill="#000000"/></svg>
<svg style="left:12px;top:158px" width="15" height="13" viewBox="0 0 15 13" shape-rendering="crispEdges"><rect x="0" y="0" width="15" height="1" fill="#000000"/><rect x="0" y="1" width="1" height="1" fill="#000000"/><rect x="1" y="1" width="4" height="1" fill="#ffffff"/><rect x="5" y="1" width="1" height="1" fill="#000000"/><rect x="6" y="1" width="4" height="1" fill="#ffffff"/><rect x="10" y="1" width="1" height="1" fill="#000000"/><rect x="11" y="1" width="3" height="1" fill="#ffffff"/><rect x="14" y="1" width="1" height="1" fill="#000000"/><rect x="0" y="2" width="1" height="1" fill="#000000"/><rect x="1" y="2" width="4" height="1" fill="#ffffff"/><rect x="5" y="2" width="1" height="1" fill="#000000"/><rect x="6" y="2" width="4" height="1" fill="#ffffff"/><rect x="10" y="2" width="1" height="1" fill="#000000"/><rect x="11" y="2" width="3" height="1" fill="#ffffff"/><rect x="14" y="2" width="1" height="1" fill="#000000"/><rect x="0" y="3" width="1" height="1" fill="#000000"/><rect x="1" y="3" width="2" height="1" fill="#ffffff"/><rect x="3" y="3" width="8" height="1" fill="#000066"/><rect x="11" y="3" width="3" height="1" fill="#ffffff"/><rect x="14" y="3" width="1" height="1" fill="#000000"/><rect x="0" y="4" width="3" height="1" fill="#000000"/><rect x="3" y="4" width="1" height="1" fill="#000066"/><rect x="4" y="4" width="1" height="1" fill="#ffff99"/><rect x="5" y="4" width="1" height="1" fill="#ffffff"/><rect x="6" y="4" width="1" height="1" fill="#ffff99"/><rect x="7" y="4" width="1" height="1" fill="#ffffff"/><rect x="8" y="4" width="1" height="1" fill="#ffff99"/><rect x="9" y="4" width="1" height="1" fill="#ffffff"/><rect x="10" y="4" width="1" height="1" fill="#000066"/><rect x="11" y="4" width="4" height="1" fill="#000000"/><rect x="0" y="5" width="1" height="1" fill="#000000"/><rect x="1" y="5" width="2" height="1" fill="#ffffff"/><rect x="3" y="5" width="1" height="1" fill="#000066"/><rect x="4" y="5" width="1" height="1" fill="#ffffff"/><rect x="5" y="5" width="1" height="1" fill="#ffff99"/><rect x="6" y="5" width="1" height="1" fill="#ffffff"/><rect x="7" y="5" width="1" height="1" fill="#ffff99"/><rect x="8" y="5" width="1" height="1" fill="#ffffff"/><rect x="9" y="5" width="1" height="1" fill="#ffff99"/><rect x="10" y="5" width="1" height="1" fill="#000066"/><rect x="11" y="5" width="3" height="1" fill="#ffffff"/><rect x="14" y="5" width="1" height="1" fill="#000000"/><rect x="0" y="6" width="1" height="1" fill="#000000"/><rect x="1" y="6" width="2" height="1" fill="#ffffff"/><rect x="3" y="6" width="1" height="1" fill="#000066"/><rect x="4" y="6" width="1" height="1" fill="#ffff99"/><rect x="5" y="6" width="1" height="1" fill="#ffffff"/><rect x="6" y="6" width="1" height="1" fill="#ffff99"/><rect x="7" y="6" width="1" height="1" fill="#ffffff"/><rect x="8" y="6" width="1" height="1" fill="#ffff99"/><rect x="9" y="6" width="1" height="1" fill="#ffffff"/><rect x="10" y="6" width="1" height="1" fill="#000066"/><rect x="11" y="6" width="3" height="1" fill="#ffffff"/><rect x="14" y="6" width="1" height="1" fill="#000000"/><rect x="0" y="7" width="1" height="1" fill="#000000"/><rect x="1" y="7" width="2" height="1" fill="#ffffff"/><rect x="3" y="7" width="1" height="1" fill="#000066"/><rect x="4" y="7" width="1" height="1" fill="#ffffff"/><rect x="5" y="7" width="1" height="1" fill="#ffff99"/><rect x="6" y="7" width="1" height="1" fill="#ffffff"/><rect x="7" y="7" width="1" height="1" fill="#ffff99"/><rect x="8" y="7" width="1" height="1" fill="#ffffff"/><rect x="9" y="7" width="1" height="1" fill="#ffff99"/><rect x="10" y="7" width="1" height="1" fill="#000066"/><rect x="11" y="7" width="3" height="1" fill="#ffffff"/><rect x="14" y="7" width="1" height="1" fill="#000000"/><rect x="0" y="8" width="3" height="1" fill="#000000"/><rect x="3" y="8" width="8" height="1" fill="#000066"/><rect x="11" y="8" width="4" height="1" fill="#000000"/><rect x="0" y="9" width="1" height="1" fill="#000000"/><rect x="1" y="9" width="4" height="1" fill="#ffffff"/><rect x="5" y="9" width="1" height="1" fill="#000000"/><rect x="6" y="9" width="4" height="1" fill="#ffffff"/><rect x="10" y="9" width="1" height="1" fill="#000000"/><rect x="11" y="9" width="3" height="1" fill="#ffffff"/><rect x="14" y="9" width="1" height="1" fill="#000000"/><rect x="0" y="10" width="1" height="1" fill="#000000"/><rect x="1" y="10" width="4" height="1" fill="#ffffff"/><rect x="5" y="10" width="1" height="1" fill="#000000"/><rect x="6" y="10" width="4" height="1" fill="#ffffff"/><rect x="10" y="10" width="1" height="1" fill="#000000"/><rect x="11" y="10" width="3" height="1" fill="#ffffff"/><rect x="14" y="10" width="1" height="1" fill="#000000"/><rect x="0" y="11" width="1" height="1" fill="#000000"/><rect x="1" y="11" width="4" height="1" fill="#ffffff"/><rect x="5" y="11" width="1" height="1" fill="#000000"/><rect x="6" y="11" width="4" height="1" fill="#ffffff"/><rect x="10" y="11" width="1" height="1" fill="#000000"/><rect x="11" y="11" width="3" height="1" fill="#ffffff"/><rect x="14" y="11" width="1" height="1" fill="#000000"/><rect x="0" y="12" width="15" height="1" fill="#000000"/></svg>
<div style="left:22px;top:157px;width:5px;height:7px;background:#999999;"></div>
<svg style="left:23px;top:157px" width="4" height="7" viewBox="0 0 4 7" shape-rendering="crispEdges"><rect x="0" y="0" width="1" height="1" fill="#000000"/><rect x="0" y="1" width="1" height="1" fill="#000000"/><rect x="1" y="1" width="1" height="1" fill="#00cc00"/><rect x="0" y="2" width="1" height="1" fill="#000000"/><rect x="1" y="2" width="2" height="1" fill="#00cc00"/><rect x="0" y="3" width="1" height="1" fill="#000000"/><rect x="1" y="3" width="3" height="1" fill="#00cc00"/><rect x="0" y="4" width="1" height="1" fill="#000000"/><rect x="1" y="4" width="2" height="1" fill="#00cc00"/><rect x="0" y="5" width="1" height="1" fill="#000000"/><rect x="1" y="5" width="1" height="1" fill="#00cc00"/><rect x="0" y="6" width="1" height="1" fill="#000000"/></svg>
<svg style="left:11px;top:182px" width="13" height="12" viewBox="0 0 13 12" shape-rendering="crispEdges"><rect x="4" y="0" width="5" height="1" fill="#000000"/><rect x="2" y="1" width="2" height="1" fill="#000000"/><rect x="4" y="1" width="1" height="1" fill="#ffff99"/><rect x="5" y="1" width="1" height="1" fill="#ffffff"/><rect x="6" y="1" width="1" height="1" fill="#ffff99"/><rect x="7" y="1" width="1" height="1" fill="#000000"/><rect x="8" y="1" width="1" height="1" fill="#00ffff"/><rect x="9" y="1" width="2" height="1" fill="#000000"/><rect x="1" y="2" width="1" height="1" fill="#000000"/><rect x="2" y="2" width="1" height="1" fill="#ffff99"/><rect x="3" y="2" width="1" height="1" fill="#ffffff"/><rect x="4" y="2" width="1" height="1" fill="#ffff99"/><rect x="5" y="2" width="1" height="1" fill="#ffffff"/><rect x="6" y="2" width="1" height="1" fill="#ffff99"/><rect x="7" y="2" width="1" height="1" fill="#000000"/><rect x="8" y="2" width="1" height="1" fill="#ffffff"/><rect x="9" y="2" width="1" height="1" fill="#00ffff"/><rect x="10" y="2" width="1" height="1" fill="#ffffff"/><rect x="11" y="2" width="1" height="1" fill="#000000"/><rect x="1" y="3" width="1" height="1" fill="#000000"/><rect x="2" y="3" width="1" height="1" fill="#ffffff"/><rect x="3" y="3" width="1" height="1" fill="#ffff99"/><rect x="4" y="3" width="1" height="1" fill="#ffffff"/><rect x="5" y="3" width="1" height="1" fill="#ffff99"/><rect x="6" y="3" width="1" height="1" fill="#ffffff"/><rect x="7" y="3" width="1" height="1" fill="#000000"/><rect x="8" y="3" width="1" height="1" fill="#00ffff"/><rect x="9" y="3" width="1" height="1" fill="#ffffff"/><rect x="10" y="3" width="1" height="1" fill="#00ffff"/><rect x="11" y="3" width="1" height="1" fill="#000000"/><rect x="0" y="4" width="1" height="1" fill="#000000"/><rect x="1" y="4" width="1" height="1" fill="#ffffff"/><rect x="2" y="4" width="1" height="1" fill="#ffff99"/><rect x="3" y="4" width="1" height="1" fill="#ffffff"/><rect x="4" y="4" width="1" height="1" fill="#ffff99"/><rect x="5" y="4" width="1" height="1" fill="#ffffff"/><rect x="6" y="4" width="1" height="1" fill="#ffff99"/><rect x="7" y="4" width="1" height="1" fill="#000000"/><rect x="8" y="4" width="1" height="1" fill="#ffffff"/><rect x="9" y="4" width="1" height="1" fill="#00ffff"/><rect x="10" y="4" width="1" height="1" fill="#ffffff"/><rect x="11" y="4" width="1" height="1" fill="#00ffff"/><rect x="12" y="4" width="1" height="1" fill="#000000"/><rect x="0" y="5" width="1" height="1" fill="#000000"/><rect x="1" y="5" width="1" height="1" fill="#ffff99"/><rect x="2" y="5" width="1" height="1" fill="#ffffff"/><rect x="3" y="5" width="1" height="1" fill="#ffff99"/><rect x="4" y="5" width="1" height="1" fill="#ffffff"/><rect x="5" y="5" width="1" height="1" fill="#ffff99"/><rect x="6" y="5" width="1" height="1" fill="#ffffff"/><rect x="7" y="5" width="6" height="1" fill="#000000"/><rect x="0" y="6" width="1" height="1" fill="#000000"/><rect x="1" y="6" width="1" height="1" fill="#ffffff"/><rect x="2" y="6" width="1" height="1" fill="#ffff99"/><rect x="3" y="6" width="1" height="1" fill="#ffffff"/><rect x="4" y="6" width="1" height="1" fill="#ffff99"/><rect x="5" y="6" width="1" height="1" fill="#ffffff"/><rect x="6" y="6" width="1" height="1" fill="#000000"/><rect x="7" y="6" width="1" height="1" fill="#660066"/><rect x="8" y="6" width="1" height="1" fill="#993399"/><rect x="9" y="6" width="1" height="1" fill="#660066"/><rect x="10" y="6" width="1" height="1" fill="#993399"/><rect x="11" y="6" width="1" height="1" fill="#660066"/><rect x="12" y="6" width="1" height="1" fill="#000000"/><rect x="0" y="7" width="1" height="1" fill="#000000"/><rect x="1" y="7" width="1" height="1" fill="#ffff99"/><rect x="2" y="7" width="1" height="1" fill="#ffffff"/><rect x="3" y="7" width="1" height="1" fill="#ffff99"/><rect x="4" y="7" width="1" height="1" fill="#ffffff"/><rect x="5" y="7" width="1" height="1" fill="#000000"/><rect x="6" y="7" width="1" height="1" fill="#993399"/><rect x="7" y="7" width="1" height="1" fill="#660066"/><rect x="8" y="7" width="1" height="1" fill="#993399"/><rect x="9" y="7" width="1" height="1" fill="#660066"/><rect x="10" y="7" width="1" height="1" fill="#993399"/><rect x="11" y="7" width="1" height="1" fill="#660066"/><rect x="12" y="7" width="1" height="1" fill="#000000"/><rect x="1" y="8" width="1" height="1" fill="#000000"/><rect x="2" y="8" width="1" height="1" fill="#ffff99"/><rect x="3" y="8" width="1" height="1" fill="#ffffff"/><rect x="4" y="8" width="1" height="1" fill="#000000"/><rect x="5" y="8" width="1" height="1" fill="#660066"/><rect x="6" y="8" width="1" height="1" fill="#993399"/><rect x="7" y="8" width="1" height="1" fill="#660066"/><rect x="8" y="8" width="1" height="1" fill="#993399"/><rect x="9" y="8" width="1" height="1" fill="#660066"/><rect x="10" y="8" width="1" height="1" fill="#993399"/><rect x="11" y="8" width="1" height="1" fill="#000000"/><rect x="1" y="9" width="1" height="1" fill="#000000"/><rect x="2" y="9" width="1" height="1" fill="#ffffff"/><rect x="3" y="9" width="1" height="1" fill="#000000"/><rect x="4" y="9" width="1" height="1" fill="#993399"/><rect x="5" y="9" width="1" height="1" fill="#660066"/><rect x="6" y="9" width="1" height="1" fill="#993399"/><rect x="7" y="9" width="1" height="1" fill="#660066"/><rect x="8" y="9" width="1" height="1" fill="#993399"/><rect x="9" y="9" width="1" height="1" fill="#660066"/><rect x="10" y="9" width="1" height="1" fill="#993399"/><rect x="11" y="9" width="1" height="1" fill="#000000"/><rect x="2" y="10" width="2" height="1" fill="#000000"/><rect x="4" y="10" width="1" height="1" fill="#660066"/><rect x="5" y="10" width="1" height="1" fill="#993399"/><rect x="6" y="10" width="1" height="1" fill="#660066"/><rect x="7" y="10" width="1" height="1" fill="#993399"/><rect x="8" y="10" width="1" height="1" fill="#660066"/><rect x="9" y="10" width="2" height="1" fill="#000000"/><rect x="4" y="11" width="5" height="1" fill="#000000"/></svg>
<svg style="left:23px;top:179px" width="4" height="7" viewBox="0 0 4 7" shape-rendering="crispEdges"><rect x="0" y="0" width="1" height="1" fill="#000000"/><rect x="0" y="1" width="1" height="1" fill="#000000"/><rect x="1" y="1" width="1" height="1" fill="#00cc00"/><rect x="0" y="2" width="1" height="1" fill="#000000"/><rect x="1" y="2" width="2" height="1" fill="#00cc00"/><rect x="0" y="3" width="1" height="1" fill="#000000"/><rect x="1" y="3" width="3" height="1" fill="#00cc00"/><rect x="0" y="4" width="1" height="1" fill="#000000"/><rect x="1" y="4" width="2" height="1" fill="#00cc00"/><rect x="0" y="5" width="1" height="1" fill="#000000"/><rect x="1" y="5" width="1" height="1" fill="#00cc00"/><rect x="0" y="6" width="1" height="1" fill="#000000"/></svg>
<svg style="left:12px;top:205px" width="15" height="10" viewBox="0 0 15 10" shape-rendering="crispEdges"><rect x="11" y="0" width="2" height="1" fill="#000066"/><rect x="10" y="1" width="3" height="1" fill="#000066"/><rect x="0" y="2" width="8" height="1" fill="#000000"/><rect x="9" y="2" width="3" height="1" fill="#000066"/><rect x="0" y="3" width="1" height="1" fill="#000000"/><rect x="1" y="3" width="6" height="1" fill="#ffffff"/><rect x="8" y="3" width="3" height="1" fill="#000066"/><rect x="0" y="4" width="1" height="1" fill="#000000"/><rect x="1" y="4" width="5" height="1" fill="#ffffff"/><rect x="7" y="4" width="3" height="1" fill="#000066"/><rect x="0" y="5" width="1" height="1" fill="#000000"/><rect x="1" y="5" width="4" height="1" fill="#ffffff"/><rect x="6" y="5" width="3" height="1" fill="#000066"/><rect x="0" y="6" width="1" height="1" fill="#000000"/><rect x="1" y="6" width="4" height="1" fill="#ffffff"/><rect x="5" y="6" width="1" height="1" fill="#0000ff"/><rect x="6" y="6" width="2" height="1" fill="#000066"/><rect x="0" y="7" width="1" height="1" fill="#000000"/><rect x="1" y="7" width="3" height="1" fill="#ffffff"/><rect x="4" y="7" width="2" height="1" fill="#0000ff"/><rect x="6" y="7" width="1" height="1" fill="#000066"/><rect x="0" y="8" width="1" height="1" fill="#000000"/><rect x="1" y="8" width="2" height="1" fill="#ffffff"/><rect x="3" y="8" width="2" height="1" fill="#0000ff"/><rect x="0" y="9" width="6" height="1" fill="#000000"/></svg>
<svg style="left:23px;top:201px" width="4" height="7" viewBox="0 0 4 7" shape-rendering="crispEdges"><rect x="0" y="0" width="1" height="1" fill="#000000"/><rect x="0" y="1" width="1" height="1" fill="#000000"/><rect x="1" y="1" width="1" height="1" fill="#00cc00"/><rect x="0" y="2" width="1" height="1" fill="#000000"/><rect x="1" y="2" width="2" height="1" fill="#00cc00"/><rect x="0" y="3" width="1" height="1" fill="#000000"/><rect x="1" y="3" width="3" height="1" fill="#00cc00"/><rect x="0" y="4" width="1" height="1" fill="#000000"/><rect x="1" y="4" width="2" height="1" fill="#00cc00"/><rect x="0" y="5" width="1" height="1" fill="#000000"/><rect x="1" y="5" width="1" height="1" fill="#00cc00"/><rect x="0" y="6" width="1" height="1" fill="#000000"/></svg>
<svg style="left:13px;top:224px" width="12" height="13" viewBox="0 0 12 13" shape-rendering="crispEdges"><rect x="0" y="0" width="12" height="1" fill="#000000"/><rect x="0" y="1" width="1" height="1" fill="#000000"/><rect x="1" y="1" width="10" height="1" fill="#000066"/><rect x="11" y="1" width="1" height="1" fill="#000000"/><rect x="0" y="2" width="1" height="1" fill="#000000"/><rect x="1" y="2" width="10" height="1" fill="#000066"/><rect x="11" y="2" width="1" height="1" fill="#000000"/><rect x="0" y="3" width="1" height="1" fill="#000000"/><rect x="1" y="3" width="10" height="1" fill="#999999"/><rect x="11" y="3" width="1" height="1" fill="#000000"/><rect x="0" y="4" width="1" height="1" fill="#000000"/><rect x="1" y="4" width="1" height="1" fill="#999999"/><rect x="2" y="4" width="3" height="1" fill="#000000"/><rect x="5" y="4" width="1" height="1" fill="#999999"/><rect x="6" y="4" width="4" height="1" fill="#ffffff"/><rect x="10" y="4" width="1" height="1" fill="#999999"/><rect x="11" y="4" width="1" height="1" fill="#000000"/><rect x="0" y="5" width="1" height="1" fill="#000000"/><rect x="1" y="5" width="4" height="1" fill="#999999"/><rect x="5" y="5" width="4" height="1" fill="#000000"/><rect x="9" y="5" width="1" height="1" fill="#ffffff"/><rect x="10" y="5" width="1" height="1" fill="#999999"/><rect x="11" y="5" width="1" height="1" fill="#000000"/><rect x="0" y="6" width="1" height="1" fill="#000000"/><rect x="1" y="6" width="1" height="1" fill="#999999"/><rect x="2" y="6" width="3" height="1" fill="#000000"/><rect x="5" y="6" width="6" height="1" fill="#999999"/><rect x="11" y="6" width="1" height="1" fill="#000000"/><rect x="0" y="7" width="1" height="1" fill="#000000"/><rect x="1" y="7" width="10" height="1" fill="#999999"/><rect x="11" y="7" width="1" height="1" fill="#000000"/><rect x="0" y="8" width="1" height="1" fill="#000000"/><rect x="1" y="8" width="1" height="1" fill="#999999"/><rect x="2" y="8" width="8" height="1" fill="#000000"/><rect x="10" y="8" width="1" height="1" fill="#999999"/><rect x="11" y="8" width="1" height="1" fill="#000000"/><rect x="0" y="9" width="1" height="1" fill="#000000"/><rect x="1" y="9" width="10" height="1" fill="#999999"/><rect x="11" y="9" width="1" height="1" fill="#000000"/><rect x="0" y="10" width="1" height="1" fill="#000000"/><rect x="1" y="10" width="1" height="1" fill="#999999"/><rect x="2" y="10" width="8" height="1" fill="#000000"/><rect x="10" y="10" width="1" height="1" fill="#999999"/><rect x="11" y="10" width="1" height="1" fill="#000000"/><rect x="0" y="11" width="1" height="1" fill="#000000"/><rect x="1" y="11" width="10" height="1" fill="#999999"/><rect x="11" y="11" width="1" height="1" fill="#000000"/><rect x="0" y="12" width="12" height="1" fill="#000000"/></svg>
<div style="left:22px;top:223px;width:5px;height:7px;background:#999999;"></div>
<svg style="left:23px;top:223px" width="4" height="7" viewBox="0 0 4 7" shape-rendering="crispEdges"><rect x="0" y="0" width="1" height="1" fill="#000000"/><rect x="0" y="1" width="1" height="1" fill="#000000"/><rect x="1" y="1" width="1" height="1" fill="#00cc00"/><rect x="0" y="2" width="1" height="1" fill="#000000"/><rect x="1" y="2" width="2" height="1" fill="#00cc00"/><rect x="0" y="3" width="1" height="1" fill="#000000"/><rect x="1" y="3" width="3" height="1" fill="#00cc00"/><rect x="0" y="4" width="1" height="1" fill="#000000"/><rect x="1" y="4" width="2" height="1" fill="#00cc00"/><rect x="0" y="5" width="1" height="1" fill="#000000"/><rect x="1" y="5" width="1" height="1" fill="#00cc00"/><rect x="0" y="6" width="1" height="1" fill="#000000"/></svg>
<svg style="left:11px;top:253px" width="18" height="15" viewBox="0 0 18 15" shape-rendering="crispEdges"><rect x="13" y="0" width="1" height="1" fill="#666666"/><rect x="0" y="1" width="10" height="1" fill="#666666"/><rect x="13" y="1" width="1" height="1" fill="#666666"/><rect x="0" y="2" width="1" height="1" fill="#666666"/><rect x="1" y="2" width="1" height="1" fill="#ffffff"/><rect x="2" y="2" width="1" height="1" fill="#666666"/><rect x="3" y="2" width="2" height="1" fill="#ffffff"/><rect x="5" y="2" width="1" height="1" fill="#666666"/><rect x="6" y="2" width="2" height="1" fill="#ffffff"/><rect x="8" y="2" width="2" height="1" fill="#666666"/><rect x="13" y="2" width="1" height="1" fill="#666666"/><rect x="0" y="3" width="10" height="1" fill="#666666"/><rect x="11" y="3" width="7" height="1" fill="#666666"/><rect x="0" y="4" width="1" height="1" fill="#666666"/><rect x="1" y="4" width="2" height="1" fill="#ffffff"/><rect x="3" y="4" width="1" height="1" fill="#666666"/><rect x="4" y="4" width="2" height="1" fill="#ffffff"/><rect x="6" y="4" width="1" height="1" fill="#666666"/><rect x="7" y="4" width="1" height="1" fill="#ffffff"/><rect x="8" y="4" width="1" height="1" fill="#666666"/><rect x="9" y="4" width="1" height="1" fill="#ffffff"/><rect x="13" y="4" width="1" height="1" fill="#666666"/><rect x="14" y="4" width="4" height="1" fill="#ffffff"/><rect x="0" y="5" width="10" height="1" fill="#666666"/><rect x="10" y="5" width="1" height="1" fill="#ffffff"/><rect x="13" y="5" width="1" height="1" fill="#666666"/><rect x="14" y="5" width="1" height="1" fill="#ffffff"/><rect x="0" y="6" width="1" height="1" fill="#666666"/><rect x="1" y="6" width="1" height="1" fill="#ffffff"/><rect x="2" y="6" width="1" height="1" fill="#666666"/><rect x="3" y="6" width="2" height="1" fill="#ffffff"/><rect x="5" y="6" width="1" height="1" fill="#666666"/><rect x="6" y="6" width="2" height="1" fill="#ffffff"/><rect x="8" y="6" width="2" height="1" fill="#666666"/><rect x="10" y="6" width="1" height="1" fill="#ffffff"/><rect x="13" y="6" width="1" height="1" fill="#666666"/><rect x="14" y="6" width="1" height="1" fill="#ffffff"/><rect x="0" y="7" width="10" height="1" fill="#666666"/><rect x="10" y="7" width="1" height="1" fill="#ffffff"/><rect x="14" y="7" width="1" height="1" fill="#ffffff"/><rect x="0" y="8" width="1" height="1" fill="#666666"/><rect x="1" y="8" width="2" height="1" fill="#ffffff"/><rect x="3" y="8" width="1" height="1" fill="#666666"/><rect x="4" y="8" width="2" height="1" fill="#ffffff"/><rect x="6" y="8" width="1" height="1" fill="#666666"/><rect x="7" y="8" width="1" height="1" fill="#ffffff"/><rect x="8" y="8" width="2" height="1" fill="#666666"/><rect x="10" y="8" width="1" height="1" fill="#ffffff"/><rect x="0" y="9" width="10" height="1" fill="#666666"/><rect x="10" y="9" width="1" height="1" fill="#ffffff"/><rect x="0" y="10" width="1" height="1" fill="#666666"/><rect x="1" y="10" width="1" height="1" fill="#ffffff"/><rect x="2" y="10" width="1" height="1" fill="#666666"/><rect x="3" y="10" width="2" height="1" fill="#ffffff"/><rect x="5" y="10" width="1" height="1" fill="#666666"/><rect x="6" y="10" width="2" height="1" fill="#ffffff"/><rect x="8" y="10" width="2" height="1" fill="#666666"/><rect x="10" y="10" width="1" height="1" fill="#ffffff"/><rect x="0" y="11" width="10" height="1" fill="#666666"/><rect x="10" y="11" width="1" height="1" fill="#ffffff"/><rect x="0" y="12" width="1" height="1" fill="#666666"/><rect x="1" y="12" width="2" height="1" fill="#ffffff"/><rect x="3" y="12" width="1" height="1" fill="#666666"/><rect x="4" y="12" width="2" height="1" fill="#ffffff"/><rect x="6" y="12" width="1" height="1" fill="#666666"/><rect x="7" y="12" width="1" height="1" fill="#ffffff"/><rect x="8" y="12" width="2" height="1" fill="#666666"/><rect x="10" y="12" width="1" height="1" fill="#ffffff"/><rect x="0" y="13" width="10" height="1" fill="#666666"/><rect x="10" y="13" width="1" height="1" fill="#ffffff"/><rect x="1" y="14" width="10" height="1" fill="#ffffff"/></svg>
<svg style="left:11px;top:275px" width="16" height="14" viewBox="0 0 16 14" shape-rendering="crispEdges"><rect x="9" y="0" width="1" height="1" fill="#000000"/><rect x="8" y="1" width="3" height="1" fill="#000000"/><rect x="0" y="2" width="8" height="1" fill="#000066"/><rect x="8" y="2" width="1" height="1" fill="#000000"/><rect x="9" y="2" width="1" height="1" fill="#666666"/><rect x="10" y="2" width="2" height="1" fill="#000000"/><rect x="0" y="3" width="1" height="1" fill="#000066"/><rect x="1" y="3" width="6" height="1" fill="#ffffff"/><rect x="7" y="3" width="1" height="1" fill="#000000"/><rect x="8" y="3" width="2" height="1" fill="#666666"/><rect x="10" y="3" width="1" height="1" fill="#ffffff"/><rect x="11" y="3" width="2" height="1" fill="#000000"/><rect x="0" y="4" width="1" height="1" fill="#000066"/><rect x="1" y="4" width="1" height="1" fill="#ffffff"/><rect x="2" y="4" width="3" height="1" fill="#0000ff"/><rect x="5" y="4" width="1" height="1" fill="#ffffff"/><rect x="6" y="4" width="1" height="1" fill="#000000"/><rect x="7" y="4" width="2" height="1" fill="#666666"/><rect x="9" y="4" width="2" height="1" fill="#ffffff"/><rect x="11" y="4" width="1" height="1" fill="#666666"/><rect x="12" y="4" width="2" height="1" fill="#000000"/><rect x="0" y="5" width="1" height="1" fill="#000066"/><rect x="1" y="5" width="1" height="1" fill="#ffffff"/><rect x="2" y="5" width="1" height="1" fill="#0000ff"/><rect x="3" y="5" width="2" height="1" fill="#ffffff"/><rect x="5" y="5" width="1" height="1" fill="#000000"/><rect x="6" y="5" width="1" height="1" fill="#660000"/><rect x="7" y="5" width="1" height="1" fill="#666666"/><rect x="8" y="5" width="2" height="1" fill="#ffffff"/><rect x="10" y="5" width="2" height="1" fill="#666666"/><rect x="12" y="5" width="2" height="1" fill="#000000"/><rect x="0" y="6" width="1" height="1" fill="#000066"/><rect x="1" y="6" width="1" height="1" fill="#ffffff"/><rect x="2" y="6" width="1" height="1" fill="#0000ff"/><rect x="3" y="6" width="3" height="1" fill="#ffffff"/><rect x="6" y="6" width="1" height="1" fill="#000000"/><rect x="7" y="6" width="1" height="1" fill="#660000"/><rect x="8" y="6" width="1" height="1" fill="#ffffff"/><rect x="9" y="6" width="2" height="1" fill="#666666"/><rect x="11" y="6" width="2" height="1" fill="#000000"/><rect x="0" y="7" width="1" height="1" fill="#000066"/><rect x="1" y="7" width="1" height="1" fill="#ffffff"/><rect x="2" y="7" width="1" height="1" fill="#0000ff"/><rect x="3" y="7" width="4" height="1" fill="#ffffff"/><rect x="7" y="7" width="1" height="1" fill="#000000"/><rect x="8" y="7" width="1" height="1" fill="#660000"/><rect x="9" y="7" width="1" height="1" fill="#666666"/><rect x="10" y="7" width="1" height="1" fill="#000000"/><rect x="11" y="7" width="2" height="1" fill="#000066"/><rect x="0" y="8" width="1" height="1" fill="#000066"/><rect x="1" y="8" width="1" height="1" fill="#ffffff"/><rect x="2" y="8" width="1" height="1" fill="#0000ff"/><rect x="3" y="8" width="3" height="1" fill="#ffffff"/><rect x="6" y="8" width="1" height="1" fill="#000066"/><rect x="7" y="8" width="1" height="1" fill="#ffffff"/><rect x="8" y="8" width="2" height="1" fill="#000000"/><rect x="10" y="8" width="1" height="1" fill="#000066"/><rect x="11" y="8" width="1" height="1" fill="#ffffff"/><rect x="12" y="8" width="1" height="1" fill="#000066"/><rect x="0" y="9" width="1" height="1" fill="#000066"/><rect x="1" y="9" width="5" height="1" fill="#ffffff"/><rect x="6" y="9" width="1" height="1" fill="#000066"/><rect x="7" y="9" width="2" height="1" fill="#ffffff"/><rect x="9" y="9" width="1" height="1" fill="#000000"/><rect x="10" y="9" width="2" height="1" fill="#ffffff"/><rect x="12" y="9" width="1" height="1" fill="#000066"/><rect x="0" y="10" width="1" height="1" fill="#000066"/><rect x="1" y="10" width="1" height="1" fill="#ffffff"/><rect x="2" y="10" width="1" height="1" fill="#ffff00"/><rect x="3" y="10" width="3" height="1" fill="#ffffff"/><rect x="6" y="10" width="1" height="1" fill="#000066"/><rect x="7" y="10" width="4" height="1" fill="#ffffff"/><rect x="11" y="10" width="1" height="1" fill="#ffff00"/><rect x="12" y="10" width="1" height="1" fill="#000066"/><rect x="0" y="11" width="1" height="1" fill="#000066"/><rect x="1" y="11" width="2" height="1" fill="#ffff00"/><rect x="3" y="11" width="1" height="1" fill="#ffffff"/><rect x="4" y="11" width="1" height="1" fill="#ffff00"/><rect x="5" y="11" width="1" height="1" fill="#ffffff"/><rect x="6" y="11" width="1" height="1" fill="#000066"/><rect x="7" y="11" width="1" height="1" fill="#ffff00"/><rect x="8" y="11" width="2" height="1" fill="#ffffff"/><rect x="10" y="11" width="2" height="1" fill="#ffff00"/><rect x="12" y="11" width="1" height="1" fill="#000066"/><rect x="0" y="12" width="1" height="1" fill="#000066"/><rect x="1" y="12" width="5" height="1" fill="#ffff00"/><rect x="6" y="12" width="1" height="1" fill="#000066"/><rect x="7" y="12" width="5" height="1" fill="#ffff00"/><rect x="12" y="12" width="1" height="1" fill="#000066"/><rect x="0" y="13" width="13" height="1" fill="#000066"/></svg>
<div style="left:11px;top:296px;font:8px/9px 'Liberation Sans',sans-serif;color:#000;letter-spacing:0.2px;transform:rotate(-10deg) scaleX(0.95);transform-origin:0 100%">ABC</div>
<svg style="left:12px;top:303px" width="15" height="8" viewBox="0 0 15 8" shape-rendering="crispEdges"><rect x="12" y="0" width="3" height="1" fill="#000066"/><rect x="9" y="1" width="4" height="1" fill="#000066"/><rect x="7" y="2" width="4" height="1" fill="#000066"/><rect x="0" y="3" width="2" height="1" fill="#000066"/><rect x="6" y="3" width="3" height="1" fill="#000066"/><rect x="1" y="4" width="3" height="1" fill="#000066"/><rect x="5" y="4" width="3" height="1" fill="#000066"/><rect x="2" y="5" width="5" height="1" fill="#000066"/><rect x="3" y="6" width="3" height="1" fill="#000066"/><rect x="4" y="7" width="1" height="1" fill="#000066"/></svg>
<div style="left:12px;top:320px;font:8px/9px 'Liberation Sans',sans-serif;color:#000;letter-spacing:0.2px;transform:scaleX(0.95);transform-origin:0 0">ABC</div>
<svg style="left:11px;top:329px" width="17" height="3" viewBox="0 0 17 3" shape-rendering="crispEdges"><rect x="3" y="0" width="3" height="1" fill="#ff0000"/><rect x="10" y="0" width="3" height="1" fill="#ff0000"/><rect x="2" y="1" width="1" height="1" fill="#ff0000"/><rect x="6" y="1" width="1" height="1" fill="#ff0000"/><rect x="9" y="1" width="1" height="1" fill="#ff0000"/><rect x="13" y="1" width="1" height="1" fill="#ff0000"/><rect x="0" y="2" width="2" height="1" fill="#ff0000"/><rect x="7" y="2" width="2" height="1" fill="#ff0000"/><rect x="14" y="2" width="2" height="1" fill="#ff0000"/></svg>
<svg style="left:12px;top:343px" width="14" height="11" viewBox="0 0 14 11" shape-rendering="crispEdges"><rect x="2" y="0" width="3" height="1" fill="#000000"/><rect x="8" y="0" width="3" height="1" fill="#000000"/><rect x="2" y="1" width="1" height="1" fill="#000000"/><rect x="3" y="1" width="1" height="1" fill="#ffffff"/><rect x="4" y="1" width="1" height="1" fill="#000000"/><rect x="8" y="1" width="1" height="1" fill="#000000"/><rect x="9" y="1" width="1" height="1" fill="#ffff00"/><rect x="10" y="1" width="1" height="1" fill="#000000"/><rect x="2" y="2" width="1" height="1" fill="#000000"/><rect x="3" y="2" width="1" height="1" fill="#ffffff"/><rect x="4" y="2" width="1" height="1" fill="#000000"/><rect x="8" y="2" width="1" height="1" fill="#000000"/><rect x="9" y="2" width="1" height="1" fill="#ffff00"/><rect x="10" y="2" width="1" height="1" fill="#000000"/><rect x="1" y="3" width="5" height="1" fill="#000000"/><rect x="7" y="3" width="5" height="1" fill="#000000"/><rect x="0" y="4" width="2" height="1" fill="#000000"/><rect x="2" y="4" width="1" height="1" fill="#ffffff"/><rect x="3" y="4" width="5" height="1" fill="#000000"/><rect x="8" y="4" width="1" height="1" fill="#ffff00"/><rect x="9" y="4" width="4" height="1" fill="#000000"/><rect x="0" y="5" width="2" height="1" fill="#000000"/><rect x="2" y="5" width="1" height="1" fill="#ffffff"/><rect x="3" y="5" width="5" height="1" fill="#000000"/><rect x="8" y="5" width="1" height="1" fill="#ffff00"/><rect x="9" y="5" width="5" height="1" fill="#000000"/><rect x="0" y="6" width="14" height="1" fill="#000000"/><rect x="0" y="7" width="6" height="1" fill="#000000"/><rect x="6" y="7" width="2" height="1" fill="#666666"/><rect x="8" y="7" width="6" height="1" fill="#000000"/><rect x="0" y="8" width="1" height="1" fill="#000000"/><rect x="1" y="8" width="1" height="1" fill="#ffff00"/><rect x="2" y="8" width="4" height="1" fill="#000000"/><rect x="8" y="8" width="2" height="1" fill="#000000"/><rect x="10" y="8" width="1" height="1" fill="#ffff00"/><rect x="11" y="8" width="3" height="1" fill="#000000"/><rect x="0" y="9" width="1" height="1" fill="#000000"/><rect x="1" y="9" width="1" height="1" fill="#ffff00"/><rect x="2" y="9" width="4" height="1" fill="#000000"/><rect x="8" y="9" width="2" height="1" fill="#000000"/><rect x="10" y="9" width="1" height="1" fill="#ffff00"/><rect x="11" y="9" width="3" height="1" fill="#000000"/><rect x="0" y="10" width="5" height="1" fill="#000000"/><rect x="9" y="10" width="5" height="1" fill="#000000"/></svg>
<svg style="left:11px;top:371px" width="16" height="15" viewBox="0 0 16 15" shape-rendering="crispEdges"><rect x="12" y="0" width="1" height="1" fill="#666666"/><rect x="12" y="1" width="1" height="1" fill="#666666"/><rect x="12" y="2" width="1" height="1" fill="#666666"/><rect x="9" y="3" width="7" height="1" fill="#666666"/><rect x="12" y="4" width="1" height="1" fill="#666666"/><rect x="12" y="5" width="1" height="1" fill="#666666"/><rect x="12" y="6" width="1" height="1" fill="#666666"/><rect x="0" y="8" width="13" height="1" fill="#000000"/><rect x="1" y="9" width="1" height="1" fill="#000000"/><rect x="2" y="9" width="4" height="1" fill="#ffffff"/><rect x="6" y="9" width="1" height="1" fill="#ffff00"/><rect x="7" y="9" width="1" height="1" fill="#ffffff"/><rect x="8" y="9" width="1" height="1" fill="#ffff00"/><rect x="9" y="9" width="2" height="1" fill="#ffffff"/><rect x="11" y="9" width="1" height="1" fill="#000000"/><rect x="2" y="10" width="1" height="1" fill="#000000"/><rect x="3" y="10" width="3" height="1" fill="#ffffff"/><rect x="6" y="10" width="1" height="1" fill="#ffff00"/><rect x="7" y="10" width="3" height="1" fill="#ffffff"/><rect x="10" y="10" width="1" height="1" fill="#000000"/><rect x="3" y="11" width="1" height="1" fill="#000000"/><rect x="4" y="11" width="2" height="1" fill="#ffffff"/><rect x="6" y="11" width="1" height="1" fill="#ffff00"/><rect x="7" y="11" width="2" height="1" fill="#ffffff"/><rect x="9" y="11" width="1" height="1" fill="#000000"/><rect x="4" y="12" width="1" height="1" fill="#000000"/><rect x="5" y="12" width="3" height="1" fill="#ffffff"/><rect x="8" y="12" width="1" height="1" fill="#000000"/><rect x="4" y="13" width="1" height="1" fill="#000000"/><rect x="5" y="13" width="3" height="1" fill="#ffffff"/><rect x="8" y="13" width="1" height="1" fill="#000000"/><rect x="4" y="14" width="5" height="1" fill="#000000"/></svg>
<div style="left:11px;top:391px;line-height:11px;height:11px;font-size:10px;font-family:'Liberation Sans',sans-serif;color:#000066;white-space:pre;font-weight:bold;transform:scaleX(1.2);transform-origin:0 0;">A</div>
<div style="left:20px;top:400px;line-height:10px;height:10px;font-size:9px;font-family:'Liberation Sans',sans-serif;color:#000000;white-space:pre;font-weight:bold;transform:scaleX(1.25);transform-origin:0 0;">Z</div>
<svg style="left:13px;top:401px" width="5" height="5" viewBox="0 0 5 5" shape-rendering="crispEdges"><rect x="0" y="0" width="1" height="1" fill="#000066"/><rect x="1" y="1" width="1" height="1" fill="#000066"/><rect x="2" y="2" width="1" height="1" fill="#000066"/><rect x="4" y="2" width="1" height="1" fill="#000066"/><rect x="3" y="3" width="2" height="1" fill="#000066"/><rect x="2" y="4" width="3" height="1" fill="#000066"/></svg>
<div style="left:11px;top:413px;line-height:10px;height:10px;font-size:9px;font-family:'Liberation Sans',sans-serif;color:#000066;white-space:pre;font-weight:bold;transform:scaleX(1.25);transform-origin:0 0;">Z</div>
<div style="left:18px;top:421px;line-height:11px;height:11px;font-size:10px;font-family:'Liberation Sans',sans-serif;color:#000000;white-space:pre;font-weight:bold;transform:scaleX(1.25);transform-origin:0 0;">A</div>
<svg style="left:12px;top:423px" width="5" height="5" viewBox="0 0 5 5" shape-rendering="crispEdges"><rect x="0" y="0" width="1" height="1" fill="#000066"/><rect x="1" y="1" width="1" height="1" fill="#000066"/><rect x="2" y="2" width="1" height="1" fill="#000066"/><rect x="4" y="2" width="1" height="1" fill="#000066"/><rect x="3" y="3" width="2" height="1" fill="#000066"/><rect x="2" y="4" width="3" height="1" fill="#000066"/></svg>
<svg style="left:12px;top:446px" width="14" height="13" viewBox="0 0 14 13" shape-rendering="crispEdges"><rect x="0" y="0" width="14" height="1" fill="#000000"/><rect x="0" y="1" width="1" height="1" fill="#000000"/><rect x="1" y="1" width="6" height="1" fill="#ffffff"/><rect x="7" y="1" width="1" height="1" fill="#000000"/><rect x="8" y="1" width="5" height="1" fill="#ffffff"/><rect x="13" y="1" width="1" height="1" fill="#000000"/><rect x="0" y="2" width="1" height="1" fill="#000000"/><rect x="1" y="2" width="6" height="1" fill="#ffffff"/><rect x="7" y="2" width="1" height="1" fill="#000000"/><rect x="8" y="2" width="5" height="1" fill="#ffffff"/><rect x="13" y="2" width="1" height="1" fill="#000000"/><rect x="0" y="3" width="14" height="1" fill="#000000"/><rect x="0" y="6" width="8" height="1" fill="#000000"/><rect x="0" y="7" width="1" height="1" fill="#000000"/><rect x="1" y="7" width="6" height="1" fill="#ffffff"/><rect x="7" y="7" width="1" height="1" fill="#000000"/><rect x="0" y="8" width="1" height="1" fill="#000000"/><rect x="1" y="8" width="6" height="1" fill="#ffffff"/><rect x="7" y="8" width="1" height="1" fill="#000000"/><rect x="0" y="9" width="8" height="1" fill="#000000"/><rect x="0" y="10" width="1" height="1" fill="#000000"/><rect x="1" y="10" width="6" height="1" fill="#ffffff"/><rect x="7" y="10" width="1" height="1" fill="#000000"/><rect x="0" y="11" width="1" height="1" fill="#000000"/><rect x="1" y="11" width="6" height="1" fill="#ffffff"/><rect x="7" y="11" width="1" height="1" fill="#000000"/><rect x="0" y="12" width="8" height="1" fill="#000000"/></svg>
<svg style="left:11px;top:469px" width="17" height="13" viewBox="0 0 17 13" shape-rendering="crispEdges"><rect x="0" y="0" width="15" height="1" fill="#666666"/><rect x="0" y="1" width="1" height="1" fill="#666666"/><rect x="1" y="1" width="6" height="1" fill="#ffffff"/><rect x="7" y="1" width="1" height="1" fill="#666666"/><rect x="8" y="1" width="6" height="1" fill="#ffffff"/><rect x="14" y="1" width="1" height="1" fill="#666666"/><rect x="15" y="1" width="1" height="1" fill="#ffffff"/><rect x="0" y="2" width="16" height="1" fill="#666666"/><rect x="16" y="2" width="1" height="1" fill="#ffffff"/><rect x="1" y="3" width="15" height="1" fill="#ffffff"/><rect x="10" y="4" width="1" height="1" fill="#666666"/><rect x="15" y="4" width="1" height="1" fill="#666666"/><rect x="16" y="4" width="1" height="1" fill="#ffffff"/><rect x="0" y="5" width="8" height="1" fill="#666666"/><rect x="10" y="5" width="2" height="1" fill="#666666"/><rect x="14" y="5" width="2" height="1" fill="#666666"/><rect x="16" y="5" width="1" height="1" fill="#ffffff"/><rect x="0" y="6" width="1" height="1" fill="#666666"/><rect x="1" y="6" width="6" height="1" fill="#ffffff"/><rect x="7" y="6" width="1" height="1" fill="#666666"/><rect x="8" y="6" width="1" height="1" fill="#ffffff"/><rect x="10" y="6" width="5" height="1" fill="#666666"/><rect x="15" y="6" width="1" height="1" fill="#ffffff"/><rect x="0" y="7" width="8" height="1" fill="#666666"/><rect x="11" y="7" width="3" height="1" fill="#666666"/><rect x="14" y="7" width="1" height="1" fill="#ffffff"/><rect x="0" y="8" width="1" height="1" fill="#666666"/><rect x="1" y="8" width="6" height="1" fill="#ffffff"/><rect x="7" y="8" width="1" height="1" fill="#666666"/><rect x="8" y="8" width="1" height="1" fill="#ffffff"/><rect x="11" y="8" width="3" height="1" fill="#666666"/><rect x="14" y="8" width="1" height="1" fill="#ffffff"/><rect x="0" y="9" width="8" height="1" fill="#666666"/><rect x="10" y="9" width="5" height="1" fill="#666666"/><rect x="15" y="9" width="1" height="1" fill="#ffffff"/><rect x="1" y="10" width="8" height="1" fill="#ffffff"/><rect x="10" y="10" width="2" height="1" fill="#666666"/><rect x="14" y="10" width="2" height="1" fill="#666666"/><rect x="16" y="10" width="1" height="1" fill="#ffffff"/><rect x="10" y="11" width="1" height="1" fill="#666666"/><rect x="15" y="11" width="1" height="1" fill="#666666"/><rect x="16" y="11" width="1" height="1" fill="#ffffff"/><rect x="11" y="12" width="1" height="1" fill="#ffffff"/><rect x="16" y="12" width="1" height="1" fill="#ffffff"/></svg>
<svg style="left:6px;top:5px" width="16" height="16" viewBox="0 0 16 16" shape-rendering="crispEdges"><rect x="8" y="0" width="1" height="1" fill="#cccccc"/><rect x="7" y="1" width="1" height="1" fill="#cccccc"/><rect x="9" y="1" width="1" height="1" fill="#cccccc"/><rect x="6" y="2" width="3" height="1" fill="#ffffff"/><rect x="10" y="2" width="1" height="1" fill="#cccccc"/><rect x="5" y="3" width="3" height="1" fill="#ffffff"/><rect x="8" y="3" width="1" height="1" fill="#000000"/><rect x="11" y="3" width="1" height="1" fill="#cccccc"/><rect x="4" y="4" width="3" height="1" fill="#ffffff"/><rect x="7" y="4" width="1" height="1" fill="#000000"/><rect x="8" y="4" width="2" height="1" fill="#ffffff"/><rect x="12" y="4" width="1" height="1" fill="#cccccc"/><rect x="3" y="5" width="4" height="1" fill="#ffffff"/><rect x="7" y="5" width="1" height="1" fill="#000000"/><rect x="8" y="5" width="3" height="1" fill="#ffffff"/><rect x="13" y="5" width="1" height="1" fill="#cccccc"/><rect x="2" y="6" width="4" height="1" fill="#ffffff"/><rect x="6" y="6" width="1" height="1" fill="#000000"/><rect x="7" y="6" width="5" height="1" fill="#ffffff"/><rect x="14" y="6" width="1" height="1" fill="#cccccc"/><rect x="1" y="7" width="1" height="1" fill="#000000"/><rect x="2" y="7" width="2" height="1" fill="#666666"/><rect x="4" y="7" width="2" height="1" fill="#ffffff"/><rect x="6" y="7" width="1" height="1" fill="#00cc00"/><rect x="7" y="7" width="2" height="1" fill="#006600"/><rect x="9" y="7" width="5" height="1" fill="#ffffff"/><rect x="14" y="7" width="1" height="1" fill="#000000"/><rect x="1" y="8" width="1" height="1" fill="#000000"/><rect x="2" y="8" width="3" height="1" fill="#ffffff"/><rect x="5" y="8" width="2" height="1" fill="#00cc00"/><rect x="7" y="8" width="3" height="1" fill="#ffff00"/><rect x="10" y="8" width="2" height="1" fill="#0000ff"/><rect x="12" y="8" width="2" height="1" fill="#ffffff"/><rect x="14" y="8" width="1" height="1" fill="#000000"/><rect x="2" y="9" width="3" height="1" fill="#ffffff"/><rect x="5" y="9" width="1" height="1" fill="#00cc00"/><rect x="6" y="9" width="1" height="1" fill="#006600"/><rect x="7" y="9" width="3" height="1" fill="#ffff00"/><rect x="10" y="9" width="3" height="1" fill="#006600"/><rect x="13" y="9" width="1" height="1" fill="#0000ff"/><rect x="14" y="9" width="1" height="1" fill="#000000"/><rect x="1" y="10" width="3" height="1" fill="#ffffff"/><rect x="4" y="10" width="1" height="1" fill="#00cc00"/><rect x="5" y="10" width="3" height="1" fill="#006600"/><rect x="8" y="10" width="1" height="1" fill="#ffff00"/><rect x="9" y="10" width="4" height="1" fill="#006600"/><rect x="13" y="10" width="1" height="1" fill="#0000ff"/><rect x="14" y="10" width="1" height="1" fill="#000000"/><rect x="1" y="11" width="2" height="1" fill="#ffffff"/><rect x="3" y="11" width="2" height="1" fill="#00cc00"/><rect x="5" y="11" width="1" height="1" fill="#006600"/><rect x="6" y="11" width="3" height="1" fill="#0000ff"/><rect x="9" y="11" width="4" height="1" fill="#006600"/><rect x="13" y="11" width="1" height="1" fill="#0000ff"/><rect x="14" y="11" width="1" height="1" fill="#000000"/><rect x="15" y="11" width="1" height="1" fill="#cccccc"/><rect x="0" y="12" width="2" height="1" fill="#ffffff"/><rect x="2" y="12" width="1" height="1" fill="#006600"/><rect x="3" y="12" width="1" height="1" fill="#00cc00"/><rect x="4" y="12" width="1" height="1" fill="#006600"/><rect x="5" y="12" width="1" height="1" fill="#0000ff"/><rect x="6" y="12" width="2" height="1" fill="#006600"/><rect x="8" y="12" width="1" height="1" fill="#0000ff"/><rect x="9" y="12" width="3" height="1" fill="#006600"/><rect x="12" y="12" width="2" height="1" fill="#0000ff"/><rect x="14" y="12" width="1" height="1" fill="#000000"/><rect x="0" y="13" width="1" height="1" fill="#ffffff"/><rect x="1" y="13" width="1" height="1" fill="#009999"/><rect x="2" y="13" width="2" height="1" fill="#006600"/><rect x="4" y="13" width="1" height="1" fill="#0000ff"/><rect x="5" y="13" width="3" height="1" fill="#006600"/><rect x="8" y="13" width="1" height="1" fill="#0000ff"/><rect x="9" y="13" width="2" height="1" fill="#006600"/><rect x="11" y="13" width="3" height="1" fill="#0000ff"/><rect x="14" y="13" width="1" height="1" fill="#000000"/><rect x="0" y="14" width="1" height="1" fill="#ffffff"/><rect x="1" y="14" width="1" height="1" fill="#009999"/><rect x="2" y="14" width="1" height="1" fill="#ffffff"/><rect x="3" y="14" width="2" height="1" fill="#0000ff"/><rect x="5" y="14" width="3" height="1" fill="#006600"/><rect x="8" y="14" width="2" height="1" fill="#0000ff"/><rect x="10" y="14" width="1" height="1" fill="#006600"/><rect x="11" y="14" width="3" height="1" fill="#0000ff"/><rect x="14" y="14" width="1" height="1" fill="#000000"/><rect x="0" y="15" width="2" height="1" fill="#ffffff"/><rect x="2" y="15" width="3" height="1" fill="#0000ff"/><rect x="5" y="15" width="3" height="1" fill="#006600"/><rect x="8" y="15" width="1" height="1" fill="#009999"/><rect x="9" y="15" width="4" height="1" fill="#0000ff"/><rect x="13" y="15" width="1" height="1" fill="#ffffff"/><rect x="14" y="15" width="1" height="1" fill="#000000"/></svg>
<svg style="left:346px;top:109px" width="16" height="16" viewBox="0 0 16 16" shape-rendering="crispEdges"><rect x="8" y="0" width="1" height="1" fill="#cccccc"/><rect x="7" y="1" width="1" height="1" fill="#cccccc"/><rect x="9" y="1" width="1" height="1" fill="#cccccc"/><rect x="6" y="2" width="3" height="1" fill="#ffffff"/><rect x="10" y="2" width="1" height="1" fill="#cccccc"/><rect x="5" y="3" width="3" height="1" fill="#ffffff"/><rect x="8" y="3" width="1" height="1" fill="#000000"/><rect x="11" y="3" width="1" height="1" fill="#cccccc"/><rect x="4" y="4" width="3" height="1" fill="#ffffff"/><rect x="7" y="4" width="1" height="1" fill="#000000"/><rect x="8" y="4" width="2" height="1" fill="#ffffff"/><rect x="12" y="4" width="1" height="1" fill="#cccccc"/><rect x="3" y="5" width="4" height="1" fill="#ffffff"/><rect x="7" y="5" width="1" height="1" fill="#000000"/><rect x="8" y="5" width="3" height="1" fill="#ffffff"/><rect x="13" y="5" width="1" height="1" fill="#cccccc"/><rect x="2" y="6" width="4" height="1" fill="#ffffff"/><rect x="6" y="6" width="1" height="1" fill="#000000"/><rect x="7" y="6" width="5" height="1" fill="#ffffff"/><rect x="14" y="6" width="1" height="1" fill="#cccccc"/><rect x="1" y="7" width="1" height="1" fill="#000000"/><rect x="2" y="7" width="2" height="1" fill="#666666"/><rect x="4" y="7" width="2" height="1" fill="#ffffff"/><rect x="6" y="7" width="1" height="1" fill="#00cc00"/><rect x="7" y="7" width="2" height="1" fill="#006600"/><rect x="9" y="7" width="5" height="1" fill="#ffffff"/><rect x="14" y="7" width="1" height="1" fill="#000000"/><rect x="1" y="8" width="1" height="1" fill="#000000"/><rect x="2" y="8" width="3" height="1" fill="#ffffff"/><rect x="5" y="8" width="2" height="1" fill="#00cc00"/><rect x="7" y="8" width="3" height="1" fill="#ffff00"/><rect x="10" y="8" width="2" height="1" fill="#0000ff"/><rect x="12" y="8" width="2" height="1" fill="#ffffff"/><rect x="14" y="8" width="1" height="1" fill="#000000"/><rect x="2" y="9" width="3" height="1" fill="#ffffff"/><rect x="5" y="9" width="1" height="1" fill="#00cc00"/><rect x="6" y="9" width="1" height="1" fill="#006600"/><rect x="7" y="9" width="3" height="1" fill="#ffff00"/><rect x="10" y="9" width="3" height="1" fill="#006600"/><rect x="13" y="9" width="1" height="1" fill="#0000ff"/><rect x="14" y="9" width="1" height="1" fill="#000000"/><rect x="1" y="10" width="3" height="1" fill="#ffffff"/><rect x="4" y="10" width="1" height="1" fill="#00cc00"/><rect x="5" y="10" width="3" height="1" fill="#006600"/><rect x="8" y="10" width="1" height="1" fill="#ffff00"/><rect x="9" y="10" width="4" height="1" fill="#006600"/><rect x="13" y="10" width="1" height="1" fill="#0000ff"/><rect x="14" y="10" width="1" height="1" fill="#000000"/><rect x="1" y="11" width="2" height="1" fill="#ffffff"/><rect x="3" y="11" width="2" height="1" fill="#00cc00"/><rect x="5" y="11" width="1" height="1" fill="#006600"/><rect x="6" y="11" width="3" height="1" fill="#0000ff"/><rect x="9" y="11" width="4" height="1" fill="#006600"/><rect x="13" y="11" width="1" height="1" fill="#0000ff"/><rect x="14" y="11" width="1" height="1" fill="#000000"/><rect x="15" y="11" width="1" height="1" fill="#cccccc"/><rect x="0" y="12" width="2" height="1" fill="#ffffff"/><rect x="2" y="12" width="1" height="1" fill="#006600"/><rect x="3" y="12" width="1" height="1" fill="#00cc00"/><rect x="4" y="12" width="1" height="1" fill="#006600"/><rect x="5" y="12" width="1" height="1" fill="#0000ff"/><rect x="6" y="12" width="2" height="1" fill="#006600"/><rect x="8" y="12" width="1" height="1" fill="#0000ff"/><rect x="9" y="12" width="3" height="1" fill="#006600"/><rect x="12" y="12" width="2" height="1" fill="#0000ff"/><rect x="14" y="12" width="1" height="1" fill="#000000"/><rect x="0" y="13" width="1" height="1" fill="#ffffff"/><rect x="1" y="13" width="1" height="1" fill="#009999"/><rect x="2" y="13" width="2" height="1" fill="#006600"/><rect x="4" y="13" width="1" height="1" fill="#0000ff"/><rect x="5" y="13" width="3" height="1" fill="#006600"/><rect x="8" y="13" width="1" height="1" fill="#0000ff"/><rect x="9" y="13" width="2" height="1" fill="#006600"/><rect x="11" y="13" width="3" height="1" fill="#0000ff"/><rect x="14" y="13" width="1" height="1" fill="#000000"/><rect x="0" y="14" width="1" height="1" fill="#ffffff"/><rect x="1" y="14" width="1" height="1" fill="#009999"/><rect x="2" y="14" width="1" height="1" fill="#ffffff"/><rect x="3" y="14" width="2" height="1" fill="#0000ff"/><rect x="5" y="14" width="3" height="1" fill="#006600"/><rect x="8" y="14" width="2" height="1" fill="#0000ff"/><rect x="10" y="14" width="1" height="1" fill="#006600"/><rect x="11" y="14" width="3" height="1" fill="#0000ff"/><rect x="14" y="14" width="1" height="1" fill="#000000"/><rect x="0" y="15" width="2" height="1" fill="#ffffff"/><rect x="2" y="15" width="3" height="1" fill="#0000ff"/><rect x="5" y="15" width="3" height="1" fill="#006600"/><rect x="8" y="15" width="1" height="1" fill="#009999"/><rect x="9" y="15" width="4" height="1" fill="#0000ff"/><rect x="13" y="15" width="1" height="1" fill="#ffffff"/><rect x="14" y="15" width="1" height="1" fill="#000000"/></svg>
<svg style="left:764px;top:419px" width="14" height="13" viewBox="0 0 14 13" shape-rendering="crispEdges"><rect x="11" y="0" width="3" height="1" fill="#666666"/><rect x="10" y="1" width="4" height="1" fill="#666666"/><rect x="9" y="2" width="4" height="1" fill="#666666"/><rect x="13" y="2" width="1" height="1" fill="#ffffff"/><rect x="8" y="3" width="5" height="1" fill="#666666"/><rect x="13" y="3" width="1" height="1" fill="#ffffff"/><rect x="1" y="4" width="2" height="1" fill="#666666"/><rect x="7" y="4" width="5" height="1" fill="#666666"/><rect x="12" y="4" width="1" height="1" fill="#ffffff"/><rect x="0" y="5" width="4" height="1" fill="#666666"/><rect x="6" y="5" width="5" height="1" fill="#666666"/><rect x="11" y="5" width="1" height="1" fill="#ffffff"/><rect x="0" y="6" width="10" height="1" fill="#666666"/><rect x="10" y="6" width="1" height="1" fill="#ffffff"/><rect x="0" y="7" width="9" height="1" fill="#666666"/><rect x="9" y="7" width="1" height="1" fill="#ffffff"/><rect x="0" y="8" width="8" height="1" fill="#666666"/><rect x="8" y="8" width="1" height="1" fill="#ffffff"/><rect x="1" y="9" width="6" height="1" fill="#666666"/><rect x="7" y="9" width="1" height="1" fill="#ffffff"/><rect x="1" y="10" width="5" height="1" fill="#666666"/><rect x="6" y="10" width="1" height="1" fill="#ffffff"/><rect x="2" y="11" width="3" height="1" fill="#666666"/><rect x="5" y="11" width="1" height="1" fill="#ffffff"/><rect x="3" y="12" width="2" height="1" fill="#ffffff"/></svg>
<svg style="left:796px;top:419px" width="15" height="13" viewBox="0 0 15 13" shape-rendering="crispEdges"><rect x="4" y="0" width="1" height="1" fill="#666666"/><rect x="5" y="0" width="1" height="1" fill="#ffffff"/><rect x="6" y="0" width="1" height="1" fill="#666666"/><rect x="7" y="0" width="1" height="1" fill="#ffffff"/><rect x="8" y="0" width="1" height="1" fill="#666666"/><rect x="9" y="0" width="1" height="1" fill="#ffffff"/><rect x="10" y="0" width="1" height="1" fill="#666666"/><rect x="2" y="1" width="1" height="1" fill="#666666"/><rect x="3" y="1" width="1" height="1" fill="#ffffff"/><rect x="4" y="1" width="1" height="1" fill="#666666"/><rect x="5" y="1" width="1" height="1" fill="#ffffff"/><rect x="6" y="1" width="1" height="1" fill="#666666"/><rect x="7" y="1" width="1" height="1" fill="#ffffff"/><rect x="8" y="1" width="1" height="1" fill="#666666"/><rect x="9" y="1" width="1" height="1" fill="#ffffff"/><rect x="10" y="1" width="1" height="1" fill="#666666"/><rect x="11" y="1" width="1" height="1" fill="#ffffff"/><rect x="12" y="1" width="1" height="1" fill="#666666"/><rect x="1" y="2" width="1" height="1" fill="#666666"/><rect x="2" y="2" width="1" height="1" fill="#ffffff"/><rect x="3" y="2" width="1" height="1" fill="#666666"/><rect x="4" y="2" width="1" height="1" fill="#ffffff"/><rect x="5" y="2" width="1" height="1" fill="#666666"/><rect x="6" y="2" width="1" height="1" fill="#ffffff"/><rect x="7" y="2" width="1" height="1" fill="#666666"/><rect x="8" y="2" width="1" height="1" fill="#ffffff"/><rect x="9" y="2" width="1" height="1" fill="#666666"/><rect x="10" y="2" width="1" height="1" fill="#ffffff"/><rect x="11" y="2" width="1" height="1" fill="#666666"/><rect x="12" y="2" width="1" height="1" fill="#ffffff"/><rect x="13" y="2" width="1" height="1" fill="#666666"/><rect x="0" y="3" width="1" height="1" fill="#666666"/><rect x="1" y="3" width="1" height="1" fill="#ffffff"/><rect x="2" y="3" width="1" height="1" fill="#666666"/><rect x="3" y="3" width="1" height="1" fill="#ffffff"/><rect x="4" y="3" width="1" height="1" fill="#666666"/><rect x="5" y="3" width="1" height="1" fill="#ffffff"/><rect x="6" y="3" width="1" height="1" fill="#666666"/><rect x="7" y="3" width="1" height="1" fill="#ffffff"/><rect x="8" y="3" width="1" height="1" fill="#666666"/><rect x="9" y="3" width="1" height="1" fill="#ffffff"/><rect x="10" y="3" width="1" height="1" fill="#666666"/><rect x="11" y="3" width="1" height="1" fill="#ffffff"/><rect x="12" y="3" width="1" height="1" fill="#666666"/><rect x="13" y="3" width="1" height="1" fill="#ffffff"/><rect x="14" y="3" width="1" height="1" fill="#666666"/><rect x="0" y="4" width="1" height="1" fill="#ffffff"/><rect x="1" y="4" width="1" height="1" fill="#666666"/><rect x="2" y="4" width="1" height="1" fill="#ffffff"/><rect x="3" y="4" width="1" height="1" fill="#666666"/><rect x="4" y="4" width="1" height="1" fill="#ffffff"/><rect x="5" y="4" width="1" height="1" fill="#666666"/><rect x="6" y="4" width="1" height="1" fill="#ffffff"/><rect x="7" y="4" width="1" height="1" fill="#666666"/><rect x="8" y="4" width="1" height="1" fill="#ffffff"/><rect x="9" y="4" width="1" height="1" fill="#666666"/><rect x="10" y="4" width="1" height="1" fill="#ffffff"/><rect x="11" y="4" width="1" height="1" fill="#666666"/><rect x="12" y="4" width="1" height="1" fill="#ffffff"/><rect x="13" y="4" width="1" height="1" fill="#666666"/><rect x="14" y="4" width="1" height="1" fill="#ffffff"/><rect x="0" y="5" width="1" height="1" fill="#666666"/><rect x="1" y="5" width="1" height="1" fill="#ffffff"/><rect x="2" y="5" width="1" height="1" fill="#666666"/><rect x="3" y="5" width="1" height="1" fill="#ffffff"/><rect x="4" y="5" width="1" height="1" fill="#666666"/><rect x="5" y="5" width="1" height="1" fill="#ffffff"/><rect x="6" y="5" width="1" height="1" fill="#666666"/><rect x="7" y="5" width="1" height="1" fill="#ffffff"/><rect x="8" y="5" width="1" height="1" fill="#666666"/><rect x="9" y="5" width="1" height="1" fill="#ffffff"/><rect x="10" y="5" width="1" height="1" fill="#666666"/><rect x="11" y="5" width="1" height="1" fill="#ffffff"/><rect x="12" y="5" width="1" height="1" fill="#666666"/><rect x="13" y="5" width="2" height="1" fill="#ffffff"/><rect x="1" y="6" width="1" height="1" fill="#666666"/><rect x="2" y="6" width="1" height="1" fill="#ffffff"/><rect x="3" y="6" width="1" height="1" fill="#666666"/><rect x="4" y="6" width="1" height="1" fill="#ffffff"/><rect x="5" y="6" width="1" height="1" fill="#666666"/><rect x="6" y="6" width="1" height="1" fill="#ffffff"/><rect x="7" y="6" width="1" height="1" fill="#666666"/><rect x="8" y="6" width="1" height="1" fill="#ffffff"/><rect x="9" y="6" width="1" height="1" fill="#666666"/><rect x="10" y="6" width="1" height="1" fill="#ffffff"/><rect x="11" y="6" width="1" height="1" fill="#666666"/><rect x="12" y="6" width="2" height="1" fill="#ffffff"/><rect x="2" y="7" width="1" height="1" fill="#666666"/><rect x="3" y="7" width="1" height="1" fill="#ffffff"/><rect x="4" y="7" width="1" height="1" fill="#666666"/><rect x="5" y="7" width="1" height="1" fill="#ffffff"/><rect x="6" y="7" width="1" height="1" fill="#666666"/><rect x="7" y="7" width="1" height="1" fill="#ffffff"/><rect x="8" y="7" width="1" height="1" fill="#666666"/><rect x="9" y="7" width="1" height="1" fill="#ffffff"/><rect x="10" y="7" width="1" height="1" fill="#666666"/><rect x="11" y="7" width="2" height="1" fill="#ffffff"/><rect x="3" y="8" width="1" height="1" fill="#666666"/><rect x="4" y="8" width="1" height="1" fill="#ffffff"/><rect x="5" y="8" width="1" height="1" fill="#666666"/><rect x="6" y="8" width="5" height="1" fill="#ffffff"/><rect x="2" y="9" width="2" height="1" fill="#666666"/><rect x="4" y="9" width="3" height="1" fill="#ffffff"/><rect x="1" y="10" width="2" height="1" fill="#666666"/><rect x="3" y="10" width="2" height="1" fill="#ffffff"/><rect x="1" y="11" width="1" height="1" fill="#666666"/><rect x="2" y="11" width="2" height="1" fill="#ffffff"/><rect x="1" y="12" width="2" height="1" fill="#ffffff"/></svg>
<svg style="left:827px;top:419px" width="14" height="13" viewBox="0 0 14 13" shape-rendering="crispEdges"><rect x="1" y="0" width="3" height="1" fill="#666666"/><rect x="11" y="0" width="3" height="1" fill="#666666"/><rect x="1" y="1" width="4" height="1" fill="#666666"/><rect x="10" y="1" width="4" height="1" fill="#666666"/><rect x="2" y="2" width="4" height="1" fill="#666666"/><rect x="9" y="2" width="4" height="1" fill="#666666"/><rect x="13" y="2" width="1" height="1" fill="#ffffff"/><rect x="3" y="3" width="4" height="1" fill="#666666"/><rect x="8" y="3" width="4" height="1" fill="#666666"/><rect x="12" y="3" width="1" height="1" fill="#ffffff"/><rect x="4" y="4" width="7" height="1" fill="#666666"/><rect x="11" y="4" width="1" height="1" fill="#ffffff"/><rect x="5" y="5" width="5" height="1" fill="#666666"/><rect x="10" y="5" width="1" height="1" fill="#ffffff"/><rect x="5" y="6" width="5" height="1" fill="#666666"/><rect x="10" y="6" width="1" height="1" fill="#ffffff"/><rect x="4" y="7" width="7" height="1" fill="#666666"/><rect x="11" y="7" width="1" height="1" fill="#ffffff"/><rect x="3" y="8" width="4" height="1" fill="#666666"/><rect x="7" y="8" width="1" height="1" fill="#ffffff"/><rect x="8" y="8" width="4" height="1" fill="#666666"/><rect x="12" y="8" width="1" height="1" fill="#ffffff"/><rect x="2" y="9" width="4" height="1" fill="#666666"/><rect x="6" y="9" width="1" height="1" fill="#ffffff"/><rect x="9" y="9" width="4" height="1" fill="#666666"/><rect x="13" y="9" width="1" height="1" fill="#ffffff"/><rect x="1" y="10" width="4" height="1" fill="#666666"/><rect x="5" y="10" width="1" height="1" fill="#ffffff"/><rect x="10" y="10" width="3" height="1" fill="#666666"/><rect x="13" y="10" width="1" height="1" fill="#ffffff"/><rect x="1" y="11" width="3" height="1" fill="#666666"/><rect x="4" y="11" width="1" height="1" fill="#ffffff"/><rect x="11" y="11" width="2" height="1" fill="#666666"/><rect x="13" y="11" width="1" height="1" fill="#ffffff"/><rect x="2" y="12" width="2" height="1" fill="#ffffff"/><rect x="12" y="12" width="2" height="1" fill="#ffffff"/></svg>
<svg style="left:38px;top:691px" width="8" height="10" viewBox="0 0 8 10" shape-rendering="crispEdges"><rect x="0" y="0" width="1" height="1" fill="#666666"/><rect x="1" y="0" width="1" height="1" fill="#ffffff"/><rect x="6" y="0" width="1" height="1" fill="#666666"/><rect x="0" y="1" width="1" height="1" fill="#666666"/><rect x="1" y="1" width="1" height="1" fill="#ffffff"/><rect x="5" y="1" width="2" height="1" fill="#666666"/><rect x="0" y="2" width="1" height="1" fill="#666666"/><rect x="1" y="2" width="1" height="1" fill="#ffffff"/><rect x="4" y="2" width="3" height="1" fill="#666666"/><rect x="0" y="3" width="1" height="1" fill="#666666"/><rect x="1" y="3" width="1" height="1" fill="#ffffff"/><rect x="3" y="3" width="4" height="1" fill="#666666"/><rect x="0" y="4" width="1" height="1" fill="#666666"/><rect x="1" y="4" width="1" height="1" fill="#ffffff"/><rect x="2" y="4" width="5" height="1" fill="#666666"/><rect x="0" y="5" width="1" height="1" fill="#666666"/><rect x="1" y="5" width="1" height="1" fill="#ffffff"/><rect x="3" y="5" width="4" height="1" fill="#666666"/><rect x="7" y="5" width="1" height="1" fill="#ffffff"/><rect x="0" y="6" width="1" height="1" fill="#666666"/><rect x="1" y="6" width="1" height="1" fill="#ffffff"/><rect x="4" y="6" width="3" height="1" fill="#666666"/><rect x="7" y="6" width="1" height="1" fill="#ffffff"/><rect x="0" y="7" width="1" height="1" fill="#666666"/><rect x="1" y="7" width="1" height="1" fill="#ffffff"/><rect x="5" y="7" width="2" height="1" fill="#666666"/><rect x="7" y="7" width="1" height="1" fill="#ffffff"/><rect x="0" y="8" width="1" height="1" fill="#666666"/><rect x="1" y="8" width="1" height="1" fill="#ffffff"/><rect x="6" y="8" width="1" height="1" fill="#666666"/><rect x="7" y="8" width="1" height="1" fill="#ffffff"/><rect x="0" y="9" width="1" height="1" fill="#666666"/><rect x="1" y="9" width="1" height="1" fill="#ffffff"/><rect x="7" y="9" width="1" height="1" fill="#ffffff"/></svg>
<svg style="left:56px;top:691px" width="6" height="10" viewBox="0 0 6 10" shape-rendering="crispEdges"><rect x="4" y="0" width="1" height="1" fill="#666666"/><rect x="3" y="1" width="2" height="1" fill="#666666"/><rect x="2" y="2" width="3" height="1" fill="#666666"/><rect x="1" y="3" width="4" height="1" fill="#666666"/><rect x="0" y="4" width="5" height="1" fill="#666666"/><rect x="1" y="5" width="4" height="1" fill="#666666"/><rect x="5" y="5" width="1" height="1" fill="#ffffff"/><rect x="2" y="6" width="3" height="1" fill="#666666"/><rect x="5" y="6" width="1" height="1" fill="#ffffff"/><rect x="3" y="7" width="2" height="1" fill="#666666"/><rect x="5" y="7" width="1" height="1" fill="#ffffff"/><rect x="4" y="8" width="1" height="1" fill="#666666"/><rect x="5" y="8" width="1" height="1" fill="#ffffff"/><rect x="5" y="9" width="1" height="1" fill="#ffffff"/></svg>
<svg style="left:72px;top:691px" width="6" height="10" viewBox="0 0 6 10" shape-rendering="crispEdges"><rect x="0" y="0" width="1" height="1" fill="#666666"/><rect x="0" y="1" width="2" height="1" fill="#666666"/><rect x="0" y="2" width="3" height="1" fill="#666666"/><rect x="0" y="3" width="4" height="1" fill="#666666"/><rect x="0" y="4" width="5" height="1" fill="#666666"/><rect x="0" y="5" width="4" height="1" fill="#666666"/><rect x="4" y="5" width="1" height="1" fill="#ffffff"/><rect x="0" y="6" width="3" height="1" fill="#666666"/><rect x="3" y="6" width="1" height="1" fill="#ffffff"/><rect x="0" y="7" width="2" height="1" fill="#666666"/><rect x="2" y="7" width="1" height="1" fill="#ffffff"/><rect x="0" y="8" width="1" height="1" fill="#666666"/><rect x="1" y="8" width="1" height="1" fill="#ffffff"/><rect x="0" y="9" width="1" height="1" fill="#ffffff"/></svg>
<svg style="left:87px;top:691px" width="8" height="10" viewBox="0 0 8 10" shape-rendering="crispEdges"><rect x="0" y="0" width="1" height="1" fill="#666666"/><rect x="6" y="0" width="1" height="1" fill="#666666"/><rect x="7" y="0" width="1" height="1" fill="#ffffff"/><rect x="0" y="1" width="2" height="1" fill="#666666"/><rect x="6" y="1" width="1" height="1" fill="#666666"/><rect x="7" y="1" width="1" height="1" fill="#ffffff"/><rect x="0" y="2" width="3" height="1" fill="#666666"/><rect x="6" y="2" width="1" height="1" fill="#666666"/><rect x="7" y="2" width="1" height="1" fill="#ffffff"/><rect x="0" y="3" width="4" height="1" fill="#666666"/><rect x="6" y="3" width="1" height="1" fill="#666666"/><rect x="7" y="3" width="1" height="1" fill="#ffffff"/><rect x="0" y="4" width="5" height="1" fill="#666666"/><rect x="6" y="4" width="1" height="1" fill="#666666"/><rect x="7" y="4" width="1" height="1" fill="#ffffff"/><rect x="0" y="5" width="4" height="1" fill="#666666"/><rect x="4" y="5" width="1" height="1" fill="#ffffff"/><rect x="6" y="5" width="1" height="1" fill="#666666"/><rect x="7" y="5" width="1" height="1" fill="#ffffff"/><rect x="0" y="6" width="3" height="1" fill="#666666"/><rect x="3" y="6" width="1" height="1" fill="#ffffff"/><rect x="6" y="6" width="1" height="1" fill="#666666"/><rect x="7" y="6" width="1" height="1" fill="#ffffff"/><rect x="0" y="7" width="2" height="1" fill="#666666"/><rect x="2" y="7" width="1" height="1" fill="#ffffff"/><rect x="6" y="7" width="1" height="1" fill="#666666"/><rect x="7" y="7" width="1" height="1" fill="#ffffff"/><rect x="0" y="8" width="1" height="1" fill="#666666"/><rect x="1" y="8" width="1" height="1" fill="#ffffff"/><rect x="6" y="8" width="1" height="1" fill="#666666"/><rect x="7" y="8" width="1" height="1" fill="#ffffff"/><rect x="0" y="9" width="1" height="1" fill="#ffffff"/><rect x="6" y="9" width="1" height="1" fill="#666666"/><rect x="7" y="9" width="1" height="1" fill="#ffffff"/></svg>
<svg style="left:305px;top:13px" width="12" height="19" viewBox="0 0 12 19" shape-rendering="crispEdges"><rect x="0" y="0" width="1" height="1" fill="#000000"/><rect x="0" y="1" width="2" height="1" fill="#000000"/><rect x="0" y="2" width="1" height="1" fill="#000000"/><rect x="1" y="2" width="1" height="1" fill="#ffffff"/><rect x="2" y="2" width="1" height="1" fill="#000000"/><rect x="0" y="3" width="1" height="1" fill="#000000"/><rect x="1" y="3" width="2" height="1" fill="#ffffff"/><rect x="3" y="3" width="1" height="1" fill="#000000"/><rect x="0" y="4" width="1" height="1" fill="#000000"/><rect x="1" y="4" width="3" height="1" fill="#ffffff"/><rect x="4" y="4" width="1" height="1" fill="#000000"/><rect x="0" y="5" width="1" height="1" fill="#000000"/><rect x="1" y="5" width="4" height="1" fill="#ffffff"/><rect x="5" y="5" width="1" height="1" fill="#000000"/><rect x="0" y="6" width="1" height="1" fill="#000000"/><rect x="1" y="6" width="5" height="1" fill="#ffffff"/><rect x="6" y="6" width="1" height="1" fill="#000000"/><rect x="0" y="7" width="1" height="1" fill="#000000"/><rect x="1" y="7" width="6" height="1" fill="#ffffff"/><rect x="7" y="7" width="1" height="1" fill="#000000"/><rect x="0" y="8" width="1" height="1" fill="#000000"/><rect x="1" y="8" width="7" height="1" fill="#ffffff"/><rect x="8" y="8" width="1" height="1" fill="#000000"/><rect x="0" y="9" width="1" height="1" fill="#000000"/><rect x="1" y="9" width="8" height="1" fill="#ffffff"/><rect x="9" y="9" width="1" height="1" fill="#000000"/><rect x="0" y="10" width="1" height="1" fill="#000000"/><rect x="1" y="10" width="5" height="1" fill="#ffffff"/><rect x="6" y="10" width="5" height="1" fill="#000000"/><rect x="0" y="11" width="1" height="1" fill="#000000"/><rect x="1" y="11" width="2" height="1" fill="#ffffff"/><rect x="3" y="11" width="1" height="1" fill="#000000"/><rect x="4" y="11" width="2" height="1" fill="#ffffff"/><rect x="6" y="11" width="1" height="1" fill="#000000"/><rect x="0" y="12" width="1" height="1" fill="#000000"/><rect x="1" y="12" width="1" height="1" fill="#ffffff"/><rect x="2" y="12" width="1" height="1" fill="#000000"/><rect x="4" y="12" width="1" height="1" fill="#000000"/><rect x="5" y="12" width="2" height="1" fill="#ffffff"/><rect x="7" y="12" width="1" height="1" fill="#000000"/><rect x="0" y="13" width="2" height="1" fill="#000000"/><rect x="4" y="13" width="1" height="1" fill="#000000"/><rect x="5" y="13" width="2" height="1" fill="#ffffff"/><rect x="7" y="13" width="1" height="1" fill="#000000"/><rect x="0" y="14" width="1" height="1" fill="#000000"/><rect x="5" y="14" width="1" height="1" fill="#000000"/><rect x="6" y="14" width="2" height="1" fill="#ffffff"/><rect x="8" y="14" width="1" height="1" fill="#000000"/><rect x="5" y="15" width="1" height="1" fill="#000000"/><rect x="6" y="15" width="2" height="1" fill="#ffffff"/><rect x="8" y="15" width="1" height="1" fill="#000000"/><rect x="6" y="16" width="1" height="1" fill="#000000"/><rect x="7" y="16" width="2" height="1" fill="#ffffff"/><rect x="9" y="16" width="1" height="1" fill="#000000"/><rect x="6" y="17" width="1" height="1" fill="#000000"/><rect x="7" y="17" width="2" height="1" fill="#ffffff"/><rect x="9" y="17" width="1" height="1" fill="#000000"/><rect x="7" y="18" width="2" height="1" fill="#000000"/></svg>
</body></html>
